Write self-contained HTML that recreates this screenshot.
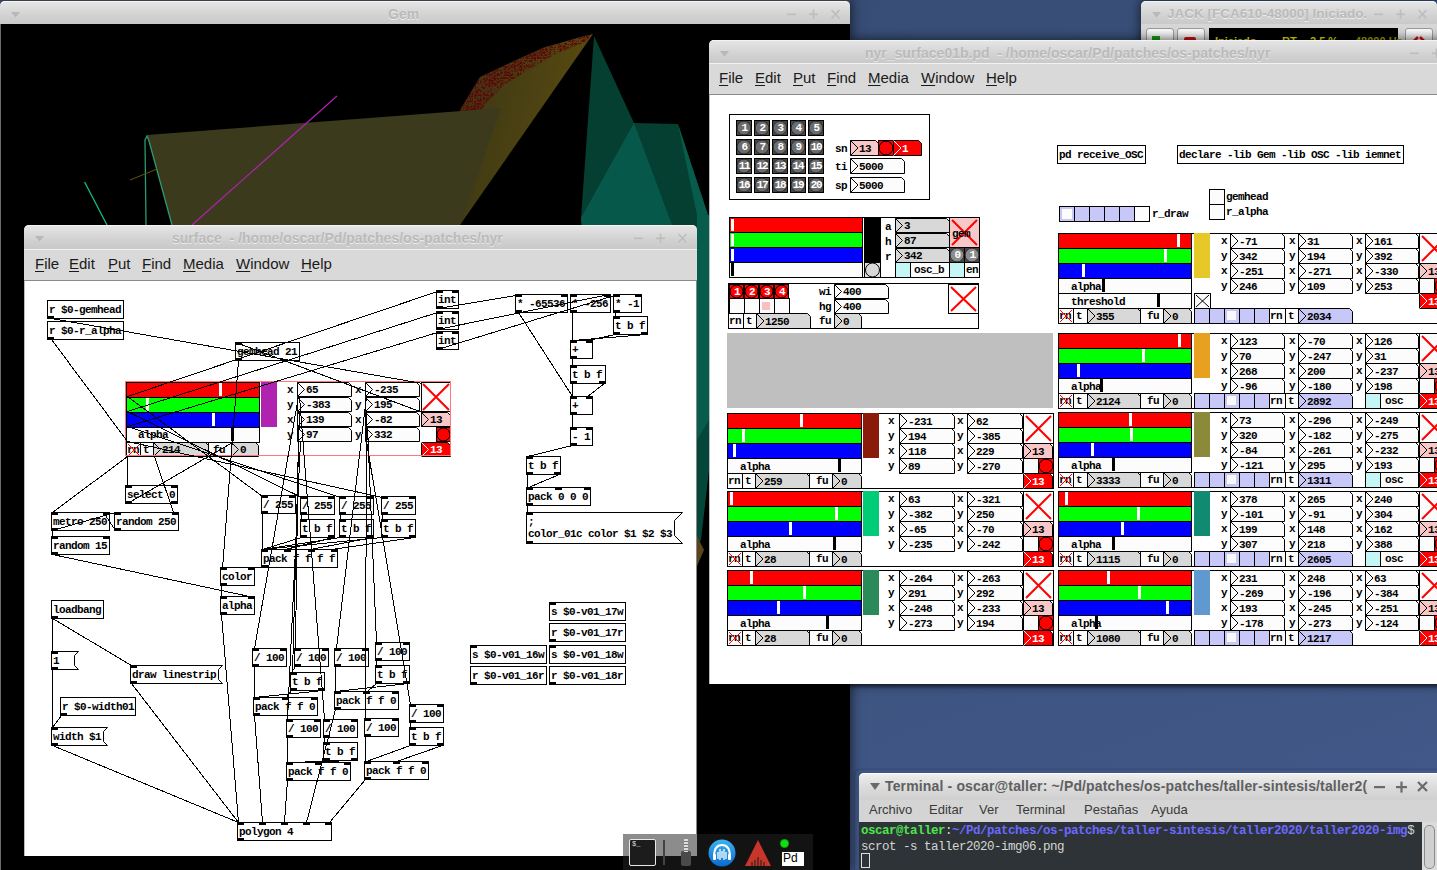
<!DOCTYPE html><html><head><meta charset="utf-8"><style>html,body{margin:0;padding:0;width:1437px;height:870px;overflow:hidden;position:relative;background:linear-gradient(160deg,#34496f 0%,#3a5079 40%,#42598a 100%);}div,svg{position:absolute}</style></head><body><div style="left:0;top:0;width:850px;height:870px;box-shadow:0 0 10px 2px rgba(0,0,0,.55)"></div><div style="left:0;top:0;width:850px;height:1px;background:#3a3f4a"></div><div style="position:absolute;left:0px;top:1px;width:850px;height:24px;border-radius:5px 5px 0 0;background:linear-gradient(#e6e6e6,#d2d2d2 60%,#c8c8c8);box-shadow:inset 0 1px 0 #f4f4f4;"></div><svg style="position:absolute;left:10px;top:11px" width="12" height="8"><polygon points="1,1 10,1 5.5,6.5" fill="#b8b8b8"/></svg><div style="position:absolute;left:388px;top:6px;white-space:pre;color:#bababa;font-family:'Liberation Sans',sans-serif;font-weight:bold;font-size:14px;line-height:16px;text-shadow:0 1px 0 #ececec;">Gem</div><svg style="position:absolute;left:786px;top:9px" width="56" height="12"><rect x="1" y="4.5" width="9" height="1.6" fill="#bdbdbd"/><rect x="23" y="4.5" width="9" height="1.6" fill="#bdbdbd"/><rect x="26.7" y="0.5" width="1.6" height="9.5" fill="#bdbdbd"/><path d="M45.5,1 L53.5,9.5 M53.5,1 L45.5,9.5" stroke="#bdbdbd" stroke-width="1.6"/></svg><div style="position:absolute;left:0px;top:24px;width:850px;height:846px;background:#000;"></div><div style="left:0;top:24px;width:1px;height:846px;background:#6a6a6a"></div><svg style="left:0;top:24px" width="850" height="846" viewBox="0 24 850 846">
<defs><linearGradient id="yl" x1="0" y1="0" x2="1" y2="0.3"><stop offset="0" stop-color="#3a3515"/><stop offset="0.6" stop-color="#4c4212"/><stop offset="1" stop-color="#5a4c10"/></linearGradient></defs>
<polygon points="460,110 480,77 514,61 544,47.6 579,37.6 593,34 460,225" fill="url(#yl)"/>
<filter id="spk" x="0" y="0" width="1" height="1" color-interpolation-filters="sRGB"><feTurbulence type="turbulence" baseFrequency="0.35" numOctaves="2" seed="7" result="n"/><feColorMatrix in="n" type="matrix" values="0 0 0 0 0.36  0 0 0 0 0.03  0 0 0 0 0.03  3.5 0 0 0 -0.35" result="c"/><feComposite in="c" in2="SourceGraphic" operator="in"/></filter>
<polygon points="460,110 480,77 514,61 544,47.6 579,37.6 593,34 585,42 560,52 535,66 505,84 485,104 470,130" fill="#fff" filter="url(#spk)"/>

<polygon points="147,135 501,108 460,225 172,225" fill="#3b3a1d"/>
<polygon points="594,36 634,123 678,124 708,215 697,215 697,240 586,240 581,218" fill="#053f32"/>
<polygon points="634,123 581,218 586,300 700,300" fill="#06594a"/>
<polygon points="678,124 708,215 709,215 709,450 697,450 697,215" fill="#075c4b"/>
<polygon points="697,440 709,420 709,470 701,540 697,545" fill="#05463a"/>
<polygon points="697,536 704,550 697,566" fill="#5a4418"/>
<line x1="84.6" y1="182" x2="107" y2="225" stroke="#14c07c" stroke-width="1.3"/>
<path d="M146,225 L145,140 L147,136 L149,141 L172,225" stroke="#2a9a72" stroke-width="1.3" fill="none"/>
<line x1="337" y1="96" x2="192" y2="225" stroke="#b022b0" stroke-width="1.2"/>
<line x1="130" y1="180" x2="157" y2="169" stroke="#6a5010" stroke-width="1"/>
</svg><div style="left:1141px;top:1px;width:300px;height:60px;border-radius:5px 5px 0 0;box-shadow:0 0 10px 2px rgba(0,0,0,.5)"></div><div style="position:absolute;left:1141px;top:1px;width:296px;height:24px;border-radius:5px 5px 0 0;background:linear-gradient(#e6e6e6,#d2d2d2 60%,#c8c8c8);box-shadow:inset 0 1px 0 #f4f4f4;"></div><svg style="position:absolute;left:1151px;top:11px" width="12" height="8"><polygon points="1,1 10,1 5.5,6.5" fill="#b8b8b8"/></svg><div style="position:absolute;left:1167px;top:6px;white-space:pre;color:#bababa;font-family:'Liberation Sans',sans-serif;font-weight:bold;font-size:13.5px;line-height:16px;text-shadow:0 1px 0 #ececec;">JACK [FCA610-48000] Iniciado.</div><svg style="position:absolute;left:1373px;top:9px" width="56" height="12"><rect x="1" y="4.5" width="9" height="1.6" fill="#bdbdbd"/><rect x="23" y="4.5" width="9" height="1.6" fill="#bdbdbd"/><rect x="26.7" y="0.5" width="1.6" height="9.5" fill="#bdbdbd"/><path d="M45.5,1 L53.5,9.5 M53.5,1 L45.5,9.5" stroke="#bdbdbd" stroke-width="1.6"/></svg><div style="position:absolute;left:1141px;top:24px;width:296px;height:16px;background:#d6d6d6;"></div><div style="left:1146px;top:28px;width:26px;height:14px;border:1px solid #9a9a9a;border-radius:3px;background:linear-gradient(#fafafa,#e4e4e4)"></div><div style="left:1177px;top:28px;width:26px;height:14px;border:1px solid #9a9a9a;border-radius:3px;background:linear-gradient(#fafafa,#e4e4e4)"></div><div style="left:1152px;top:36px;width:8px;height:6px;background:#1a9a1a"></div><div style="left:1184px;top:37px;width:12px;height:5px;background:#d01010;border-radius:2px"></div><div style="position:absolute;left:1209px;top:28px;width:189px;height:12px;background:#000;"></div><div style="position:absolute;left:1215px;top:35px;white-space:pre;color:#e0e000;font-family:'Liberation Sans',sans-serif;font-size:11px;font-weight:bold;line-height:12px">Iniciado</div><div style="position:absolute;left:1282px;top:35px;white-space:pre;color:#e0e000;font-family:'Liberation Sans',sans-serif;font-size:11px;font-weight:bold;line-height:12px">RT</div><div style="position:absolute;left:1310px;top:35px;white-space:pre;color:#e0e000;font-family:'Liberation Sans',sans-serif;font-size:11px;font-weight:bold;line-height:12px">2.5 %</div><div style="position:absolute;left:1355px;top:35px;white-space:pre;color:#a0a000;font-family:'Liberation Sans',sans-serif;font-size:11px;font-weight:bold;line-height:12px">48000 Hz</div><div style="left:1405px;top:28px;width:26px;height:14px;border:1px solid #9a9a9a;border-radius:3px;background:linear-gradient(#fafafa,#e4e4e4)"></div><svg style="left:1411px;top:36px" width="16" height="6"><path d="M2,6 L7,1 M9,1 L14,6" stroke="#d01010" stroke-width="2.5"/></svg><div style="position:absolute;left:24px;top:225px;width:673px;height:24px;border-radius:5px 5px 0 0;background:linear-gradient(#e6e6e6,#d2d2d2 60%,#c8c8c8);box-shadow:inset 0 1px 0 #f4f4f4;"></div><svg style="position:absolute;left:34px;top:235px" width="12" height="8"><polygon points="1,1 10,1 5.5,6.5" fill="#b8b8b8"/></svg><div style="position:absolute;left:172px;top:230px;white-space:pre;color:#bababa;font-family:'Liberation Sans',sans-serif;font-weight:bold;font-size:14px;line-height:16px;text-shadow:0 1px 0 #ececec;">surface  - /home/oscar/Pd/patches/os-patches/nyr</div><svg style="position:absolute;left:633px;top:233px" width="56" height="12"><rect x="1" y="4.5" width="9" height="1.6" fill="#bdbdbd"/><rect x="23" y="4.5" width="9" height="1.6" fill="#bdbdbd"/><rect x="26.7" y="0.5" width="1.6" height="9.5" fill="#bdbdbd"/><path d="M45.5,1 L53.5,9.5 M53.5,1 L45.5,9.5" stroke="#bdbdbd" stroke-width="1.6"/></svg><div style="position:absolute;left:24px;top:249px;width:673px;height:32px;background:#d9d9d9;border-top:1px solid #f2f2f2;border-bottom:1px solid #8a8a8a;box-sizing:border-box"></div><div style="position:absolute;left:35px;top:255px;white-space:pre;color:#1a1a1a;font-family:'Liberation Sans',sans-serif;font-size:15px;line-height:18px;"><span style="text-decoration:underline;text-underline-offset:2px">F</span>ile</div><div style="position:absolute;left:69px;top:255px;white-space:pre;color:#1a1a1a;font-family:'Liberation Sans',sans-serif;font-size:15px;line-height:18px;"><span style="text-decoration:underline;text-underline-offset:2px">E</span>dit</div><div style="position:absolute;left:108px;top:255px;white-space:pre;color:#1a1a1a;font-family:'Liberation Sans',sans-serif;font-size:15px;line-height:18px;"><span style="text-decoration:underline;text-underline-offset:2px">P</span>ut</div><div style="position:absolute;left:142px;top:255px;white-space:pre;color:#1a1a1a;font-family:'Liberation Sans',sans-serif;font-size:15px;line-height:18px;"><span style="text-decoration:underline;text-underline-offset:2px">F</span>ind</div><div style="position:absolute;left:183px;top:255px;white-space:pre;color:#1a1a1a;font-family:'Liberation Sans',sans-serif;font-size:15px;line-height:18px;"><span style="text-decoration:underline;text-underline-offset:2px">M</span>edia</div><div style="position:absolute;left:236px;top:255px;white-space:pre;color:#1a1a1a;font-family:'Liberation Sans',sans-serif;font-size:15px;line-height:18px;"><span style="text-decoration:underline;text-underline-offset:2px">W</span>indow</div><div style="position:absolute;left:301px;top:255px;white-space:pre;color:#1a1a1a;font-family:'Liberation Sans',sans-serif;font-size:15px;line-height:18px;"><span style="text-decoration:underline;text-underline-offset:2px">H</span>elp</div><div style="position:absolute;left:24px;top:281px;width:673px;height:575px;background:#fff;border-left:1px solid #bbb;border-right:1px solid #888;box-sizing:border-box"></div><div style="left:850px;top:40px;width:600px;height:644px;border-radius:5px 5px 0 0;box-shadow:0 0 10px 2px rgba(0,0,0,.5)"></div><div style="left:709px;top:684px;width:728px;height:5px;background:linear-gradient(rgba(0,0,0,.45),rgba(0,0,0,0))"></div><div style="position:absolute;left:709px;top:40px;width:764px;height:24px;border-radius:5px 5px 0 0;background:linear-gradient(#e6e6e6,#d2d2d2 60%,#c8c8c8);box-shadow:inset 0 1px 0 #f4f4f4;"></div><svg style="position:absolute;left:719px;top:50px" width="12" height="8"><polygon points="1,1 10,1 5.5,6.5" fill="#b8b8b8"/></svg><div style="position:absolute;left:865px;top:45px;white-space:pre;color:#bababa;font-family:'Liberation Sans',sans-serif;font-weight:bold;font-size:14px;line-height:16px;text-shadow:0 1px 0 #ececec;">nyr_surface01b.pd  - /home/oscar/Pd/patches/os-patches/nyr</div><svg style="position:absolute;left:1409px;top:48px" width="56" height="12"><rect x="1" y="4.5" width="9" height="1.6" fill="#bdbdbd"/><rect x="23" y="4.5" width="9" height="1.6" fill="#bdbdbd"/><rect x="26.7" y="0.5" width="1.6" height="9.5" fill="#bdbdbd"/><path d="M45.5,1 L53.5,9.5 M53.5,1 L45.5,9.5" stroke="#bdbdbd" stroke-width="1.6"/></svg><div style="position:absolute;left:709px;top:63px;width:728px;height:32px;background:#d9d9d9;border-top:1px solid #f2f2f2;border-bottom:1px solid #8a8a8a;box-sizing:border-box"></div><div style="position:absolute;left:719px;top:69px;white-space:pre;color:#1a1a1a;font-family:'Liberation Sans',sans-serif;font-size:15px;line-height:18px;"><span style="text-decoration:underline;text-underline-offset:2px">F</span>ile</div><div style="position:absolute;left:755px;top:69px;white-space:pre;color:#1a1a1a;font-family:'Liberation Sans',sans-serif;font-size:15px;line-height:18px;"><span style="text-decoration:underline;text-underline-offset:2px">E</span>dit</div><div style="position:absolute;left:793px;top:69px;white-space:pre;color:#1a1a1a;font-family:'Liberation Sans',sans-serif;font-size:15px;line-height:18px;"><span style="text-decoration:underline;text-underline-offset:2px">P</span>ut</div><div style="position:absolute;left:827px;top:69px;white-space:pre;color:#1a1a1a;font-family:'Liberation Sans',sans-serif;font-size:15px;line-height:18px;"><span style="text-decoration:underline;text-underline-offset:2px">F</span>ind</div><div style="position:absolute;left:868px;top:69px;white-space:pre;color:#1a1a1a;font-family:'Liberation Sans',sans-serif;font-size:15px;line-height:18px;"><span style="text-decoration:underline;text-underline-offset:2px">M</span>edia</div><div style="position:absolute;left:921px;top:69px;white-space:pre;color:#1a1a1a;font-family:'Liberation Sans',sans-serif;font-size:15px;line-height:18px;"><span style="text-decoration:underline;text-underline-offset:2px">W</span>indow</div><div style="position:absolute;left:986px;top:69px;white-space:pre;color:#1a1a1a;font-family:'Liberation Sans',sans-serif;font-size:15px;line-height:18px;"><span style="text-decoration:underline;text-underline-offset:2px">H</span>elp</div><div style="position:absolute;left:709px;top:95px;width:728px;height:589px;background:#fff;border-left:1px solid #bbb;box-sizing:border-box"></div><div style="left:47px;top:300px;width:77px;height:19px;border:1px solid #000;box-sizing:border-box"></div><div style="left:47px;top:316px;width:7px;height:3px;background:#000"></div><div style="left:49px;top:302px;height:16px;line-height:16px;white-space:pre;color:#000;font-family:'Liberation Mono',monospace;font-weight:bold;font-size:11px;letter-spacing:-0.6px;">r $0-gemhead</div><div style="left:47px;top:321px;width:77px;height:19px;border:1px solid #000;box-sizing:border-box"></div><div style="left:47px;top:337px;width:7px;height:3px;background:#000"></div><div style="left:49px;top:323px;height:16px;line-height:16px;white-space:pre;color:#000;font-family:'Liberation Mono',monospace;font-weight:bold;font-size:11px;letter-spacing:-0.6px;">r $0-r_alpha</div><div style="left:235px;top:342px;width:65px;height:19px;border:1px solid #000;box-sizing:border-box"></div><div style="left:235px;top:342px;width:7px;height:3px;background:#000"></div><div style="left:235px;top:358px;width:7px;height:3px;background:#000"></div><div style="left:237px;top:344px;height:16px;line-height:16px;white-space:pre;color:#000;font-family:'Liberation Mono',monospace;font-weight:bold;font-size:11px;letter-spacing:-0.6px;">gemhead 21</div><div style="left:436px;top:290px;width:23px;height:19px;border:1px solid #000;box-sizing:border-box"></div><div style="left:436px;top:290px;width:7px;height:3px;background:#000"></div><div style="left:452px;top:290px;width:7px;height:3px;background:#000"></div><div style="left:436px;top:306px;width:7px;height:3px;background:#000"></div><div style="left:438px;top:292px;height:16px;line-height:16px;white-space:pre;color:#000;font-family:'Liberation Mono',monospace;font-weight:bold;font-size:11px;letter-spacing:-0.6px;">int</div><div style="left:436px;top:311px;width:23px;height:19px;border:1px solid #000;box-sizing:border-box"></div><div style="left:436px;top:311px;width:7px;height:3px;background:#000"></div><div style="left:452px;top:311px;width:7px;height:3px;background:#000"></div><div style="left:436px;top:327px;width:7px;height:3px;background:#000"></div><div style="left:438px;top:313px;height:16px;line-height:16px;white-space:pre;color:#000;font-family:'Liberation Mono',monospace;font-weight:bold;font-size:11px;letter-spacing:-0.6px;">int</div><div style="left:436px;top:331px;width:23px;height:19px;border:1px solid #000;box-sizing:border-box"></div><div style="left:436px;top:331px;width:7px;height:3px;background:#000"></div><div style="left:452px;top:331px;width:7px;height:3px;background:#000"></div><div style="left:436px;top:347px;width:7px;height:3px;background:#000"></div><div style="left:438px;top:333px;height:16px;line-height:16px;white-space:pre;color:#000;font-family:'Liberation Mono',monospace;font-weight:bold;font-size:11px;letter-spacing:-0.6px;">int</div><div style="left:515px;top:294px;width:53px;height:19px;border:1px solid #000;box-sizing:border-box"></div><div style="left:515px;top:294px;width:7px;height:3px;background:#000"></div><div style="left:561px;top:294px;width:7px;height:3px;background:#000"></div><div style="left:515px;top:310px;width:7px;height:3px;background:#000"></div><div style="left:517px;top:296px;height:16px;line-height:16px;white-space:pre;color:#000;font-family:'Liberation Mono',monospace;font-weight:bold;font-size:11px;letter-spacing:-0.6px;">* -65536</div><div style="left:570px;top:294px;width:41px;height:19px;border:1px solid #000;box-sizing:border-box"></div><div style="left:570px;top:294px;width:7px;height:3px;background:#000"></div><div style="left:604px;top:294px;width:7px;height:3px;background:#000"></div><div style="left:570px;top:310px;width:7px;height:3px;background:#000"></div><div style="left:572px;top:296px;height:16px;line-height:16px;white-space:pre;color:#000;font-family:'Liberation Mono',monospace;font-weight:bold;font-size:11px;letter-spacing:-0.6px;">* -256</div><div style="left:613px;top:294px;width:29px;height:19px;border:1px solid #000;box-sizing:border-box"></div><div style="left:613px;top:294px;width:7px;height:3px;background:#000"></div><div style="left:635px;top:294px;width:7px;height:3px;background:#000"></div><div style="left:613px;top:310px;width:7px;height:3px;background:#000"></div><div style="left:615px;top:296px;height:16px;line-height:16px;white-space:pre;color:#000;font-family:'Liberation Mono',monospace;font-weight:bold;font-size:11px;letter-spacing:-0.6px;">* -1</div><div style="left:613px;top:316px;width:35px;height:19px;border:1px solid #000;box-sizing:border-box"></div><div style="left:613px;top:316px;width:7px;height:3px;background:#000"></div><div style="left:613px;top:332px;width:7px;height:3px;background:#000"></div><div style="left:641px;top:332px;width:7px;height:3px;background:#000"></div><div style="left:615px;top:318px;height:16px;line-height:16px;white-space:pre;color:#000;font-family:'Liberation Mono',monospace;font-weight:bold;font-size:11px;letter-spacing:-0.6px;">t b f</div><div style="left:570px;top:340px;width:23px;height:19px;border:1px solid #000;box-sizing:border-box"></div><div style="left:570px;top:340px;width:7px;height:3px;background:#000"></div><div style="left:586px;top:340px;width:7px;height:3px;background:#000"></div><div style="left:570px;top:356px;width:7px;height:3px;background:#000"></div><div style="left:572px;top:342px;height:16px;line-height:16px;white-space:pre;color:#000;font-family:'Liberation Mono',monospace;font-weight:bold;font-size:11px;letter-spacing:-0.6px;">+</div><div style="left:570px;top:365px;width:36px;height:19px;border:1px solid #000;box-sizing:border-box"></div><div style="left:570px;top:365px;width:7px;height:3px;background:#000"></div><div style="left:570px;top:381px;width:7px;height:3px;background:#000"></div><div style="left:599px;top:381px;width:7px;height:3px;background:#000"></div><div style="left:572px;top:367px;height:16px;line-height:16px;white-space:pre;color:#000;font-family:'Liberation Mono',monospace;font-weight:bold;font-size:11px;letter-spacing:-0.6px;">t b f</div><div style="left:570px;top:396px;width:23px;height:19px;border:1px solid #000;box-sizing:border-box"></div><div style="left:570px;top:396px;width:7px;height:3px;background:#000"></div><div style="left:586px;top:396px;width:7px;height:3px;background:#000"></div><div style="left:570px;top:412px;width:7px;height:3px;background:#000"></div><div style="left:572px;top:398px;height:16px;line-height:16px;white-space:pre;color:#000;font-family:'Liberation Mono',monospace;font-weight:bold;font-size:11px;letter-spacing:-0.6px;">+</div><div style="left:570px;top:427px;width:23px;height:19px;border:1px solid #000;box-sizing:border-box"></div><div style="left:570px;top:427px;width:7px;height:3px;background:#000"></div><div style="left:586px;top:427px;width:7px;height:3px;background:#000"></div><div style="left:570px;top:443px;width:7px;height:3px;background:#000"></div><div style="left:572px;top:429px;height:16px;line-height:16px;white-space:pre;color:#000;font-family:'Liberation Mono',monospace;font-weight:bold;font-size:11px;letter-spacing:-0.6px;">- 1</div><div style="left:526px;top:456px;width:35px;height:19px;border:1px solid #000;box-sizing:border-box"></div><div style="left:526px;top:456px;width:7px;height:3px;background:#000"></div><div style="left:526px;top:472px;width:7px;height:3px;background:#000"></div><div style="left:554px;top:472px;width:7px;height:3px;background:#000"></div><div style="left:528px;top:458px;height:16px;line-height:16px;white-space:pre;color:#000;font-family:'Liberation Mono',monospace;font-weight:bold;font-size:11px;letter-spacing:-0.6px;">t b f</div><div style="left:526px;top:487px;width:65px;height:19px;border:1px solid #000;box-sizing:border-box"></div><div style="left:526px;top:487px;width:7px;height:3px;background:#000"></div><div style="left:555px;top:487px;width:7px;height:3px;background:#000"></div><div style="left:584px;top:487px;width:7px;height:3px;background:#000"></div><div style="left:526px;top:503px;width:7px;height:3px;background:#000"></div><div style="left:528px;top:489px;height:16px;line-height:16px;white-space:pre;color:#000;font-family:'Liberation Mono',monospace;font-weight:bold;font-size:11px;letter-spacing:-0.6px;">pack 0 0 0</div><svg style="left:526px;top:512px" width="158" height="33"><polygon points="0.5,0.5 156.5,0.5 148.5,8.5 148.5,23.5 156.5,31.5 0.5,31.5" fill="none" stroke="#000" stroke-width="1"/></svg><div style="left:526px;top:512px;width:7px;height:3px;background:#000"></div><div style="left:526px;top:541px;width:7px;height:3px;background:#000"></div><div style="left:528px;top:514px;height:16px;line-height:16px;white-space:pre;color:#000;font-family:'Liberation Mono',monospace;font-weight:bold;font-size:11px;letter-spacing:-0.6px;">;</div><div style="left:528px;top:526px;height:16px;line-height:16px;white-space:pre;color:#000;font-family:'Liberation Mono',monospace;font-weight:bold;font-size:11px;letter-spacing:-0.6px;">color_01c color $1 $2 $3</div><div style="left:126px;top:382px;width:134px;height:16px;background:#f00;border:1px solid #000;box-sizing:border-box"></div><div style="left:126px;top:397px;width:134px;height:16px;background:#0f0;border:1px solid #000;box-sizing:border-box"></div><div style="left:126px;top:412px;width:134px;height:16px;background:#00f;border:1px solid #000;box-sizing:border-box"></div><div style="left:126px;top:427px;width:134px;height:16px;background:#fcfcfc;border:1px solid #000;box-sizing:border-box"></div><div style="position:absolute;left:219px;top:383px;width:3px;height:13px;background:#fff;"></div><div style="position:absolute;left:146px;top:398px;width:3px;height:13px;background:#fff;"></div><div style="position:absolute;left:212px;top:413px;width:3px;height:13px;background:#fff;"></div><div style="position:absolute;left:231px;top:428px;width:3px;height:13px;background:#000;"></div><div style="left:138px;top:428px;height:15px;line-height:15px;white-space:pre;color:#000;font-family:'Liberation Mono',monospace;font-weight:bold;font-size:11px;letter-spacing:-0.6px;">alpha</div><div style="left:126px;top:442px;width:15px;height:15px;background:#fcfcfc;border:1px solid #000;box-sizing:border-box"></div><div style="left:127px;top:443px;height:15px;line-height:15px;white-space:pre;color:#000;font-family:'Liberation Mono',monospace;font-weight:bold;font-size:11px;letter-spacing:-0.6px;">rn</div><svg style="left:127px;top:443px" width="14" height="14"><path d="M1,1 L13,13 M13,1 L1,13" stroke="#f00" stroke-width="1"/></svg><div style="left:140px;top:442px;width:14px;height:15px;background:#fcfcfc;border:1px solid #000;box-sizing:border-box"></div><div style="left:143px;top:443px;height:15px;line-height:15px;white-space:pre;color:#000;font-family:'Liberation Mono',monospace;font-weight:bold;font-size:11px;letter-spacing:-0.6px;">t</div><svg style="left:153px;top:442px" width="56" height="15"><polygon points="0.5,0.5 52.5,0.5 55.5,3.5 55.5,14.5 0.5,14.5" fill="#d8d8d8" stroke="#000" stroke-width="1"/><polyline points="0.5,0.5 7.5,7.5 0.5,14.5" fill="none" stroke="#000" stroke-width="1"/></svg><div style="left:162px;top:443px;height:14px;line-height:15px;white-space:pre;color:#000;font-family:'Liberation Mono',monospace;font-weight:bold;font-size:11px;letter-spacing:-0.6px;">214</div><div style="left:208px;top:442px;width:24px;height:15px;background:#fcfcfc;border:1px solid #000;box-sizing:border-box"></div><div style="left:213px;top:443px;height:15px;line-height:15px;white-space:pre;color:#000;font-family:'Liberation Mono',monospace;font-weight:bold;font-size:11px;letter-spacing:-0.6px;">fu</div><svg style="left:231px;top:442px" width="28" height="15"><polygon points="0.5,0.5 24.5,0.5 27.5,3.5 27.5,14.5 0.5,14.5" fill="#d8d8d8" stroke="#000" stroke-width="1"/><polyline points="0.5,0.5 7.5,7.5 0.5,14.5" fill="none" stroke="#000" stroke-width="1"/></svg><div style="left:240px;top:443px;height:14px;line-height:15px;white-space:pre;color:#000;font-family:'Liberation Mono',monospace;font-weight:bold;font-size:11px;letter-spacing:-0.6px;">0</div><div style="position:absolute;left:261px;top:382px;width:16px;height:45px;background:#b022b0;"></div><div style="left:287px;top:383px;height:15px;line-height:15px;white-space:pre;color:#000;font-family:'Liberation Mono',monospace;font-weight:bold;font-size:11px;letter-spacing:-0.6px;">x</div><svg style="left:297px;top:382px" width="55" height="15"><polygon points="0.5,0.5 51.5,0.5 54.5,3.5 54.5,14.5 0.5,14.5" fill="#fcfcfc" stroke="#000" stroke-width="1"/><polyline points="0.5,0.5 7.5,7.5 0.5,14.5" fill="none" stroke="#000" stroke-width="1"/></svg><div style="left:306px;top:383px;height:14px;line-height:15px;white-space:pre;color:#000;font-family:'Liberation Mono',monospace;font-weight:bold;font-size:11px;letter-spacing:-0.6px;">65</div><div style="left:287px;top:398px;height:15px;line-height:15px;white-space:pre;color:#000;font-family:'Liberation Mono',monospace;font-weight:bold;font-size:11px;letter-spacing:-0.6px;">y</div><svg style="left:297px;top:397px" width="55" height="15"><polygon points="0.5,0.5 51.5,0.5 54.5,3.5 54.5,14.5 0.5,14.5" fill="#fcfcfc" stroke="#000" stroke-width="1"/><polyline points="0.5,0.5 7.5,7.5 0.5,14.5" fill="none" stroke="#000" stroke-width="1"/></svg><div style="left:306px;top:398px;height:14px;line-height:15px;white-space:pre;color:#000;font-family:'Liberation Mono',monospace;font-weight:bold;font-size:11px;letter-spacing:-0.6px;">-383</div><div style="left:287px;top:413px;height:15px;line-height:15px;white-space:pre;color:#000;font-family:'Liberation Mono',monospace;font-weight:bold;font-size:11px;letter-spacing:-0.6px;">x</div><svg style="left:297px;top:412px" width="55" height="15"><polygon points="0.5,0.5 51.5,0.5 54.5,3.5 54.5,14.5 0.5,14.5" fill="#fcfcfc" stroke="#000" stroke-width="1"/><polyline points="0.5,0.5 7.5,7.5 0.5,14.5" fill="none" stroke="#000" stroke-width="1"/></svg><div style="left:306px;top:413px;height:14px;line-height:15px;white-space:pre;color:#000;font-family:'Liberation Mono',monospace;font-weight:bold;font-size:11px;letter-spacing:-0.6px;">139</div><div style="left:287px;top:428px;height:15px;line-height:15px;white-space:pre;color:#000;font-family:'Liberation Mono',monospace;font-weight:bold;font-size:11px;letter-spacing:-0.6px;">y</div><svg style="left:297px;top:427px" width="55" height="15"><polygon points="0.5,0.5 51.5,0.5 54.5,3.5 54.5,14.5 0.5,14.5" fill="#fcfcfc" stroke="#000" stroke-width="1"/><polyline points="0.5,0.5 7.5,7.5 0.5,14.5" fill="none" stroke="#000" stroke-width="1"/></svg><div style="left:306px;top:428px;height:14px;line-height:15px;white-space:pre;color:#000;font-family:'Liberation Mono',monospace;font-weight:bold;font-size:11px;letter-spacing:-0.6px;">97</div><div style="left:355px;top:383px;height:15px;line-height:15px;white-space:pre;color:#000;font-family:'Liberation Mono',monospace;font-weight:bold;font-size:11px;letter-spacing:-0.6px;">x</div><svg style="left:365px;top:382px" width="55" height="15"><polygon points="0.5,0.5 51.5,0.5 54.5,3.5 54.5,14.5 0.5,14.5" fill="#fcfcfc" stroke="#000" stroke-width="1"/><polyline points="0.5,0.5 7.5,7.5 0.5,14.5" fill="none" stroke="#000" stroke-width="1"/></svg><div style="left:374px;top:383px;height:14px;line-height:15px;white-space:pre;color:#000;font-family:'Liberation Mono',monospace;font-weight:bold;font-size:11px;letter-spacing:-0.6px;">-235</div><div style="left:355px;top:398px;height:15px;line-height:15px;white-space:pre;color:#000;font-family:'Liberation Mono',monospace;font-weight:bold;font-size:11px;letter-spacing:-0.6px;">y</div><svg style="left:365px;top:397px" width="55" height="15"><polygon points="0.5,0.5 51.5,0.5 54.5,3.5 54.5,14.5 0.5,14.5" fill="#fcfcfc" stroke="#000" stroke-width="1"/><polyline points="0.5,0.5 7.5,7.5 0.5,14.5" fill="none" stroke="#000" stroke-width="1"/></svg><div style="left:374px;top:398px;height:14px;line-height:15px;white-space:pre;color:#000;font-family:'Liberation Mono',monospace;font-weight:bold;font-size:11px;letter-spacing:-0.6px;">195</div><div style="left:355px;top:413px;height:15px;line-height:15px;white-space:pre;color:#000;font-family:'Liberation Mono',monospace;font-weight:bold;font-size:11px;letter-spacing:-0.6px;">x</div><svg style="left:365px;top:412px" width="55" height="15"><polygon points="0.5,0.5 51.5,0.5 54.5,3.5 54.5,14.5 0.5,14.5" fill="#fcfcfc" stroke="#000" stroke-width="1"/><polyline points="0.5,0.5 7.5,7.5 0.5,14.5" fill="none" stroke="#000" stroke-width="1"/></svg><div style="left:374px;top:413px;height:14px;line-height:15px;white-space:pre;color:#000;font-family:'Liberation Mono',monospace;font-weight:bold;font-size:11px;letter-spacing:-0.6px;">-82</div><div style="left:355px;top:428px;height:15px;line-height:15px;white-space:pre;color:#000;font-family:'Liberation Mono',monospace;font-weight:bold;font-size:11px;letter-spacing:-0.6px;">y</div><svg style="left:365px;top:427px" width="55" height="15"><polygon points="0.5,0.5 51.5,0.5 54.5,3.5 54.5,14.5 0.5,14.5" fill="#fcfcfc" stroke="#000" stroke-width="1"/><polyline points="0.5,0.5 7.5,7.5 0.5,14.5" fill="none" stroke="#000" stroke-width="1"/></svg><div style="left:374px;top:428px;height:14px;line-height:15px;white-space:pre;color:#000;font-family:'Liberation Mono',monospace;font-weight:bold;font-size:11px;letter-spacing:-0.6px;">332</div><div style="left:421px;top:382px;width:30px;height:30px;background:#fcfcfc;border:1px solid #000;box-sizing:border-box"></div><svg style="left:421px;top:382px" width="30" height="30"><path d="M2,2 L28,28 M28,2 L2,28" stroke="#f00" stroke-width="2"/></svg><svg style="left:421px;top:412px" width="30" height="15"><polygon points="0.5,0.5 26.5,0.5 29.5,3.5 29.5,14.5 0.5,14.5" fill="#f8c8c8" stroke="#000" stroke-width="1"/><polyline points="0.5,0.5 7.5,7.5 0.5,14.5" fill="none" stroke="#000" stroke-width="1"/></svg><div style="left:430px;top:413px;height:14px;line-height:15px;white-space:pre;color:#000;font-family:'Liberation Mono',monospace;font-weight:bold;font-size:11px;letter-spacing:-0.6px;">13</div><div style="left:436px;top:427px;width:15px;height:15px;background:#f00;border:1px solid #000;box-sizing:border-box"></div><svg style="left:436px;top:427px" width="15" height="15"><circle cx="7.5" cy="7.5" r="6.5" fill="#f00" stroke="#000" stroke-width="1"/></svg><svg style="left:421px;top:442px" width="30" height="15"><polygon points="0.5,0.5 26.5,0.5 29.5,3.5 29.5,14.5 0.5,14.5" fill="#f00" stroke="#000" stroke-width="1"/><polyline points="0.5,0.5 7.5,7.5 0.5,14.5" fill="none" stroke="#fff" stroke-width="1"/></svg><div style="left:430px;top:443px;height:14px;line-height:15px;white-space:pre;color:#fff;font-family:'Liberation Mono',monospace;font-weight:bold;font-size:11px;letter-spacing:-0.6px;">13</div><div style="left:125px;top:381px;width:326px;height:75px;border:1px solid #ff7878;box-sizing:border-box"></div><div style="left:125px;top:485px;width:53px;height:19px;border:1px solid #000;box-sizing:border-box"></div><div style="left:125px;top:485px;width:7px;height:3px;background:#000"></div><div style="left:171px;top:485px;width:7px;height:3px;background:#000"></div><div style="left:125px;top:501px;width:7px;height:3px;background:#000"></div><div style="left:171px;top:501px;width:7px;height:3px;background:#000"></div><div style="left:127px;top:487px;height:16px;line-height:16px;white-space:pre;color:#000;font-family:'Liberation Mono',monospace;font-weight:bold;font-size:11px;letter-spacing:-0.6px;">select 0</div><div style="left:51px;top:512px;width:59px;height:19px;border:1px solid #000;box-sizing:border-box"></div><div style="left:51px;top:512px;width:7px;height:3px;background:#000"></div><div style="left:103px;top:512px;width:7px;height:3px;background:#000"></div><div style="left:51px;top:528px;width:7px;height:3px;background:#000"></div><div style="left:53px;top:514px;height:16px;line-height:16px;white-space:pre;color:#000;font-family:'Liberation Mono',monospace;font-weight:bold;font-size:11px;letter-spacing:-0.6px;">metro 250</div><div style="left:114px;top:512px;width:65px;height:19px;border:1px solid #000;box-sizing:border-box"></div><div style="left:114px;top:512px;width:7px;height:3px;background:#000"></div><div style="left:172px;top:512px;width:7px;height:3px;background:#000"></div><div style="left:114px;top:528px;width:7px;height:3px;background:#000"></div><div style="left:116px;top:514px;height:16px;line-height:16px;white-space:pre;color:#000;font-family:'Liberation Mono',monospace;font-weight:bold;font-size:11px;letter-spacing:-0.6px;">random 250</div><div style="left:51px;top:536px;width:59px;height:19px;border:1px solid #000;box-sizing:border-box"></div><div style="left:51px;top:536px;width:7px;height:3px;background:#000"></div><div style="left:103px;top:536px;width:7px;height:3px;background:#000"></div><div style="left:51px;top:552px;width:7px;height:3px;background:#000"></div><div style="left:53px;top:538px;height:16px;line-height:16px;white-space:pre;color:#000;font-family:'Liberation Mono',monospace;font-weight:bold;font-size:11px;letter-spacing:-0.6px;">random 15</div><div style="left:51px;top:600px;width:53px;height:19px;border:1px solid #000;box-sizing:border-box"></div><div style="left:51px;top:616px;width:7px;height:3px;background:#000"></div><div style="left:53px;top:602px;height:16px;line-height:16px;white-space:pre;color:#000;font-family:'Liberation Mono',monospace;font-weight:bold;font-size:11px;letter-spacing:-0.6px;">loadbang</div><div style="left:220px;top:567px;width:35px;height:19px;border:1px solid #000;box-sizing:border-box"></div><div style="left:220px;top:567px;width:7px;height:3px;background:#000"></div><div style="left:248px;top:567px;width:7px;height:3px;background:#000"></div><div style="left:220px;top:583px;width:7px;height:3px;background:#000"></div><div style="left:222px;top:569px;height:16px;line-height:16px;white-space:pre;color:#000;font-family:'Liberation Mono',monospace;font-weight:bold;font-size:11px;letter-spacing:-0.6px;">color</div><div style="left:220px;top:596px;width:35px;height:19px;border:1px solid #000;box-sizing:border-box"></div><div style="left:220px;top:596px;width:7px;height:3px;background:#000"></div><div style="left:248px;top:596px;width:7px;height:3px;background:#000"></div><div style="left:220px;top:612px;width:7px;height:3px;background:#000"></div><div style="left:222px;top:598px;height:16px;line-height:16px;white-space:pre;color:#000;font-family:'Liberation Mono',monospace;font-weight:bold;font-size:11px;letter-spacing:-0.6px;">alpha</div><div style="left:261px;top:495px;width:35px;height:19px;border:1px solid #000;box-sizing:border-box"></div><div style="left:261px;top:495px;width:7px;height:3px;background:#000"></div><div style="left:289px;top:495px;width:7px;height:3px;background:#000"></div><div style="left:261px;top:511px;width:7px;height:3px;background:#000"></div><div style="left:263px;top:497px;height:16px;line-height:16px;white-space:pre;color:#000;font-family:'Liberation Mono',monospace;font-weight:bold;font-size:11px;letter-spacing:-0.6px;">/ 255</div><div style="left:300px;top:496px;width:35px;height:19px;border:1px solid #000;box-sizing:border-box"></div><div style="left:300px;top:496px;width:7px;height:3px;background:#000"></div><div style="left:328px;top:496px;width:7px;height:3px;background:#000"></div><div style="left:300px;top:512px;width:7px;height:3px;background:#000"></div><div style="left:302px;top:498px;height:16px;line-height:16px;white-space:pre;color:#000;font-family:'Liberation Mono',monospace;font-weight:bold;font-size:11px;letter-spacing:-0.6px;">/ 255</div><div style="left:300px;top:519px;width:35px;height:19px;border:1px solid #000;box-sizing:border-box"></div><div style="left:300px;top:519px;width:7px;height:3px;background:#000"></div><div style="left:300px;top:535px;width:7px;height:3px;background:#000"></div><div style="left:328px;top:535px;width:7px;height:3px;background:#000"></div><div style="left:302px;top:521px;height:16px;line-height:16px;white-space:pre;color:#000;font-family:'Liberation Mono',monospace;font-weight:bold;font-size:11px;letter-spacing:-0.6px;">t b f</div><div style="left:339px;top:496px;width:35px;height:19px;border:1px solid #000;box-sizing:border-box"></div><div style="left:339px;top:496px;width:7px;height:3px;background:#000"></div><div style="left:367px;top:496px;width:7px;height:3px;background:#000"></div><div style="left:339px;top:512px;width:7px;height:3px;background:#000"></div><div style="left:341px;top:498px;height:16px;line-height:16px;white-space:pre;color:#000;font-family:'Liberation Mono',monospace;font-weight:bold;font-size:11px;letter-spacing:-0.6px;">/ 255</div><div style="left:339px;top:519px;width:35px;height:19px;border:1px solid #000;box-sizing:border-box"></div><div style="left:339px;top:519px;width:7px;height:3px;background:#000"></div><div style="left:339px;top:535px;width:7px;height:3px;background:#000"></div><div style="left:367px;top:535px;width:7px;height:3px;background:#000"></div><div style="left:341px;top:521px;height:16px;line-height:16px;white-space:pre;color:#000;font-family:'Liberation Mono',monospace;font-weight:bold;font-size:11px;letter-spacing:-0.6px;">t b f</div><div style="left:381px;top:496px;width:35px;height:19px;border:1px solid #000;box-sizing:border-box"></div><div style="left:381px;top:496px;width:7px;height:3px;background:#000"></div><div style="left:409px;top:496px;width:7px;height:3px;background:#000"></div><div style="left:381px;top:512px;width:7px;height:3px;background:#000"></div><div style="left:383px;top:498px;height:16px;line-height:16px;white-space:pre;color:#000;font-family:'Liberation Mono',monospace;font-weight:bold;font-size:11px;letter-spacing:-0.6px;">/ 255</div><div style="left:381px;top:519px;width:35px;height:19px;border:1px solid #000;box-sizing:border-box"></div><div style="left:381px;top:519px;width:7px;height:3px;background:#000"></div><div style="left:381px;top:535px;width:7px;height:3px;background:#000"></div><div style="left:409px;top:535px;width:7px;height:3px;background:#000"></div><div style="left:383px;top:521px;height:16px;line-height:16px;white-space:pre;color:#000;font-family:'Liberation Mono',monospace;font-weight:bold;font-size:11px;letter-spacing:-0.6px;">t b f</div><div style="left:261px;top:549px;width:77px;height:19px;border:1px solid #000;box-sizing:border-box"></div><div style="left:261px;top:549px;width:7px;height:3px;background:#000"></div><div style="left:284px;top:549px;width:7px;height:3px;background:#000"></div><div style="left:308px;top:549px;width:7px;height:3px;background:#000"></div><div style="left:331px;top:549px;width:7px;height:3px;background:#000"></div><div style="left:261px;top:565px;width:7px;height:3px;background:#000"></div><div style="left:263px;top:551px;height:16px;line-height:16px;white-space:pre;color:#000;font-family:'Liberation Mono',monospace;font-weight:bold;font-size:11px;letter-spacing:-0.6px;">pack f f f f</div><svg style="left:51px;top:651px" width="29" height="20"><polygon points="0.5,0.5 27.5,0.5 23.5,4.5 23.5,14.5 27.5,18.5 0.5,18.5" fill="none" stroke="#000" stroke-width="1"/></svg><div style="left:51px;top:651px;width:7px;height:3px;background:#000"></div><div style="left:51px;top:667px;width:7px;height:3px;background:#000"></div><div style="left:53px;top:653px;height:16px;line-height:16px;white-space:pre;color:#000;font-family:'Liberation Mono',monospace;font-weight:bold;font-size:11px;letter-spacing:-0.6px;">1</div><svg style="left:130px;top:665px" width="94" height="20"><polygon points="0.5,0.5 92.5,0.5 88.5,4.5 88.5,14.5 92.5,18.5 0.5,18.5" fill="none" stroke="#000" stroke-width="1"/></svg><div style="left:130px;top:665px;width:7px;height:3px;background:#000"></div><div style="left:130px;top:681px;width:7px;height:3px;background:#000"></div><div style="left:132px;top:667px;height:16px;line-height:16px;white-space:pre;color:#000;font-family:'Liberation Mono',monospace;font-weight:bold;font-size:11px;letter-spacing:-0.6px;">draw linestrip</div><div style="left:60px;top:697px;width:76px;height:19px;border:1px solid #000;box-sizing:border-box"></div><div style="left:60px;top:713px;width:7px;height:3px;background:#000"></div><div style="left:62px;top:699px;height:16px;line-height:16px;white-space:pre;color:#000;font-family:'Liberation Mono',monospace;font-weight:bold;font-size:11px;letter-spacing:-0.6px;">r $0-width01</div><svg style="left:51px;top:727px" width="58" height="20"><polygon points="0.5,0.5 56.5,0.5 52.5,4.5 52.5,14.5 56.5,18.5 0.5,18.5" fill="none" stroke="#000" stroke-width="1"/></svg><div style="left:51px;top:727px;width:7px;height:3px;background:#000"></div><div style="left:51px;top:743px;width:7px;height:3px;background:#000"></div><div style="left:53px;top:729px;height:16px;line-height:16px;white-space:pre;color:#000;font-family:'Liberation Mono',monospace;font-weight:bold;font-size:11px;letter-spacing:-0.6px;">width $1</div><div style="left:237px;top:822px;width:95px;height:19px;border:1px solid #000;box-sizing:border-box"></div><div style="left:237px;top:822px;width:7px;height:3px;background:#000"></div><div style="left:259px;top:822px;width:7px;height:3px;background:#000"></div><div style="left:281px;top:822px;width:7px;height:3px;background:#000"></div><div style="left:303px;top:822px;width:7px;height:3px;background:#000"></div><div style="left:325px;top:822px;width:7px;height:3px;background:#000"></div><div style="left:237px;top:838px;width:7px;height:3px;background:#000"></div><div style="left:239px;top:824px;height:16px;line-height:16px;white-space:pre;color:#000;font-family:'Liberation Mono',monospace;font-weight:bold;font-size:11px;letter-spacing:-0.6px;">polygon 4</div><div style="left:252px;top:648px;width:35px;height:19px;border:1px solid #000;box-sizing:border-box"></div><div style="left:252px;top:648px;width:7px;height:3px;background:#000"></div><div style="left:280px;top:648px;width:7px;height:3px;background:#000"></div><div style="left:252px;top:664px;width:7px;height:3px;background:#000"></div><div style="left:254px;top:650px;height:16px;line-height:16px;white-space:pre;color:#000;font-family:'Liberation Mono',monospace;font-weight:bold;font-size:11px;letter-spacing:-0.6px;">/ 100</div><div style="left:294px;top:648px;width:35px;height:19px;border:1px solid #000;box-sizing:border-box"></div><div style="left:294px;top:648px;width:7px;height:3px;background:#000"></div><div style="left:322px;top:648px;width:7px;height:3px;background:#000"></div><div style="left:294px;top:664px;width:7px;height:3px;background:#000"></div><div style="left:296px;top:650px;height:16px;line-height:16px;white-space:pre;color:#000;font-family:'Liberation Mono',monospace;font-weight:bold;font-size:11px;letter-spacing:-0.6px;">/ 100</div><div style="left:334px;top:648px;width:35px;height:19px;border:1px solid #000;box-sizing:border-box"></div><div style="left:334px;top:648px;width:7px;height:3px;background:#000"></div><div style="left:362px;top:648px;width:7px;height:3px;background:#000"></div><div style="left:334px;top:664px;width:7px;height:3px;background:#000"></div><div style="left:336px;top:650px;height:16px;line-height:16px;white-space:pre;color:#000;font-family:'Liberation Mono',monospace;font-weight:bold;font-size:11px;letter-spacing:-0.6px;">/ 100</div><div style="left:375px;top:642px;width:35px;height:19px;border:1px solid #000;box-sizing:border-box"></div><div style="left:375px;top:642px;width:7px;height:3px;background:#000"></div><div style="left:403px;top:642px;width:7px;height:3px;background:#000"></div><div style="left:375px;top:658px;width:7px;height:3px;background:#000"></div><div style="left:377px;top:644px;height:16px;line-height:16px;white-space:pre;color:#000;font-family:'Liberation Mono',monospace;font-weight:bold;font-size:11px;letter-spacing:-0.6px;">/ 100</div><div style="left:375px;top:665px;width:35px;height:19px;border:1px solid #000;box-sizing:border-box"></div><div style="left:375px;top:665px;width:7px;height:3px;background:#000"></div><div style="left:375px;top:681px;width:7px;height:3px;background:#000"></div><div style="left:403px;top:681px;width:7px;height:3px;background:#000"></div><div style="left:377px;top:667px;height:16px;line-height:16px;white-space:pre;color:#000;font-family:'Liberation Mono',monospace;font-weight:bold;font-size:11px;letter-spacing:-0.6px;">t b f</div><div style="left:290px;top:672px;width:35px;height:19px;border:1px solid #000;box-sizing:border-box"></div><div style="left:290px;top:672px;width:7px;height:3px;background:#000"></div><div style="left:290px;top:688px;width:7px;height:3px;background:#000"></div><div style="left:318px;top:688px;width:7px;height:3px;background:#000"></div><div style="left:292px;top:674px;height:16px;line-height:16px;white-space:pre;color:#000;font-family:'Liberation Mono',monospace;font-weight:bold;font-size:11px;letter-spacing:-0.6px;">t b f</div><div style="left:253px;top:697px;width:65px;height:19px;border:1px solid #000;box-sizing:border-box"></div><div style="left:253px;top:697px;width:7px;height:3px;background:#000"></div><div style="left:282px;top:697px;width:7px;height:3px;background:#000"></div><div style="left:311px;top:697px;width:7px;height:3px;background:#000"></div><div style="left:253px;top:713px;width:7px;height:3px;background:#000"></div><div style="left:255px;top:699px;height:16px;line-height:16px;white-space:pre;color:#000;font-family:'Liberation Mono',monospace;font-weight:bold;font-size:11px;letter-spacing:-0.6px;">pack f f 0</div><div style="left:334px;top:691px;width:65px;height:19px;border:1px solid #000;box-sizing:border-box"></div><div style="left:334px;top:691px;width:7px;height:3px;background:#000"></div><div style="left:363px;top:691px;width:7px;height:3px;background:#000"></div><div style="left:392px;top:691px;width:7px;height:3px;background:#000"></div><div style="left:334px;top:707px;width:7px;height:3px;background:#000"></div><div style="left:336px;top:693px;height:16px;line-height:16px;white-space:pre;color:#000;font-family:'Liberation Mono',monospace;font-weight:bold;font-size:11px;letter-spacing:-0.6px;">pack f f 0</div><div style="left:409px;top:704px;width:35px;height:19px;border:1px solid #000;box-sizing:border-box"></div><div style="left:409px;top:704px;width:7px;height:3px;background:#000"></div><div style="left:437px;top:704px;width:7px;height:3px;background:#000"></div><div style="left:409px;top:720px;width:7px;height:3px;background:#000"></div><div style="left:411px;top:706px;height:16px;line-height:16px;white-space:pre;color:#000;font-family:'Liberation Mono',monospace;font-weight:bold;font-size:11px;letter-spacing:-0.6px;">/ 100</div><div style="left:409px;top:727px;width:35px;height:19px;border:1px solid #000;box-sizing:border-box"></div><div style="left:409px;top:727px;width:7px;height:3px;background:#000"></div><div style="left:409px;top:743px;width:7px;height:3px;background:#000"></div><div style="left:437px;top:743px;width:7px;height:3px;background:#000"></div><div style="left:411px;top:729px;height:16px;line-height:16px;white-space:pre;color:#000;font-family:'Liberation Mono',monospace;font-weight:bold;font-size:11px;letter-spacing:-0.6px;">t b f</div><div style="left:286px;top:719px;width:35px;height:19px;border:1px solid #000;box-sizing:border-box"></div><div style="left:286px;top:719px;width:7px;height:3px;background:#000"></div><div style="left:314px;top:719px;width:7px;height:3px;background:#000"></div><div style="left:286px;top:735px;width:7px;height:3px;background:#000"></div><div style="left:288px;top:721px;height:16px;line-height:16px;white-space:pre;color:#000;font-family:'Liberation Mono',monospace;font-weight:bold;font-size:11px;letter-spacing:-0.6px;">/ 100</div><div style="left:323px;top:719px;width:35px;height:19px;border:1px solid #000;box-sizing:border-box"></div><div style="left:323px;top:719px;width:7px;height:3px;background:#000"></div><div style="left:351px;top:719px;width:7px;height:3px;background:#000"></div><div style="left:323px;top:735px;width:7px;height:3px;background:#000"></div><div style="left:325px;top:721px;height:16px;line-height:16px;white-space:pre;color:#000;font-family:'Liberation Mono',monospace;font-weight:bold;font-size:11px;letter-spacing:-0.6px;">/ 100</div><div style="left:364px;top:718px;width:35px;height:19px;border:1px solid #000;box-sizing:border-box"></div><div style="left:364px;top:718px;width:7px;height:3px;background:#000"></div><div style="left:392px;top:718px;width:7px;height:3px;background:#000"></div><div style="left:364px;top:734px;width:7px;height:3px;background:#000"></div><div style="left:366px;top:720px;height:16px;line-height:16px;white-space:pre;color:#000;font-family:'Liberation Mono',monospace;font-weight:bold;font-size:11px;letter-spacing:-0.6px;">/ 100</div><div style="left:323px;top:742px;width:35px;height:19px;border:1px solid #000;box-sizing:border-box"></div><div style="left:323px;top:742px;width:7px;height:3px;background:#000"></div><div style="left:323px;top:758px;width:7px;height:3px;background:#000"></div><div style="left:351px;top:758px;width:7px;height:3px;background:#000"></div><div style="left:325px;top:744px;height:16px;line-height:16px;white-space:pre;color:#000;font-family:'Liberation Mono',monospace;font-weight:bold;font-size:11px;letter-spacing:-0.6px;">t b f</div><div style="left:286px;top:762px;width:65px;height:19px;border:1px solid #000;box-sizing:border-box"></div><div style="left:286px;top:762px;width:7px;height:3px;background:#000"></div><div style="left:315px;top:762px;width:7px;height:3px;background:#000"></div><div style="left:344px;top:762px;width:7px;height:3px;background:#000"></div><div style="left:286px;top:778px;width:7px;height:3px;background:#000"></div><div style="left:288px;top:764px;height:16px;line-height:16px;white-space:pre;color:#000;font-family:'Liberation Mono',monospace;font-weight:bold;font-size:11px;letter-spacing:-0.6px;">pack f f 0</div><div style="left:364px;top:761px;width:65px;height:19px;border:1px solid #000;box-sizing:border-box"></div><div style="left:364px;top:761px;width:7px;height:3px;background:#000"></div><div style="left:393px;top:761px;width:7px;height:3px;background:#000"></div><div style="left:422px;top:761px;width:7px;height:3px;background:#000"></div><div style="left:364px;top:777px;width:7px;height:3px;background:#000"></div><div style="left:366px;top:763px;height:16px;line-height:16px;white-space:pre;color:#000;font-family:'Liberation Mono',monospace;font-weight:bold;font-size:11px;letter-spacing:-0.6px;">pack f f 0</div><div style="left:549px;top:602px;width:77px;height:19px;border:1px solid #000;box-sizing:border-box"></div><div style="left:549px;top:602px;width:7px;height:3px;background:#000"></div><div style="left:551px;top:604px;height:16px;line-height:16px;white-space:pre;color:#000;font-family:'Liberation Mono',monospace;font-weight:bold;font-size:11px;letter-spacing:-0.6px;">s $0-v01_17w</div><div style="left:549px;top:623px;width:77px;height:19px;border:1px solid #000;box-sizing:border-box"></div><div style="left:549px;top:639px;width:7px;height:3px;background:#000"></div><div style="left:551px;top:625px;height:16px;line-height:16px;white-space:pre;color:#000;font-family:'Liberation Mono',monospace;font-weight:bold;font-size:11px;letter-spacing:-0.6px;">r $0-v01_17r</div><div style="left:470px;top:645px;width:77px;height:19px;border:1px solid #000;box-sizing:border-box"></div><div style="left:470px;top:645px;width:7px;height:3px;background:#000"></div><div style="left:472px;top:647px;height:16px;line-height:16px;white-space:pre;color:#000;font-family:'Liberation Mono',monospace;font-weight:bold;font-size:11px;letter-spacing:-0.6px;">s $0-v01_16w</div><div style="left:549px;top:645px;width:77px;height:19px;border:1px solid #000;box-sizing:border-box"></div><div style="left:549px;top:645px;width:7px;height:3px;background:#000"></div><div style="left:551px;top:647px;height:16px;line-height:16px;white-space:pre;color:#000;font-family:'Liberation Mono',monospace;font-weight:bold;font-size:11px;letter-spacing:-0.6px;">s $0-v01_18w</div><div style="left:470px;top:666px;width:77px;height:19px;border:1px solid #000;box-sizing:border-box"></div><div style="left:470px;top:682px;width:7px;height:3px;background:#000"></div><div style="left:472px;top:668px;height:16px;line-height:16px;white-space:pre;color:#000;font-family:'Liberation Mono',monospace;font-weight:bold;font-size:11px;letter-spacing:-0.6px;">r $0-v01_16r</div><div style="left:549px;top:666px;width:77px;height:19px;border:1px solid #000;box-sizing:border-box"></div><div style="left:549px;top:682px;width:7px;height:3px;background:#000"></div><div style="left:551px;top:668px;height:16px;line-height:16px;white-space:pre;color:#000;font-family:'Liberation Mono',monospace;font-weight:bold;font-size:11px;letter-spacing:-0.6px;">r $0-v01_18r</div><svg style="left:0;top:0" width="1437" height="870" shape-rendering="crispEdges"><line x1="51.5" y1="318.5" x2="422.5" y2="383.5" stroke="#000" stroke-width="1"/><line x1="422.5" y1="412.5" x2="238.5" y2="343.5" stroke="#000" stroke-width="1"/><line x1="51.5" y1="339.5" x2="127.5" y2="441.5" stroke="#000" stroke-width="1"/><line x1="238.5" y1="360.5" x2="222.5" y2="568.5" stroke="#000" stroke-width="1"/><line x1="127.5" y1="396.5" x2="437.5" y2="291.5" stroke="#000" stroke-width="1"/><line x1="127.5" y1="411.5" x2="437.5" y2="312.5" stroke="#000" stroke-width="1"/><line x1="127.5" y1="426.5" x2="437.5" y2="332.5" stroke="#000" stroke-width="1"/><line x1="437.5" y1="308.5" x2="516.5" y2="295.5" stroke="#000" stroke-width="1"/><line x1="437.5" y1="329.5" x2="604.5" y2="295.5" stroke="#000" stroke-width="1"/><line x1="437.5" y1="349.5" x2="614.5" y2="295.5" stroke="#000" stroke-width="1"/><line x1="518.5" y1="312.5" x2="572.5" y2="396.5" stroke="#000" stroke-width="1"/><line x1="572.5" y1="312.5" x2="572.5" y2="340.5" stroke="#000" stroke-width="1"/><line x1="615.5" y1="312.5" x2="615.5" y2="316.5" stroke="#000" stroke-width="1"/><line x1="615.5" y1="334.5" x2="587.5" y2="340.5" stroke="#000" stroke-width="1"/><line x1="646.5" y1="334.5" x2="572.5" y2="340.5" stroke="#000" stroke-width="1"/><line x1="572.5" y1="358.5" x2="572.5" y2="365.5" stroke="#000" stroke-width="1"/><line x1="572.5" y1="383.5" x2="572.5" y2="396.5" stroke="#000" stroke-width="1"/><line x1="604.5" y1="383.5" x2="587.5" y2="396.5" stroke="#000" stroke-width="1"/><line x1="572.5" y1="414.5" x2="572.5" y2="427.5" stroke="#000" stroke-width="1"/><line x1="572.5" y1="445.5" x2="527.5" y2="456.5" stroke="#000" stroke-width="1"/><line x1="527.5" y1="474.5" x2="527.5" y2="487.5" stroke="#000" stroke-width="1"/><line x1="559.5" y1="474.5" x2="528.5" y2="487.5" stroke="#000" stroke-width="1"/><line x1="527.5" y1="505.5" x2="527.5" y2="512.5" stroke="#000" stroke-width="1"/><line x1="127.5" y1="396.5" x2="262.5" y2="496.5" stroke="#000" stroke-width="1"/><line x1="127.5" y1="411.5" x2="301.5" y2="497.5" stroke="#000" stroke-width="1"/><line x1="127.5" y1="426.5" x2="340.5" y2="497.5" stroke="#000" stroke-width="1"/><line x1="127.5" y1="441.5" x2="382.5" y2="497.5" stroke="#000" stroke-width="1"/><line x1="127.5" y1="456.5" x2="52.5" y2="512.5" stroke="#000" stroke-width="1"/><line x1="127.5" y1="456.5" x2="127.5" y2="485.5" stroke="#000" stroke-width="1"/><line x1="154.5" y1="456.5" x2="173.5" y2="512.5" stroke="#000" stroke-width="1"/><line x1="127.5" y1="503.5" x2="232.5" y2="442.5" stroke="#000" stroke-width="1"/><line x1="52.5" y1="530.5" x2="115.5" y2="512.5" stroke="#000" stroke-width="1"/><line x1="103.5" y1="512.5" x2="115.5" y2="530.5" stroke="#000" stroke-width="1"/><line x1="52.5" y1="530.5" x2="52.5" y2="536.5" stroke="#000" stroke-width="1"/><line x1="52.5" y1="554.5" x2="249.5" y2="596.5" stroke="#000" stroke-width="1"/><line x1="52.5" y1="618.5" x2="52.5" y2="651.5" stroke="#000" stroke-width="1"/><line x1="52.5" y1="618.5" x2="131.5" y2="665.5" stroke="#000" stroke-width="1"/><line x1="52.5" y1="669.5" x2="52.5" y2="727.5" stroke="#000" stroke-width="1"/><line x1="61.5" y1="715.5" x2="52.5" y2="727.5" stroke="#000" stroke-width="1"/><line x1="52.5" y1="745.5" x2="238.5" y2="822.5" stroke="#000" stroke-width="1"/><line x1="131.5" y1="683.5" x2="238.5" y2="822.5" stroke="#000" stroke-width="1"/><line x1="221.5" y1="614.5" x2="238.5" y2="822.5" stroke="#000" stroke-width="1"/><line x1="221.5" y1="585.5" x2="221.5" y2="596.5" stroke="#000" stroke-width="1"/><line x1="262.5" y1="567.5" x2="249.5" y2="567.5" stroke="#000" stroke-width="1"/><line x1="262.5" y1="513.5" x2="262.5" y2="549.5" stroke="#000" stroke-width="1"/><line x1="301.5" y1="514.5" x2="301.5" y2="519.5" stroke="#000" stroke-width="1"/><line x1="340.5" y1="514.5" x2="340.5" y2="519.5" stroke="#000" stroke-width="1"/><line x1="382.5" y1="514.5" x2="382.5" y2="519.5" stroke="#000" stroke-width="1"/><line x1="301.5" y1="537.5" x2="262.5" y2="549.5" stroke="#000" stroke-width="1"/><line x1="333.5" y1="537.5" x2="285.5" y2="549.5" stroke="#000" stroke-width="1"/><line x1="340.5" y1="537.5" x2="262.5" y2="549.5" stroke="#000" stroke-width="1"/><line x1="372.5" y1="537.5" x2="310.5" y2="549.5" stroke="#000" stroke-width="1"/><line x1="382.5" y1="537.5" x2="262.5" y2="549.5" stroke="#000" stroke-width="1"/><line x1="414.5" y1="537.5" x2="331.5" y2="549.5" stroke="#000" stroke-width="1"/><line x1="298.5" y1="396.5" x2="254.5" y2="648.5" stroke="#000" stroke-width="1"/><line x1="298.5" y1="426.5" x2="295.5" y2="648.5" stroke="#000" stroke-width="1"/><line x1="299.5" y1="411.5" x2="292.5" y2="673.5" stroke="#000" stroke-width="1"/><line x1="300.5" y1="441.5" x2="287.5" y2="719.5" stroke="#000" stroke-width="1"/><line x1="366.5" y1="396.5" x2="336.5" y2="648.5" stroke="#000" stroke-width="1"/><line x1="366.5" y1="411.5" x2="365.5" y2="718.5" stroke="#000" stroke-width="1"/><line x1="367.5" y1="426.5" x2="376.5" y2="642.5" stroke="#000" stroke-width="1"/><line x1="366.5" y1="441.5" x2="410.5" y2="704.5" stroke="#000" stroke-width="1"/><line x1="299.5" y1="396.5" x2="324.5" y2="719.5" stroke="#000" stroke-width="1"/><line x1="254.5" y1="666.5" x2="254.5" y2="697.5" stroke="#000" stroke-width="1"/><line x1="295.5" y1="666.5" x2="291.5" y2="672.5" stroke="#000" stroke-width="1"/><line x1="291.5" y1="690.5" x2="286.5" y2="697.5" stroke="#000" stroke-width="1"/><line x1="323.5" y1="690.5" x2="254.5" y2="697.5" stroke="#000" stroke-width="1"/><line x1="254.5" y1="715.5" x2="262.5" y2="822.5" stroke="#000" stroke-width="1"/><line x1="335.5" y1="666.5" x2="335.5" y2="691.5" stroke="#000" stroke-width="1"/><line x1="376.5" y1="660.5" x2="376.5" y2="665.5" stroke="#000" stroke-width="1"/><line x1="376.5" y1="683.5" x2="367.5" y2="691.5" stroke="#000" stroke-width="1"/><line x1="408.5" y1="683.5" x2="335.5" y2="691.5" stroke="#000" stroke-width="1"/><line x1="335.5" y1="709.5" x2="306.5" y2="822.5" stroke="#000" stroke-width="1"/><line x1="287.5" y1="737.5" x2="287.5" y2="762.5" stroke="#000" stroke-width="1"/><line x1="324.5" y1="737.5" x2="324.5" y2="742.5" stroke="#000" stroke-width="1"/><line x1="324.5" y1="760.5" x2="318.5" y2="762.5" stroke="#000" stroke-width="1"/><line x1="356.5" y1="760.5" x2="287.5" y2="762.5" stroke="#000" stroke-width="1"/><line x1="365.5" y1="736.5" x2="365.5" y2="761.5" stroke="#000" stroke-width="1"/><line x1="410.5" y1="722.5" x2="410.5" y2="727.5" stroke="#000" stroke-width="1"/><line x1="410.5" y1="745.5" x2="366.5" y2="761.5" stroke="#000" stroke-width="1"/><line x1="442.5" y1="745.5" x2="396.5" y2="761.5" stroke="#000" stroke-width="1"/><line x1="287.5" y1="780.5" x2="284.5" y2="822.5" stroke="#000" stroke-width="1"/><line x1="365.5" y1="779.5" x2="329.5" y2="822.5" stroke="#000" stroke-width="1"/></svg><div style="left:729px;top:114px;width:201px;height:86px;background:#fff;border:1px solid #000;box-sizing:border-box"></div><svg style="left:736px;top:120px" width="16" height="16"><rect x="0.5" y="0.5" width="15" height="15" fill="#454545" stroke="#000"/><circle cx="8.0" cy="8.0" r="6.9" fill="#6c6c6c" stroke="#2a2a2a" stroke-width="1"/></svg><div style="left:736px;top:120px;width:16px;height:16px;line-height:17px;text-align:center;white-space:pre;color:#fff;font-family:'Liberation Mono',monospace;font-weight:bold;font-size:11px;letter-spacing:-0.6px;letter-spacing:-1.4px">1</div><svg style="left:754px;top:120px" width="16" height="16"><rect x="0.5" y="0.5" width="15" height="15" fill="#454545" stroke="#000"/><circle cx="8.0" cy="8.0" r="6.9" fill="#6c6c6c" stroke="#2a2a2a" stroke-width="1"/></svg><div style="left:754px;top:120px;width:16px;height:16px;line-height:17px;text-align:center;white-space:pre;color:#fff;font-family:'Liberation Mono',monospace;font-weight:bold;font-size:11px;letter-spacing:-0.6px;letter-spacing:-1.4px">2</div><svg style="left:772px;top:120px" width="16" height="16"><rect x="0.5" y="0.5" width="15" height="15" fill="#454545" stroke="#000"/><circle cx="8.0" cy="8.0" r="6.9" fill="#6c6c6c" stroke="#2a2a2a" stroke-width="1"/></svg><div style="left:772px;top:120px;width:16px;height:16px;line-height:17px;text-align:center;white-space:pre;color:#fff;font-family:'Liberation Mono',monospace;font-weight:bold;font-size:11px;letter-spacing:-0.6px;letter-spacing:-1.4px">3</div><svg style="left:790px;top:120px" width="16" height="16"><rect x="0.5" y="0.5" width="15" height="15" fill="#454545" stroke="#000"/><circle cx="8.0" cy="8.0" r="6.9" fill="#6c6c6c" stroke="#2a2a2a" stroke-width="1"/></svg><div style="left:790px;top:120px;width:16px;height:16px;line-height:17px;text-align:center;white-space:pre;color:#fff;font-family:'Liberation Mono',monospace;font-weight:bold;font-size:11px;letter-spacing:-0.6px;letter-spacing:-1.4px">4</div><svg style="left:808px;top:120px" width="16" height="16"><rect x="0.5" y="0.5" width="15" height="15" fill="#454545" stroke="#000"/><circle cx="8.0" cy="8.0" r="6.9" fill="#6c6c6c" stroke="#2a2a2a" stroke-width="1"/></svg><div style="left:808px;top:120px;width:16px;height:16px;line-height:17px;text-align:center;white-space:pre;color:#fff;font-family:'Liberation Mono',monospace;font-weight:bold;font-size:11px;letter-spacing:-0.6px;letter-spacing:-1.4px">5</div><svg style="left:736px;top:139px" width="16" height="16"><rect x="0.5" y="0.5" width="15" height="15" fill="#454545" stroke="#000"/><circle cx="8.0" cy="8.0" r="6.9" fill="#6c6c6c" stroke="#2a2a2a" stroke-width="1"/></svg><div style="left:736px;top:139px;width:16px;height:16px;line-height:17px;text-align:center;white-space:pre;color:#fff;font-family:'Liberation Mono',monospace;font-weight:bold;font-size:11px;letter-spacing:-0.6px;letter-spacing:-1.4px">6</div><svg style="left:754px;top:139px" width="16" height="16"><rect x="0.5" y="0.5" width="15" height="15" fill="#454545" stroke="#000"/><circle cx="8.0" cy="8.0" r="6.9" fill="#6c6c6c" stroke="#2a2a2a" stroke-width="1"/></svg><div style="left:754px;top:139px;width:16px;height:16px;line-height:17px;text-align:center;white-space:pre;color:#fff;font-family:'Liberation Mono',monospace;font-weight:bold;font-size:11px;letter-spacing:-0.6px;letter-spacing:-1.4px">7</div><svg style="left:772px;top:139px" width="16" height="16"><rect x="0.5" y="0.5" width="15" height="15" fill="#454545" stroke="#000"/><circle cx="8.0" cy="8.0" r="6.9" fill="#6c6c6c" stroke="#2a2a2a" stroke-width="1"/></svg><div style="left:772px;top:139px;width:16px;height:16px;line-height:17px;text-align:center;white-space:pre;color:#fff;font-family:'Liberation Mono',monospace;font-weight:bold;font-size:11px;letter-spacing:-0.6px;letter-spacing:-1.4px">8</div><svg style="left:790px;top:139px" width="16" height="16"><rect x="0.5" y="0.5" width="15" height="15" fill="#454545" stroke="#000"/><circle cx="8.0" cy="8.0" r="6.9" fill="#6c6c6c" stroke="#2a2a2a" stroke-width="1"/></svg><div style="left:790px;top:139px;width:16px;height:16px;line-height:17px;text-align:center;white-space:pre;color:#fff;font-family:'Liberation Mono',monospace;font-weight:bold;font-size:11px;letter-spacing:-0.6px;letter-spacing:-1.4px">9</div><svg style="left:808px;top:139px" width="16" height="16"><rect x="0.5" y="0.5" width="15" height="15" fill="#454545" stroke="#000"/><circle cx="8.0" cy="8.0" r="6.9" fill="#6c6c6c" stroke="#2a2a2a" stroke-width="1"/></svg><div style="left:808px;top:139px;width:16px;height:16px;line-height:17px;text-align:center;white-space:pre;color:#fff;font-family:'Liberation Mono',monospace;font-weight:bold;font-size:11px;letter-spacing:-0.6px;letter-spacing:-1.4px">10</div><svg style="left:736px;top:158px" width="16" height="16"><rect x="0.5" y="0.5" width="15" height="15" fill="#454545" stroke="#000"/><circle cx="8.0" cy="8.0" r="6.9" fill="#6c6c6c" stroke="#2a2a2a" stroke-width="1"/></svg><div style="left:736px;top:158px;width:16px;height:16px;line-height:17px;text-align:center;white-space:pre;color:#fff;font-family:'Liberation Mono',monospace;font-weight:bold;font-size:11px;letter-spacing:-0.6px;letter-spacing:-1.4px">11</div><svg style="left:754px;top:158px" width="16" height="16"><rect x="0.5" y="0.5" width="15" height="15" fill="#454545" stroke="#000"/><circle cx="8.0" cy="8.0" r="6.9" fill="#6c6c6c" stroke="#2a2a2a" stroke-width="1"/></svg><div style="left:754px;top:158px;width:16px;height:16px;line-height:17px;text-align:center;white-space:pre;color:#fff;font-family:'Liberation Mono',monospace;font-weight:bold;font-size:11px;letter-spacing:-0.6px;letter-spacing:-1.4px">12</div><svg style="left:772px;top:158px" width="16" height="16"><rect x="0.5" y="0.5" width="15" height="15" fill="#454545" stroke="#000"/><circle cx="8.0" cy="8.0" r="6.9" fill="#6c6c6c" stroke="#2a2a2a" stroke-width="1"/></svg><div style="left:772px;top:158px;width:16px;height:16px;line-height:17px;text-align:center;white-space:pre;color:#fff;font-family:'Liberation Mono',monospace;font-weight:bold;font-size:11px;letter-spacing:-0.6px;letter-spacing:-1.4px">13</div><svg style="left:790px;top:158px" width="16" height="16"><rect x="0.5" y="0.5" width="15" height="15" fill="#454545" stroke="#000"/><circle cx="8.0" cy="8.0" r="6.9" fill="#6c6c6c" stroke="#2a2a2a" stroke-width="1"/></svg><div style="left:790px;top:158px;width:16px;height:16px;line-height:17px;text-align:center;white-space:pre;color:#fff;font-family:'Liberation Mono',monospace;font-weight:bold;font-size:11px;letter-spacing:-0.6px;letter-spacing:-1.4px">14</div><svg style="left:808px;top:158px" width="16" height="16"><rect x="0.5" y="0.5" width="15" height="15" fill="#454545" stroke="#000"/><circle cx="8.0" cy="8.0" r="6.9" fill="#6c6c6c" stroke="#2a2a2a" stroke-width="1"/></svg><div style="left:808px;top:158px;width:16px;height:16px;line-height:17px;text-align:center;white-space:pre;color:#fff;font-family:'Liberation Mono',monospace;font-weight:bold;font-size:11px;letter-spacing:-0.6px;letter-spacing:-1.4px">15</div><svg style="left:736px;top:177px" width="16" height="16"><rect x="0.5" y="0.5" width="15" height="15" fill="#454545" stroke="#000"/><circle cx="8.0" cy="8.0" r="6.9" fill="#6c6c6c" stroke="#2a2a2a" stroke-width="1"/></svg><div style="left:736px;top:177px;width:16px;height:16px;line-height:17px;text-align:center;white-space:pre;color:#fff;font-family:'Liberation Mono',monospace;font-weight:bold;font-size:11px;letter-spacing:-0.6px;letter-spacing:-1.4px">16</div><svg style="left:754px;top:177px" width="16" height="16"><rect x="0.5" y="0.5" width="15" height="15" fill="#454545" stroke="#000"/><circle cx="8.0" cy="8.0" r="6.9" fill="#6c6c6c" stroke="#2a2a2a" stroke-width="1"/></svg><div style="left:754px;top:177px;width:16px;height:16px;line-height:17px;text-align:center;white-space:pre;color:#fff;font-family:'Liberation Mono',monospace;font-weight:bold;font-size:11px;letter-spacing:-0.6px;letter-spacing:-1.4px">17</div><svg style="left:772px;top:177px" width="16" height="16"><rect x="0.5" y="0.5" width="15" height="15" fill="#454545" stroke="#000"/><circle cx="8.0" cy="8.0" r="6.9" fill="#6c6c6c" stroke="#2a2a2a" stroke-width="1"/></svg><div style="left:772px;top:177px;width:16px;height:16px;line-height:17px;text-align:center;white-space:pre;color:#fff;font-family:'Liberation Mono',monospace;font-weight:bold;font-size:11px;letter-spacing:-0.6px;letter-spacing:-1.4px">18</div><svg style="left:790px;top:177px" width="16" height="16"><rect x="0.5" y="0.5" width="15" height="15" fill="#454545" stroke="#000"/><circle cx="8.0" cy="8.0" r="6.9" fill="#6c6c6c" stroke="#2a2a2a" stroke-width="1"/></svg><div style="left:790px;top:177px;width:16px;height:16px;line-height:17px;text-align:center;white-space:pre;color:#fff;font-family:'Liberation Mono',monospace;font-weight:bold;font-size:11px;letter-spacing:-0.6px;letter-spacing:-1.4px">19</div><svg style="left:808px;top:177px" width="16" height="16"><rect x="0.5" y="0.5" width="15" height="15" fill="#454545" stroke="#000"/><circle cx="8.0" cy="8.0" r="6.9" fill="#6c6c6c" stroke="#2a2a2a" stroke-width="1"/></svg><div style="left:808px;top:177px;width:16px;height:16px;line-height:17px;text-align:center;white-space:pre;color:#fff;font-family:'Liberation Mono',monospace;font-weight:bold;font-size:11px;letter-spacing:-0.6px;letter-spacing:-1.4px">20</div><div style="left:835px;top:142px;height:15px;line-height:15px;white-space:pre;color:#000;font-family:'Liberation Mono',monospace;font-weight:bold;font-size:11px;letter-spacing:-0.6px;">sn</div><div style="left:835px;top:160px;height:15px;line-height:15px;white-space:pre;color:#000;font-family:'Liberation Mono',monospace;font-weight:bold;font-size:11px;letter-spacing:-0.6px;">ti</div><div style="left:835px;top:179px;height:15px;line-height:15px;white-space:pre;color:#000;font-family:'Liberation Mono',monospace;font-weight:bold;font-size:11px;letter-spacing:-0.6px;">sp</div><svg style="left:850px;top:140px" width="29" height="16"><polygon points="0.5,0.5 25.5,0.5 28.5,3.5 28.5,15.5 0.5,15.5" fill="#f8c8c8" stroke="#000" stroke-width="1"/><polyline points="0.5,0.5 8.0,8.0 0.5,15.5" fill="none" stroke="#000" stroke-width="1"/></svg><div style="left:859px;top:141px;height:15px;line-height:16px;white-space:pre;color:#000;font-family:'Liberation Mono',monospace;font-weight:bold;font-size:11px;letter-spacing:-0.6px;">13</div><svg style="left:878px;top:140px" width="16" height="16"><rect x="0.5" y="0.5" width="15" height="15" fill="#f00" stroke="#000"/><circle cx="8.0" cy="8.0" r="6.9" fill="#f00" stroke="#000" stroke-width="1"/></svg><svg style="left:893px;top:140px" width="29" height="16"><polygon points="0.5,0.5 25.5,0.5 28.5,3.5 28.5,15.5 0.5,15.5" fill="#f00" stroke="#000" stroke-width="1"/><polyline points="0.5,0.5 8.0,8.0 0.5,15.5" fill="none" stroke="#fff" stroke-width="1"/></svg><div style="left:902px;top:141px;height:15px;line-height:16px;white-space:pre;color:#fff;font-family:'Liberation Mono',monospace;font-weight:bold;font-size:11px;letter-spacing:-0.6px;">1</div><svg style="left:850px;top:158px" width="55" height="16"><polygon points="0.5,0.5 51.5,0.5 54.5,3.5 54.5,15.5 0.5,15.5" fill="#fcfcfc" stroke="#000" stroke-width="1"/><polyline points="0.5,0.5 8.0,8.0 0.5,15.5" fill="none" stroke="#000" stroke-width="1"/></svg><div style="left:859px;top:159px;height:15px;line-height:16px;white-space:pre;color:#000;font-family:'Liberation Mono',monospace;font-weight:bold;font-size:11px;letter-spacing:-0.6px;">5000</div><svg style="left:850px;top:177px" width="55" height="16"><polygon points="0.5,0.5 51.5,0.5 54.5,3.5 54.5,15.5 0.5,15.5" fill="#fcfcfc" stroke="#000" stroke-width="1"/><polyline points="0.5,0.5 8.0,8.0 0.5,15.5" fill="none" stroke="#000" stroke-width="1"/></svg><div style="left:859px;top:178px;height:15px;line-height:16px;white-space:pre;color:#000;font-family:'Liberation Mono',monospace;font-weight:bold;font-size:11px;letter-spacing:-0.6px;">5000</div><div style="left:729px;top:217px;width:251px;height:61px;background:#fff;border:1px solid #000;box-sizing:border-box"></div><div style="left:729px;top:217px;width:134px;height:16px;background:#f00;border:1px solid #000;box-sizing:border-box"></div><div style="left:729px;top:232px;width:134px;height:16px;background:#0f0;border:1px solid #000;box-sizing:border-box"></div><div style="left:729px;top:247px;width:134px;height:16px;background:#00f;border:1px solid #000;box-sizing:border-box"></div><div style="left:729px;top:262px;width:134px;height:16px;background:#fcfcfc;border:1px solid #000;box-sizing:border-box"></div><div style="position:absolute;left:731px;top:219px;width:3px;height:12px;background:#fff;"></div><div style="position:absolute;left:731px;top:234px;width:3px;height:12px;background:#fff;"></div><div style="position:absolute;left:731px;top:249px;width:3px;height:12px;background:#fff;"></div><div style="position:absolute;left:731px;top:263px;width:3px;height:13px;background:#000;"></div><div style="left:864px;top:217px;width:17px;height:61px;background:#000;border:1px solid #000;box-sizing:border-box"></div><div style="position:absolute;left:865px;top:263px;width:15px;height:14px;background:#e0e0e0;"></div><svg style="left:864px;top:262px" width="17" height="16"><circle cx="8.5" cy="8" r="7" fill="#d8d8d8" stroke="#000"/></svg><div style="left:885px;top:220px;height:15px;line-height:15px;white-space:pre;color:#000;font-family:'Liberation Mono',monospace;font-weight:bold;font-size:11px;letter-spacing:-0.6px;">a</div><div style="left:885px;top:235px;height:15px;line-height:15px;white-space:pre;color:#000;font-family:'Liberation Mono',monospace;font-weight:bold;font-size:11px;letter-spacing:-0.6px;">h</div><div style="left:885px;top:250px;height:15px;line-height:15px;white-space:pre;color:#000;font-family:'Liberation Mono',monospace;font-weight:bold;font-size:11px;letter-spacing:-0.6px;">r</div><svg style="left:895px;top:218px" width="55" height="15"><polygon points="0.5,0.5 51.5,0.5 54.5,3.5 54.5,14.5 0.5,14.5" fill="#d8d8d8" stroke="#000" stroke-width="1"/><polyline points="0.5,0.5 7.5,7.5 0.5,14.5" fill="none" stroke="#000" stroke-width="1"/></svg><div style="left:904px;top:219px;height:14px;line-height:15px;white-space:pre;color:#000;font-family:'Liberation Mono',monospace;font-weight:bold;font-size:11px;letter-spacing:-0.6px;">3</div><svg style="left:895px;top:233px" width="55" height="15"><polygon points="0.5,0.5 51.5,0.5 54.5,3.5 54.5,14.5 0.5,14.5" fill="#d8d8d8" stroke="#000" stroke-width="1"/><polyline points="0.5,0.5 7.5,7.5 0.5,14.5" fill="none" stroke="#000" stroke-width="1"/></svg><div style="left:904px;top:234px;height:14px;line-height:15px;white-space:pre;color:#000;font-family:'Liberation Mono',monospace;font-weight:bold;font-size:11px;letter-spacing:-0.6px;">87</div><svg style="left:895px;top:248px" width="55" height="15"><polygon points="0.5,0.5 51.5,0.5 54.5,3.5 54.5,14.5 0.5,14.5" fill="#d8d8d8" stroke="#000" stroke-width="1"/><polyline points="0.5,0.5 7.5,7.5 0.5,14.5" fill="none" stroke="#000" stroke-width="1"/></svg><div style="left:904px;top:249px;height:14px;line-height:15px;white-space:pre;color:#000;font-family:'Liberation Mono',monospace;font-weight:bold;font-size:11px;letter-spacing:-0.6px;">342</div><div style="left:949px;top:217px;width:31px;height:31px;background:#f8c8c8;border:1px solid #000;box-sizing:border-box"></div><svg style="left:949px;top:217px" width="31" height="31"><path d="M3,3 L28,28 M28,3 L3,28" stroke="#f00" stroke-width="2"/></svg><div style="left:952px;top:227px;height:15px;line-height:15px;white-space:pre;color:#000;font-family:'Liberation Mono',monospace;font-weight:bold;font-size:11px;letter-spacing:-0.6px;">gem</div><svg style="left:949px;top:247px" width="16" height="16"><rect x="0.5" y="0.5" width="15" height="15" fill="#454545" stroke="#000"/><circle cx="8.0" cy="8.0" r="6.9" fill="#8c8c8c" stroke="#2a2a2a" stroke-width="1"/></svg><div style="left:949px;top:247px;width:16px;height:16px;line-height:17px;text-align:center;white-space:pre;color:#fff;font-family:'Liberation Mono',monospace;font-weight:bold;font-size:11px;letter-spacing:-0.6px;letter-spacing:-1.4px">0</div><svg style="left:964px;top:247px" width="16" height="16"><rect x="0.5" y="0.5" width="15" height="15" fill="#454545" stroke="#000"/><circle cx="8.0" cy="8.0" r="6.9" fill="#8c8c8c" stroke="#2a2a2a" stroke-width="1"/></svg><div style="left:964px;top:247px;width:16px;height:16px;line-height:17px;text-align:center;white-space:pre;color:#fff;font-family:'Liberation Mono',monospace;font-weight:bold;font-size:11px;letter-spacing:-0.6px;letter-spacing:-1.4px">1</div><div style="left:895px;top:262px;width:16px;height:16px;background:#c4f6f6;border:1px solid #000;box-sizing:border-box"></div><div style="left:910px;top:262px;width:40px;height:16px;background:#fcfcfc;border:1px solid #000;box-sizing:border-box"></div><div style="left:914px;top:263px;height:15px;line-height:15px;white-space:pre;color:#000;font-family:'Liberation Mono',monospace;font-weight:bold;font-size:11px;letter-spacing:-0.6px;">osc_b</div><div style="left:949px;top:262px;width:16px;height:16px;background:#c4f6f6;border:1px solid #000;box-sizing:border-box"></div><div style="left:964px;top:262px;width:16px;height:16px;background:#fcfcfc;border:1px solid #000;box-sizing:border-box"></div><div style="left:966px;top:263px;height:15px;line-height:15px;white-space:pre;color:#000;font-family:'Liberation Mono',monospace;font-weight:bold;font-size:11px;letter-spacing:-0.6px;">en</div><div style="left:728px;top:283px;width:251px;height:46px;background:#fff;border:1px solid #000;box-sizing:border-box"></div><svg style="left:729px;top:284px" width="15" height="15"><rect x="0.5" y="0.5" width="14" height="14" fill="#f00" stroke="#000"/><circle cx="7.5" cy="7.5" r="6.4" fill="#f00" stroke="#000" stroke-width="1"/></svg><div style="left:729px;top:284px;width:15px;height:15px;line-height:16px;text-align:center;white-space:pre;color:#fff;font-family:'Liberation Mono',monospace;font-weight:bold;font-size:11px;letter-spacing:-0.6px;letter-spacing:-1.4px">1</div><svg style="left:744px;top:284px" width="15" height="15"><rect x="0.5" y="0.5" width="14" height="14" fill="#f00" stroke="#000"/><circle cx="7.5" cy="7.5" r="6.4" fill="#f00" stroke="#000" stroke-width="1"/></svg><div style="left:744px;top:284px;width:15px;height:15px;line-height:16px;text-align:center;white-space:pre;color:#fff;font-family:'Liberation Mono',monospace;font-weight:bold;font-size:11px;letter-spacing:-0.6px;letter-spacing:-1.4px">2</div><svg style="left:759px;top:284px" width="15" height="15"><rect x="0.5" y="0.5" width="14" height="14" fill="#f00" stroke="#000"/><circle cx="7.5" cy="7.5" r="6.4" fill="#f00" stroke="#000" stroke-width="1"/></svg><div style="left:759px;top:284px;width:15px;height:15px;line-height:16px;text-align:center;white-space:pre;color:#fff;font-family:'Liberation Mono',monospace;font-weight:bold;font-size:11px;letter-spacing:-0.6px;letter-spacing:-1.4px">3</div><svg style="left:774px;top:284px" width="15" height="15"><rect x="0.5" y="0.5" width="14" height="14" fill="#f00" stroke="#000"/><circle cx="7.5" cy="7.5" r="6.4" fill="#f00" stroke="#000" stroke-width="1"/></svg><div style="left:774px;top:284px;width:15px;height:15px;line-height:16px;text-align:center;white-space:pre;color:#fff;font-family:'Liberation Mono',monospace;font-weight:bold;font-size:11px;letter-spacing:-0.6px;letter-spacing:-1.4px">4</div><div style="left:729px;top:298px;width:16px;height:16px;background:#fcfcfc;border:1px solid #000;box-sizing:border-box"></div><div style="left:744px;top:298px;width:16px;height:16px;background:#fcfcfc;border:1px solid #000;box-sizing:border-box"></div><div style="left:759px;top:298px;width:16px;height:16px;background:#fcfcfc;border:1px solid #000;box-sizing:border-box"></div><div style="left:774px;top:298px;width:16px;height:16px;background:#fcfcfc;border:1px solid #000;box-sizing:border-box"></div><div style="position:absolute;left:762px;top:302px;width:8px;height:8px;background:#f8c0c0;"></div><div style="left:728px;top:313px;width:16px;height:16px;background:#fcfcfc;border:1px solid #000;box-sizing:border-box"></div><div style="left:729px;top:314px;height:15px;line-height:15px;white-space:pre;color:#000;font-family:'Liberation Mono',monospace;font-weight:bold;font-size:11px;letter-spacing:-0.6px;">rn</div><div style="left:743px;top:313px;width:14px;height:16px;background:#fcfcfc;border:1px solid #000;box-sizing:border-box"></div><div style="left:746px;top:314px;height:15px;line-height:15px;white-space:pre;color:#000;font-family:'Liberation Mono',monospace;font-weight:bold;font-size:11px;letter-spacing:-0.6px;">t</div><svg style="left:756px;top:313px" width="55" height="16"><polygon points="0.5,0.5 51.5,0.5 54.5,3.5 54.5,15.5 0.5,15.5" fill="#d8d8d8" stroke="#000" stroke-width="1"/><polyline points="0.5,0.5 8.0,8.0 0.5,15.5" fill="none" stroke="#000" stroke-width="1"/></svg><div style="left:765px;top:314px;height:15px;line-height:16px;white-space:pre;color:#000;font-family:'Liberation Mono',monospace;font-weight:bold;font-size:11px;letter-spacing:-0.6px;">1250</div><div style="left:819px;top:285px;height:15px;line-height:15px;white-space:pre;color:#000;font-family:'Liberation Mono',monospace;font-weight:bold;font-size:11px;letter-spacing:-0.6px;">wi</div><div style="left:819px;top:300px;height:15px;line-height:15px;white-space:pre;color:#000;font-family:'Liberation Mono',monospace;font-weight:bold;font-size:11px;letter-spacing:-0.6px;">hg</div><div style="left:819px;top:314px;height:15px;line-height:15px;white-space:pre;color:#000;font-family:'Liberation Mono',monospace;font-weight:bold;font-size:11px;letter-spacing:-0.6px;">fu</div><svg style="left:834px;top:284px" width="55" height="15"><polygon points="0.5,0.5 51.5,0.5 54.5,3.5 54.5,14.5 0.5,14.5" fill="#fcfcfc" stroke="#000" stroke-width="1"/><polyline points="0.5,0.5 7.5,7.5 0.5,14.5" fill="none" stroke="#000" stroke-width="1"/></svg><div style="left:843px;top:285px;height:14px;line-height:15px;white-space:pre;color:#000;font-family:'Liberation Mono',monospace;font-weight:bold;font-size:11px;letter-spacing:-0.6px;">400</div><svg style="left:834px;top:299px" width="55" height="15"><polygon points="0.5,0.5 51.5,0.5 54.5,3.5 54.5,14.5 0.5,14.5" fill="#fcfcfc" stroke="#000" stroke-width="1"/><polyline points="0.5,0.5 7.5,7.5 0.5,14.5" fill="none" stroke="#000" stroke-width="1"/></svg><div style="left:843px;top:300px;height:14px;line-height:15px;white-space:pre;color:#000;font-family:'Liberation Mono',monospace;font-weight:bold;font-size:11px;letter-spacing:-0.6px;">400</div><svg style="left:834px;top:313px" width="28" height="16"><polygon points="0.5,0.5 24.5,0.5 27.5,3.5 27.5,15.5 0.5,15.5" fill="#d8d8d8" stroke="#000" stroke-width="1"/><polyline points="0.5,0.5 8.0,8.0 0.5,15.5" fill="none" stroke="#000" stroke-width="1"/></svg><div style="left:843px;top:314px;height:15px;line-height:16px;white-space:pre;color:#000;font-family:'Liberation Mono',monospace;font-weight:bold;font-size:11px;letter-spacing:-0.6px;">0</div><div style="left:948px;top:284px;width:31px;height:30px;background:#fcfcfc;border:1px solid #000;box-sizing:border-box"></div><svg style="left:948px;top:284px" width="31" height="30"><path d="M3,3 L28,27 M28,3 L3,27" stroke="#f00" stroke-width="2"/></svg><div style="position:absolute;left:727px;top:333px;width:326px;height:75px;background:#bfbfbf;"></div><div style="left:1057px;top:145px;width:89px;height:19px;border:1px solid #000;box-sizing:border-box"></div><div style="left:1059px;top:147px;height:16px;line-height:16px;white-space:pre;color:#000;font-family:'Liberation Mono',monospace;font-weight:bold;font-size:11px;letter-spacing:-0.6px;">pd receive_OSC</div><div style="left:1177px;top:145px;width:227px;height:19px;border:1px solid #000;box-sizing:border-box"></div><div style="left:1179px;top:147px;height:16px;line-height:16px;white-space:pre;color:#000;font-family:'Liberation Mono',monospace;font-weight:bold;font-size:11px;letter-spacing:-0.6px;">declare -lib Gem -lib OSC -lib iemnet</div><div style="left:1059px;top:206px;width:91px;height:16px;background:#fcfcfc;border:1px solid #000;box-sizing:border-box"></div><div style="left:1059px;top:206px;width:16px;height:16px;background:#c8c8f8;border:1px solid #000;box-sizing:border-box"></div><div style="left:1074px;top:206px;width:16px;height:16px;background:#c8c8f8;border:1px solid #000;box-sizing:border-box"></div><div style="left:1089px;top:206px;width:16px;height:16px;background:#c8c8f8;border:1px solid #000;box-sizing:border-box"></div><div style="left:1104px;top:206px;width:16px;height:16px;background:#c8c8f8;border:1px solid #000;box-sizing:border-box"></div><div style="left:1119px;top:206px;width:16px;height:16px;background:#c8c8f8;border:1px solid #000;box-sizing:border-box"></div><div style="left:1134px;top:206px;width:16px;height:16px;background:#fcfcfc;border:1px solid #000;box-sizing:border-box"></div><div style="position:absolute;left:1062px;top:209px;width:10px;height:10px;background:#fcfcfc;"></div><div style="left:1152px;top:207px;height:15px;line-height:15px;white-space:pre;color:#000;font-family:'Liberation Mono',monospace;font-weight:bold;font-size:11px;letter-spacing:-0.6px;">r_draw</div><div style="left:1209px;top:189px;width:16px;height:16px;background:#fcfcfc;border:1px solid #000;box-sizing:border-box"></div><div style="left:1226px;top:190px;height:15px;line-height:15px;white-space:pre;color:#000;font-family:'Liberation Mono',monospace;font-weight:bold;font-size:11px;letter-spacing:-0.6px;">gemhead</div><div style="left:1209px;top:204px;width:16px;height:16px;background:#fcfcfc;border:1px solid #000;box-sizing:border-box"></div><div style="left:1226px;top:205px;height:15px;line-height:15px;white-space:pre;color:#000;font-family:'Liberation Mono',monospace;font-weight:bold;font-size:11px;letter-spacing:-0.6px;">r_alpha</div><div style="left:727px;top:413px;width:327px;height:76px;background:#fff;border:1px solid #000;box-sizing:border-box"></div><div style="left:727px;top:413px;width:135px;height:16px;background:#f00;border:1px solid #000;box-sizing:border-box"></div><div style="left:727px;top:428px;width:135px;height:16px;background:#0f0;border:1px solid #000;box-sizing:border-box"></div><div style="left:727px;top:443px;width:135px;height:16px;background:#00f;border:1px solid #000;box-sizing:border-box"></div><div style="left:727px;top:458px;width:135px;height:16px;background:#fcfcfc;border:1px solid #000;box-sizing:border-box"></div><div style="position:absolute;left:800px;top:414px;width:3px;height:13px;background:#fff;"></div><div style="position:absolute;left:742px;top:429px;width:3px;height:13px;background:#fff;"></div><div style="position:absolute;left:733px;top:444px;width:3px;height:13px;background:#fff;"></div><div style="position:absolute;left:838px;top:459px;width:3px;height:13px;background:#000;"></div><div style="left:740px;top:460px;height:15px;line-height:15px;white-space:pre;color:#000;font-family:'Liberation Mono',monospace;font-weight:bold;font-size:11px;letter-spacing:-0.6px;">alpha</div><div style="left:727px;top:473px;width:16px;height:16px;background:#fcfcfc;border:1px solid #000;box-sizing:border-box"></div><div style="left:728px;top:474px;height:15px;line-height:15px;white-space:pre;color:#000;font-family:'Liberation Mono',monospace;font-weight:bold;font-size:11px;letter-spacing:-0.6px;">rn</div><div style="left:742px;top:473px;width:14px;height:16px;background:#fcfcfc;border:1px solid #000;box-sizing:border-box"></div><div style="left:745px;top:474px;height:15px;line-height:15px;white-space:pre;color:#000;font-family:'Liberation Mono',monospace;font-weight:bold;font-size:11px;letter-spacing:-0.6px;">t</div><svg style="left:755px;top:473px" width="55" height="16"><polygon points="0.5,0.5 51.5,0.5 54.5,3.5 54.5,15.5 0.5,15.5" fill="#d8d8d8" stroke="#000" stroke-width="1"/><polyline points="0.5,0.5 8.0,8.0 0.5,15.5" fill="none" stroke="#000" stroke-width="1"/></svg><div style="left:764px;top:474px;height:15px;line-height:16px;white-space:pre;color:#000;font-family:'Liberation Mono',monospace;font-weight:bold;font-size:11px;letter-spacing:-0.6px;">259</div><div style="left:809px;top:473px;width:24px;height:16px;background:#fcfcfc;border:1px solid #000;box-sizing:border-box"></div><div style="left:816px;top:474px;height:15px;line-height:15px;white-space:pre;color:#000;font-family:'Liberation Mono',monospace;font-weight:bold;font-size:11px;letter-spacing:-0.6px;">fu</div><svg style="left:832px;top:473px" width="30" height="16"><polygon points="0.5,0.5 26.5,0.5 29.5,3.5 29.5,15.5 0.5,15.5" fill="#d8d8d8" stroke="#000" stroke-width="1"/><polyline points="0.5,0.5 8.0,8.0 0.5,15.5" fill="none" stroke="#000" stroke-width="1"/></svg><div style="left:841px;top:474px;height:15px;line-height:16px;white-space:pre;color:#000;font-family:'Liberation Mono',monospace;font-weight:bold;font-size:11px;letter-spacing:-0.6px;">0</div><div style="position:absolute;left:863px;top:413px;width:16px;height:45px;background:#8a1a0a;"></div><div style="left:888px;top:414px;height:15px;line-height:15px;white-space:pre;color:#000;font-family:'Liberation Mono',monospace;font-weight:bold;font-size:11px;letter-spacing:-0.6px;">x</div><svg style="left:899px;top:413px" width="56" height="16"><polygon points="0.5,0.5 52.5,0.5 55.5,3.5 55.5,15.5 0.5,15.5" fill="#fcfcfc" stroke="#000" stroke-width="1"/><polyline points="0.5,0.5 8.0,8.0 0.5,15.5" fill="none" stroke="#000" stroke-width="1"/></svg><div style="left:908px;top:414px;height:15px;line-height:16px;white-space:pre;color:#000;font-family:'Liberation Mono',monospace;font-weight:bold;font-size:11px;letter-spacing:-0.6px;">-231</div><div style="left:888px;top:429px;height:15px;line-height:15px;white-space:pre;color:#000;font-family:'Liberation Mono',monospace;font-weight:bold;font-size:11px;letter-spacing:-0.6px;">y</div><svg style="left:899px;top:428px" width="56" height="16"><polygon points="0.5,0.5 52.5,0.5 55.5,3.5 55.5,15.5 0.5,15.5" fill="#fcfcfc" stroke="#000" stroke-width="1"/><polyline points="0.5,0.5 8.0,8.0 0.5,15.5" fill="none" stroke="#000" stroke-width="1"/></svg><div style="left:908px;top:429px;height:15px;line-height:16px;white-space:pre;color:#000;font-family:'Liberation Mono',monospace;font-weight:bold;font-size:11px;letter-spacing:-0.6px;">194</div><div style="left:888px;top:444px;height:15px;line-height:15px;white-space:pre;color:#000;font-family:'Liberation Mono',monospace;font-weight:bold;font-size:11px;letter-spacing:-0.6px;">x</div><svg style="left:899px;top:443px" width="56" height="16"><polygon points="0.5,0.5 52.5,0.5 55.5,3.5 55.5,15.5 0.5,15.5" fill="#fcfcfc" stroke="#000" stroke-width="1"/><polyline points="0.5,0.5 8.0,8.0 0.5,15.5" fill="none" stroke="#000" stroke-width="1"/></svg><div style="left:908px;top:444px;height:15px;line-height:16px;white-space:pre;color:#000;font-family:'Liberation Mono',monospace;font-weight:bold;font-size:11px;letter-spacing:-0.6px;">118</div><div style="left:888px;top:459px;height:15px;line-height:15px;white-space:pre;color:#000;font-family:'Liberation Mono',monospace;font-weight:bold;font-size:11px;letter-spacing:-0.6px;">y</div><svg style="left:899px;top:458px" width="56" height="16"><polygon points="0.5,0.5 52.5,0.5 55.5,3.5 55.5,15.5 0.5,15.5" fill="#fcfcfc" stroke="#000" stroke-width="1"/><polyline points="0.5,0.5 8.0,8.0 0.5,15.5" fill="none" stroke="#000" stroke-width="1"/></svg><div style="left:908px;top:459px;height:15px;line-height:16px;white-space:pre;color:#000;font-family:'Liberation Mono',monospace;font-weight:bold;font-size:11px;letter-spacing:-0.6px;">89</div><div style="left:957px;top:414px;height:15px;line-height:15px;white-space:pre;color:#000;font-family:'Liberation Mono',monospace;font-weight:bold;font-size:11px;letter-spacing:-0.6px;">x</div><svg style="left:967px;top:413px" width="56" height="16"><polygon points="0.5,0.5 52.5,0.5 55.5,3.5 55.5,15.5 0.5,15.5" fill="#fcfcfc" stroke="#000" stroke-width="1"/><polyline points="0.5,0.5 8.0,8.0 0.5,15.5" fill="none" stroke="#000" stroke-width="1"/></svg><div style="left:976px;top:414px;height:15px;line-height:16px;white-space:pre;color:#000;font-family:'Liberation Mono',monospace;font-weight:bold;font-size:11px;letter-spacing:-0.6px;">62</div><div style="left:957px;top:429px;height:15px;line-height:15px;white-space:pre;color:#000;font-family:'Liberation Mono',monospace;font-weight:bold;font-size:11px;letter-spacing:-0.6px;">y</div><svg style="left:967px;top:428px" width="56" height="16"><polygon points="0.5,0.5 52.5,0.5 55.5,3.5 55.5,15.5 0.5,15.5" fill="#fcfcfc" stroke="#000" stroke-width="1"/><polyline points="0.5,0.5 8.0,8.0 0.5,15.5" fill="none" stroke="#000" stroke-width="1"/></svg><div style="left:976px;top:429px;height:15px;line-height:16px;white-space:pre;color:#000;font-family:'Liberation Mono',monospace;font-weight:bold;font-size:11px;letter-spacing:-0.6px;">-385</div><div style="left:957px;top:444px;height:15px;line-height:15px;white-space:pre;color:#000;font-family:'Liberation Mono',monospace;font-weight:bold;font-size:11px;letter-spacing:-0.6px;">x</div><svg style="left:967px;top:443px" width="56" height="16"><polygon points="0.5,0.5 52.5,0.5 55.5,3.5 55.5,15.5 0.5,15.5" fill="#fcfcfc" stroke="#000" stroke-width="1"/><polyline points="0.5,0.5 8.0,8.0 0.5,15.5" fill="none" stroke="#000" stroke-width="1"/></svg><div style="left:976px;top:444px;height:15px;line-height:16px;white-space:pre;color:#000;font-family:'Liberation Mono',monospace;font-weight:bold;font-size:11px;letter-spacing:-0.6px;">229</div><div style="left:957px;top:459px;height:15px;line-height:15px;white-space:pre;color:#000;font-family:'Liberation Mono',monospace;font-weight:bold;font-size:11px;letter-spacing:-0.6px;">y</div><svg style="left:967px;top:458px" width="56" height="16"><polygon points="0.5,0.5 52.5,0.5 55.5,3.5 55.5,15.5 0.5,15.5" fill="#fcfcfc" stroke="#000" stroke-width="1"/><polyline points="0.5,0.5 8.0,8.0 0.5,15.5" fill="none" stroke="#000" stroke-width="1"/></svg><div style="left:976px;top:459px;height:15px;line-height:16px;white-space:pre;color:#000;font-family:'Liberation Mono',monospace;font-weight:bold;font-size:11px;letter-spacing:-0.6px;">-270</div><div style="left:1023px;top:413px;width:31px;height:31px;background:#fcfcfc;border:1px solid #000;box-sizing:border-box"></div><svg style="left:1023px;top:413px" width="31" height="31"><path d="M3,3 L28,28 M28,3 L3,28" stroke="#f00" stroke-width="2"/></svg><svg style="left:1023px;top:443px" width="30" height="16"><polygon points="0.5,0.5 26.5,0.5 29.5,3.5 29.5,15.5 0.5,15.5" fill="#f8c8c8" stroke="#000" stroke-width="1"/><polyline points="0.5,0.5 8.0,8.0 0.5,15.5" fill="none" stroke="#000" stroke-width="1"/></svg><div style="left:1032px;top:444px;height:15px;line-height:16px;white-space:pre;color:#000;font-family:'Liberation Mono',monospace;font-weight:bold;font-size:11px;letter-spacing:-0.6px;">13</div><div style="left:1023px;top:458px;width:16px;height:16px;background:#fcfcfc;border:1px solid #000;box-sizing:border-box"></div><svg style="left:1038px;top:458px" width="16" height="16"><rect x="0.5" y="0.5" width="15" height="15" fill="#f00" stroke="#000"/><circle cx="8.0" cy="8.0" r="6.9" fill="#f00" stroke="#000" stroke-width="1"/></svg><svg style="left:1023px;top:473px" width="30" height="16"><polygon points="0.5,0.5 26.5,0.5 29.5,3.5 29.5,15.5 0.5,15.5" fill="#f00" stroke="#000" stroke-width="1"/><polyline points="0.5,0.5 8.0,8.0 0.5,15.5" fill="none" stroke="#fff" stroke-width="1"/></svg><div style="left:1032px;top:474px;height:15px;line-height:16px;white-space:pre;color:#fff;font-family:'Liberation Mono',monospace;font-weight:bold;font-size:11px;letter-spacing:-0.6px;">13</div><div style="left:727px;top:491px;width:327px;height:76px;background:#fff;border:1px solid #000;box-sizing:border-box"></div><div style="left:727px;top:491px;width:135px;height:16px;background:#f00;border:1px solid #000;box-sizing:border-box"></div><div style="left:727px;top:506px;width:135px;height:16px;background:#0f0;border:1px solid #000;box-sizing:border-box"></div><div style="left:727px;top:521px;width:135px;height:16px;background:#00f;border:1px solid #000;box-sizing:border-box"></div><div style="left:727px;top:536px;width:135px;height:16px;background:#fcfcfc;border:1px solid #000;box-sizing:border-box"></div><div style="position:absolute;left:730px;top:492px;width:3px;height:13px;background:#fff;"></div><div style="position:absolute;left:835px;top:507px;width:3px;height:13px;background:#fff;"></div><div style="position:absolute;left:789px;top:522px;width:3px;height:13px;background:#fff;"></div><div style="position:absolute;left:833px;top:537px;width:3px;height:13px;background:#000;"></div><div style="left:740px;top:538px;height:15px;line-height:15px;white-space:pre;color:#000;font-family:'Liberation Mono',monospace;font-weight:bold;font-size:11px;letter-spacing:-0.6px;">alpha</div><div style="left:727px;top:551px;width:16px;height:16px;background:#fcfcfc;border:1px solid #000;box-sizing:border-box"></div><div style="left:728px;top:552px;height:15px;line-height:15px;white-space:pre;color:#000;font-family:'Liberation Mono',monospace;font-weight:bold;font-size:11px;letter-spacing:-0.6px;">rn</div><svg style="left:727px;top:551px" width="16" height="16"><path d="M2,2 L14,14 M14,2 L2,14" stroke="#f00" stroke-width="1"/></svg><div style="left:742px;top:551px;width:14px;height:16px;background:#fcfcfc;border:1px solid #000;box-sizing:border-box"></div><div style="left:745px;top:552px;height:15px;line-height:15px;white-space:pre;color:#000;font-family:'Liberation Mono',monospace;font-weight:bold;font-size:11px;letter-spacing:-0.6px;">t</div><svg style="left:755px;top:551px" width="55" height="16"><polygon points="0.5,0.5 51.5,0.5 54.5,3.5 54.5,15.5 0.5,15.5" fill="#d8d8d8" stroke="#000" stroke-width="1"/><polyline points="0.5,0.5 8.0,8.0 0.5,15.5" fill="none" stroke="#000" stroke-width="1"/></svg><div style="left:764px;top:552px;height:15px;line-height:16px;white-space:pre;color:#000;font-family:'Liberation Mono',monospace;font-weight:bold;font-size:11px;letter-spacing:-0.6px;">28</div><div style="left:809px;top:551px;width:24px;height:16px;background:#fcfcfc;border:1px solid #000;box-sizing:border-box"></div><div style="left:816px;top:552px;height:15px;line-height:15px;white-space:pre;color:#000;font-family:'Liberation Mono',monospace;font-weight:bold;font-size:11px;letter-spacing:-0.6px;">fu</div><svg style="left:832px;top:551px" width="30" height="16"><polygon points="0.5,0.5 26.5,0.5 29.5,3.5 29.5,15.5 0.5,15.5" fill="#d8d8d8" stroke="#000" stroke-width="1"/><polyline points="0.5,0.5 8.0,8.0 0.5,15.5" fill="none" stroke="#000" stroke-width="1"/></svg><div style="left:841px;top:552px;height:15px;line-height:16px;white-space:pre;color:#000;font-family:'Liberation Mono',monospace;font-weight:bold;font-size:11px;letter-spacing:-0.6px;">0</div><div style="position:absolute;left:863px;top:491px;width:16px;height:45px;background:#00cc78;"></div><div style="left:888px;top:492px;height:15px;line-height:15px;white-space:pre;color:#000;font-family:'Liberation Mono',monospace;font-weight:bold;font-size:11px;letter-spacing:-0.6px;">x</div><svg style="left:899px;top:491px" width="56" height="16"><polygon points="0.5,0.5 52.5,0.5 55.5,3.5 55.5,15.5 0.5,15.5" fill="#fcfcfc" stroke="#000" stroke-width="1"/><polyline points="0.5,0.5 8.0,8.0 0.5,15.5" fill="none" stroke="#000" stroke-width="1"/></svg><div style="left:908px;top:492px;height:15px;line-height:16px;white-space:pre;color:#000;font-family:'Liberation Mono',monospace;font-weight:bold;font-size:11px;letter-spacing:-0.6px;">63</div><div style="left:888px;top:507px;height:15px;line-height:15px;white-space:pre;color:#000;font-family:'Liberation Mono',monospace;font-weight:bold;font-size:11px;letter-spacing:-0.6px;">y</div><svg style="left:899px;top:506px" width="56" height="16"><polygon points="0.5,0.5 52.5,0.5 55.5,3.5 55.5,15.5 0.5,15.5" fill="#fcfcfc" stroke="#000" stroke-width="1"/><polyline points="0.5,0.5 8.0,8.0 0.5,15.5" fill="none" stroke="#000" stroke-width="1"/></svg><div style="left:908px;top:507px;height:15px;line-height:16px;white-space:pre;color:#000;font-family:'Liberation Mono',monospace;font-weight:bold;font-size:11px;letter-spacing:-0.6px;">-382</div><div style="left:888px;top:522px;height:15px;line-height:15px;white-space:pre;color:#000;font-family:'Liberation Mono',monospace;font-weight:bold;font-size:11px;letter-spacing:-0.6px;">x</div><svg style="left:899px;top:521px" width="56" height="16"><polygon points="0.5,0.5 52.5,0.5 55.5,3.5 55.5,15.5 0.5,15.5" fill="#fcfcfc" stroke="#000" stroke-width="1"/><polyline points="0.5,0.5 8.0,8.0 0.5,15.5" fill="none" stroke="#000" stroke-width="1"/></svg><div style="left:908px;top:522px;height:15px;line-height:16px;white-space:pre;color:#000;font-family:'Liberation Mono',monospace;font-weight:bold;font-size:11px;letter-spacing:-0.6px;">-65</div><div style="left:888px;top:537px;height:15px;line-height:15px;white-space:pre;color:#000;font-family:'Liberation Mono',monospace;font-weight:bold;font-size:11px;letter-spacing:-0.6px;">y</div><svg style="left:899px;top:536px" width="56" height="16"><polygon points="0.5,0.5 52.5,0.5 55.5,3.5 55.5,15.5 0.5,15.5" fill="#fcfcfc" stroke="#000" stroke-width="1"/><polyline points="0.5,0.5 8.0,8.0 0.5,15.5" fill="none" stroke="#000" stroke-width="1"/></svg><div style="left:908px;top:537px;height:15px;line-height:16px;white-space:pre;color:#000;font-family:'Liberation Mono',monospace;font-weight:bold;font-size:11px;letter-spacing:-0.6px;">-235</div><div style="left:957px;top:492px;height:15px;line-height:15px;white-space:pre;color:#000;font-family:'Liberation Mono',monospace;font-weight:bold;font-size:11px;letter-spacing:-0.6px;">x</div><svg style="left:967px;top:491px" width="56" height="16"><polygon points="0.5,0.5 52.5,0.5 55.5,3.5 55.5,15.5 0.5,15.5" fill="#fcfcfc" stroke="#000" stroke-width="1"/><polyline points="0.5,0.5 8.0,8.0 0.5,15.5" fill="none" stroke="#000" stroke-width="1"/></svg><div style="left:976px;top:492px;height:15px;line-height:16px;white-space:pre;color:#000;font-family:'Liberation Mono',monospace;font-weight:bold;font-size:11px;letter-spacing:-0.6px;">-321</div><div style="left:957px;top:507px;height:15px;line-height:15px;white-space:pre;color:#000;font-family:'Liberation Mono',monospace;font-weight:bold;font-size:11px;letter-spacing:-0.6px;">y</div><svg style="left:967px;top:506px" width="56" height="16"><polygon points="0.5,0.5 52.5,0.5 55.5,3.5 55.5,15.5 0.5,15.5" fill="#fcfcfc" stroke="#000" stroke-width="1"/><polyline points="0.5,0.5 8.0,8.0 0.5,15.5" fill="none" stroke="#000" stroke-width="1"/></svg><div style="left:976px;top:507px;height:15px;line-height:16px;white-space:pre;color:#000;font-family:'Liberation Mono',monospace;font-weight:bold;font-size:11px;letter-spacing:-0.6px;">250</div><div style="left:957px;top:522px;height:15px;line-height:15px;white-space:pre;color:#000;font-family:'Liberation Mono',monospace;font-weight:bold;font-size:11px;letter-spacing:-0.6px;">x</div><svg style="left:967px;top:521px" width="56" height="16"><polygon points="0.5,0.5 52.5,0.5 55.5,3.5 55.5,15.5 0.5,15.5" fill="#fcfcfc" stroke="#000" stroke-width="1"/><polyline points="0.5,0.5 8.0,8.0 0.5,15.5" fill="none" stroke="#000" stroke-width="1"/></svg><div style="left:976px;top:522px;height:15px;line-height:16px;white-space:pre;color:#000;font-family:'Liberation Mono',monospace;font-weight:bold;font-size:11px;letter-spacing:-0.6px;">-70</div><div style="left:957px;top:537px;height:15px;line-height:15px;white-space:pre;color:#000;font-family:'Liberation Mono',monospace;font-weight:bold;font-size:11px;letter-spacing:-0.6px;">y</div><svg style="left:967px;top:536px" width="56" height="16"><polygon points="0.5,0.5 52.5,0.5 55.5,3.5 55.5,15.5 0.5,15.5" fill="#fcfcfc" stroke="#000" stroke-width="1"/><polyline points="0.5,0.5 8.0,8.0 0.5,15.5" fill="none" stroke="#000" stroke-width="1"/></svg><div style="left:976px;top:537px;height:15px;line-height:16px;white-space:pre;color:#000;font-family:'Liberation Mono',monospace;font-weight:bold;font-size:11px;letter-spacing:-0.6px;">-242</div><div style="left:1023px;top:491px;width:31px;height:31px;background:#fcfcfc;border:1px solid #000;box-sizing:border-box"></div><svg style="left:1023px;top:491px" width="31" height="31"><path d="M3,3 L28,28 M28,3 L3,28" stroke="#f00" stroke-width="2"/></svg><svg style="left:1023px;top:521px" width="30" height="16"><polygon points="0.5,0.5 26.5,0.5 29.5,3.5 29.5,15.5 0.5,15.5" fill="#f8c8c8" stroke="#000" stroke-width="1"/><polyline points="0.5,0.5 8.0,8.0 0.5,15.5" fill="none" stroke="#000" stroke-width="1"/></svg><div style="left:1032px;top:522px;height:15px;line-height:16px;white-space:pre;color:#000;font-family:'Liberation Mono',monospace;font-weight:bold;font-size:11px;letter-spacing:-0.6px;">13</div><div style="left:1023px;top:536px;width:16px;height:16px;background:#fcfcfc;border:1px solid #000;box-sizing:border-box"></div><svg style="left:1038px;top:536px" width="16" height="16"><rect x="0.5" y="0.5" width="15" height="15" fill="#f00" stroke="#000"/><circle cx="8.0" cy="8.0" r="6.9" fill="#f00" stroke="#000" stroke-width="1"/></svg><svg style="left:1023px;top:551px" width="30" height="16"><polygon points="0.5,0.5 26.5,0.5 29.5,3.5 29.5,15.5 0.5,15.5" fill="#f00" stroke="#000" stroke-width="1"/><polyline points="0.5,0.5 8.0,8.0 0.5,15.5" fill="none" stroke="#fff" stroke-width="1"/></svg><div style="left:1032px;top:552px;height:15px;line-height:16px;white-space:pre;color:#fff;font-family:'Liberation Mono',monospace;font-weight:bold;font-size:11px;letter-spacing:-0.6px;">13</div><div style="left:727px;top:570px;width:327px;height:76px;background:#fff;border:1px solid #000;box-sizing:border-box"></div><div style="left:727px;top:570px;width:135px;height:16px;background:#f00;border:1px solid #000;box-sizing:border-box"></div><div style="left:727px;top:585px;width:135px;height:16px;background:#0f0;border:1px solid #000;box-sizing:border-box"></div><div style="left:727px;top:600px;width:135px;height:16px;background:#00f;border:1px solid #000;box-sizing:border-box"></div><div style="left:727px;top:615px;width:135px;height:16px;background:#fcfcfc;border:1px solid #000;box-sizing:border-box"></div><div style="position:absolute;left:750px;top:571px;width:3px;height:13px;background:#fff;"></div><div style="position:absolute;left:803px;top:586px;width:3px;height:13px;background:#fff;"></div><div style="position:absolute;left:777px;top:601px;width:3px;height:13px;background:#fff;"></div><div style="position:absolute;left:826px;top:616px;width:3px;height:13px;background:#000;"></div><div style="left:740px;top:617px;height:15px;line-height:15px;white-space:pre;color:#000;font-family:'Liberation Mono',monospace;font-weight:bold;font-size:11px;letter-spacing:-0.6px;">alpha</div><div style="left:727px;top:630px;width:16px;height:16px;background:#fcfcfc;border:1px solid #000;box-sizing:border-box"></div><div style="left:728px;top:631px;height:15px;line-height:15px;white-space:pre;color:#000;font-family:'Liberation Mono',monospace;font-weight:bold;font-size:11px;letter-spacing:-0.6px;">rn</div><svg style="left:727px;top:630px" width="16" height="16"><path d="M2,2 L14,14 M14,2 L2,14" stroke="#f00" stroke-width="1"/></svg><div style="left:742px;top:630px;width:14px;height:16px;background:#fcfcfc;border:1px solid #000;box-sizing:border-box"></div><div style="left:745px;top:631px;height:15px;line-height:15px;white-space:pre;color:#000;font-family:'Liberation Mono',monospace;font-weight:bold;font-size:11px;letter-spacing:-0.6px;">t</div><svg style="left:755px;top:630px" width="55" height="16"><polygon points="0.5,0.5 51.5,0.5 54.5,3.5 54.5,15.5 0.5,15.5" fill="#d8d8d8" stroke="#000" stroke-width="1"/><polyline points="0.5,0.5 8.0,8.0 0.5,15.5" fill="none" stroke="#000" stroke-width="1"/></svg><div style="left:764px;top:631px;height:15px;line-height:16px;white-space:pre;color:#000;font-family:'Liberation Mono',monospace;font-weight:bold;font-size:11px;letter-spacing:-0.6px;">28</div><div style="left:809px;top:630px;width:24px;height:16px;background:#fcfcfc;border:1px solid #000;box-sizing:border-box"></div><div style="left:816px;top:631px;height:15px;line-height:15px;white-space:pre;color:#000;font-family:'Liberation Mono',monospace;font-weight:bold;font-size:11px;letter-spacing:-0.6px;">fu</div><svg style="left:832px;top:630px" width="30" height="16"><polygon points="0.5,0.5 26.5,0.5 29.5,3.5 29.5,15.5 0.5,15.5" fill="#d8d8d8" stroke="#000" stroke-width="1"/><polyline points="0.5,0.5 8.0,8.0 0.5,15.5" fill="none" stroke="#000" stroke-width="1"/></svg><div style="left:841px;top:631px;height:15px;line-height:16px;white-space:pre;color:#000;font-family:'Liberation Mono',monospace;font-weight:bold;font-size:11px;letter-spacing:-0.6px;">0</div><div style="position:absolute;left:863px;top:570px;width:16px;height:45px;background:#2a8a5a;"></div><div style="left:888px;top:571px;height:15px;line-height:15px;white-space:pre;color:#000;font-family:'Liberation Mono',monospace;font-weight:bold;font-size:11px;letter-spacing:-0.6px;">x</div><svg style="left:899px;top:570px" width="56" height="16"><polygon points="0.5,0.5 52.5,0.5 55.5,3.5 55.5,15.5 0.5,15.5" fill="#fcfcfc" stroke="#000" stroke-width="1"/><polyline points="0.5,0.5 8.0,8.0 0.5,15.5" fill="none" stroke="#000" stroke-width="1"/></svg><div style="left:908px;top:571px;height:15px;line-height:16px;white-space:pre;color:#000;font-family:'Liberation Mono',monospace;font-weight:bold;font-size:11px;letter-spacing:-0.6px;">-264</div><div style="left:888px;top:586px;height:15px;line-height:15px;white-space:pre;color:#000;font-family:'Liberation Mono',monospace;font-weight:bold;font-size:11px;letter-spacing:-0.6px;">y</div><svg style="left:899px;top:585px" width="56" height="16"><polygon points="0.5,0.5 52.5,0.5 55.5,3.5 55.5,15.5 0.5,15.5" fill="#fcfcfc" stroke="#000" stroke-width="1"/><polyline points="0.5,0.5 8.0,8.0 0.5,15.5" fill="none" stroke="#000" stroke-width="1"/></svg><div style="left:908px;top:586px;height:15px;line-height:16px;white-space:pre;color:#000;font-family:'Liberation Mono',monospace;font-weight:bold;font-size:11px;letter-spacing:-0.6px;">291</div><div style="left:888px;top:601px;height:15px;line-height:15px;white-space:pre;color:#000;font-family:'Liberation Mono',monospace;font-weight:bold;font-size:11px;letter-spacing:-0.6px;">x</div><svg style="left:899px;top:600px" width="56" height="16"><polygon points="0.5,0.5 52.5,0.5 55.5,3.5 55.5,15.5 0.5,15.5" fill="#fcfcfc" stroke="#000" stroke-width="1"/><polyline points="0.5,0.5 8.0,8.0 0.5,15.5" fill="none" stroke="#000" stroke-width="1"/></svg><div style="left:908px;top:601px;height:15px;line-height:16px;white-space:pre;color:#000;font-family:'Liberation Mono',monospace;font-weight:bold;font-size:11px;letter-spacing:-0.6px;">-248</div><div style="left:888px;top:616px;height:15px;line-height:15px;white-space:pre;color:#000;font-family:'Liberation Mono',monospace;font-weight:bold;font-size:11px;letter-spacing:-0.6px;">y</div><svg style="left:899px;top:615px" width="56" height="16"><polygon points="0.5,0.5 52.5,0.5 55.5,3.5 55.5,15.5 0.5,15.5" fill="#fcfcfc" stroke="#000" stroke-width="1"/><polyline points="0.5,0.5 8.0,8.0 0.5,15.5" fill="none" stroke="#000" stroke-width="1"/></svg><div style="left:908px;top:616px;height:15px;line-height:16px;white-space:pre;color:#000;font-family:'Liberation Mono',monospace;font-weight:bold;font-size:11px;letter-spacing:-0.6px;">-273</div><div style="left:957px;top:571px;height:15px;line-height:15px;white-space:pre;color:#000;font-family:'Liberation Mono',monospace;font-weight:bold;font-size:11px;letter-spacing:-0.6px;">x</div><svg style="left:967px;top:570px" width="56" height="16"><polygon points="0.5,0.5 52.5,0.5 55.5,3.5 55.5,15.5 0.5,15.5" fill="#fcfcfc" stroke="#000" stroke-width="1"/><polyline points="0.5,0.5 8.0,8.0 0.5,15.5" fill="none" stroke="#000" stroke-width="1"/></svg><div style="left:976px;top:571px;height:15px;line-height:16px;white-space:pre;color:#000;font-family:'Liberation Mono',monospace;font-weight:bold;font-size:11px;letter-spacing:-0.6px;">-263</div><div style="left:957px;top:586px;height:15px;line-height:15px;white-space:pre;color:#000;font-family:'Liberation Mono',monospace;font-weight:bold;font-size:11px;letter-spacing:-0.6px;">y</div><svg style="left:967px;top:585px" width="56" height="16"><polygon points="0.5,0.5 52.5,0.5 55.5,3.5 55.5,15.5 0.5,15.5" fill="#fcfcfc" stroke="#000" stroke-width="1"/><polyline points="0.5,0.5 8.0,8.0 0.5,15.5" fill="none" stroke="#000" stroke-width="1"/></svg><div style="left:976px;top:586px;height:15px;line-height:16px;white-space:pre;color:#000;font-family:'Liberation Mono',monospace;font-weight:bold;font-size:11px;letter-spacing:-0.6px;">292</div><div style="left:957px;top:601px;height:15px;line-height:15px;white-space:pre;color:#000;font-family:'Liberation Mono',monospace;font-weight:bold;font-size:11px;letter-spacing:-0.6px;">x</div><svg style="left:967px;top:600px" width="56" height="16"><polygon points="0.5,0.5 52.5,0.5 55.5,3.5 55.5,15.5 0.5,15.5" fill="#fcfcfc" stroke="#000" stroke-width="1"/><polyline points="0.5,0.5 8.0,8.0 0.5,15.5" fill="none" stroke="#000" stroke-width="1"/></svg><div style="left:976px;top:601px;height:15px;line-height:16px;white-space:pre;color:#000;font-family:'Liberation Mono',monospace;font-weight:bold;font-size:11px;letter-spacing:-0.6px;">-233</div><div style="left:957px;top:616px;height:15px;line-height:15px;white-space:pre;color:#000;font-family:'Liberation Mono',monospace;font-weight:bold;font-size:11px;letter-spacing:-0.6px;">y</div><svg style="left:967px;top:615px" width="56" height="16"><polygon points="0.5,0.5 52.5,0.5 55.5,3.5 55.5,15.5 0.5,15.5" fill="#fcfcfc" stroke="#000" stroke-width="1"/><polyline points="0.5,0.5 8.0,8.0 0.5,15.5" fill="none" stroke="#000" stroke-width="1"/></svg><div style="left:976px;top:616px;height:15px;line-height:16px;white-space:pre;color:#000;font-family:'Liberation Mono',monospace;font-weight:bold;font-size:11px;letter-spacing:-0.6px;">194</div><div style="left:1023px;top:570px;width:31px;height:31px;background:#fcfcfc;border:1px solid #000;box-sizing:border-box"></div><svg style="left:1023px;top:570px" width="31" height="31"><path d="M3,3 L28,28 M28,3 L3,28" stroke="#f00" stroke-width="2"/></svg><svg style="left:1023px;top:600px" width="30" height="16"><polygon points="0.5,0.5 26.5,0.5 29.5,3.5 29.5,15.5 0.5,15.5" fill="#f8c8c8" stroke="#000" stroke-width="1"/><polyline points="0.5,0.5 8.0,8.0 0.5,15.5" fill="none" stroke="#000" stroke-width="1"/></svg><div style="left:1032px;top:601px;height:15px;line-height:16px;white-space:pre;color:#000;font-family:'Liberation Mono',monospace;font-weight:bold;font-size:11px;letter-spacing:-0.6px;">13</div><div style="left:1023px;top:615px;width:16px;height:16px;background:#fcfcfc;border:1px solid #000;box-sizing:border-box"></div><svg style="left:1038px;top:615px" width="16" height="16"><rect x="0.5" y="0.5" width="15" height="15" fill="#f00" stroke="#000"/><circle cx="8.0" cy="8.0" r="6.9" fill="#f00" stroke="#000" stroke-width="1"/></svg><svg style="left:1023px;top:630px" width="30" height="16"><polygon points="0.5,0.5 26.5,0.5 29.5,3.5 29.5,15.5 0.5,15.5" fill="#f00" stroke="#000" stroke-width="1"/><polyline points="0.5,0.5 8.0,8.0 0.5,15.5" fill="none" stroke="#fff" stroke-width="1"/></svg><div style="left:1032px;top:631px;height:15px;line-height:16px;white-space:pre;color:#fff;font-family:'Liberation Mono',monospace;font-weight:bold;font-size:11px;letter-spacing:-0.6px;">13</div><div style="left:1058px;top:233px;width:385px;height:91px;background:#fff;border:1px solid #000;box-sizing:border-box"></div><div style="left:1058px;top:233px;width:134px;height:16px;background:#f00;border:1px solid #000;box-sizing:border-box"></div><div style="left:1058px;top:248px;width:134px;height:16px;background:#0f0;border:1px solid #000;box-sizing:border-box"></div><div style="left:1058px;top:263px;width:134px;height:16px;background:#00f;border:1px solid #000;box-sizing:border-box"></div><div style="left:1058px;top:278px;width:134px;height:16px;background:#fcfcfc;border:1px solid #000;box-sizing:border-box"></div><div style="position:absolute;left:1177px;top:234px;width:3px;height:13px;background:#fff;"></div><div style="position:absolute;left:1164px;top:249px;width:3px;height:13px;background:#fff;"></div><div style="position:absolute;left:1082px;top:264px;width:3px;height:13px;background:#fff;"></div><div style="position:absolute;left:1102px;top:279px;width:3px;height:13px;background:#000;"></div><div style="left:1071px;top:280px;height:15px;line-height:15px;white-space:pre;color:#000;font-family:'Liberation Mono',monospace;font-weight:bold;font-size:11px;letter-spacing:-0.6px;">alpha</div><div style="left:1058px;top:293px;width:134px;height:16px;background:#fcfcfc;border:1px solid #000;box-sizing:border-box"></div><div style="position:absolute;left:1157px;top:294px;width:3px;height:13px;background:#000;"></div><div style="left:1071px;top:295px;height:15px;line-height:15px;white-space:pre;color:#000;font-family:'Liberation Mono',monospace;font-weight:bold;font-size:11px;letter-spacing:-0.6px;">threshold</div><div style="left:1058px;top:308px;width:16px;height:16px;background:#fcfcfc;border:1px solid #000;box-sizing:border-box"></div><div style="left:1059px;top:309px;height:15px;line-height:15px;white-space:pre;color:#000;font-family:'Liberation Mono',monospace;font-weight:bold;font-size:11px;letter-spacing:-0.6px;">rn</div><svg style="left:1058px;top:308px" width="16" height="16"><path d="M2,2 L14,14 M14,2 L2,14" stroke="#f00" stroke-width="1"/></svg><div style="left:1073px;top:308px;width:15px;height:16px;background:#fcfcfc;border:1px solid #000;box-sizing:border-box"></div><div style="left:1076px;top:309px;height:15px;line-height:15px;white-space:pre;color:#000;font-family:'Liberation Mono',monospace;font-weight:bold;font-size:11px;letter-spacing:-0.6px;">t</div><svg style="left:1087px;top:308px" width="54" height="16"><polygon points="0.5,0.5 50.5,0.5 53.5,3.5 53.5,15.5 0.5,15.5" fill="#d8d8d8" stroke="#000" stroke-width="1"/><polyline points="0.5,0.5 8.0,8.0 0.5,15.5" fill="none" stroke="#000" stroke-width="1"/></svg><div style="left:1096px;top:309px;height:15px;line-height:16px;white-space:pre;color:#000;font-family:'Liberation Mono',monospace;font-weight:bold;font-size:11px;letter-spacing:-0.6px;">355</div><div style="left:1140px;top:308px;width:24px;height:16px;background:#fcfcfc;border:1px solid #000;box-sizing:border-box"></div><div style="left:1147px;top:309px;height:15px;line-height:15px;white-space:pre;color:#000;font-family:'Liberation Mono',monospace;font-weight:bold;font-size:11px;letter-spacing:-0.6px;">fu</div><svg style="left:1163px;top:308px" width="29" height="16"><polygon points="0.5,0.5 25.5,0.5 28.5,3.5 28.5,15.5 0.5,15.5" fill="#d8d8d8" stroke="#000" stroke-width="1"/><polyline points="0.5,0.5 8.0,8.0 0.5,15.5" fill="none" stroke="#000" stroke-width="1"/></svg><div style="left:1172px;top:309px;height:15px;line-height:16px;white-space:pre;color:#000;font-family:'Liberation Mono',monospace;font-weight:bold;font-size:11px;letter-spacing:-0.6px;">0</div><div style="position:absolute;left:1194px;top:233px;width:16px;height:45px;background:#e6c828;"></div><div style="left:1221px;top:234px;height:15px;line-height:15px;white-space:pre;color:#000;font-family:'Liberation Mono',monospace;font-weight:bold;font-size:11px;letter-spacing:-0.6px;">x</div><svg style="left:1230px;top:233px" width="55" height="16"><polygon points="0.5,0.5 51.5,0.5 54.5,3.5 54.5,15.5 0.5,15.5" fill="#fcfcfc" stroke="#000" stroke-width="1"/><polyline points="0.5,0.5 8.0,8.0 0.5,15.5" fill="none" stroke="#000" stroke-width="1"/></svg><div style="left:1239px;top:234px;height:15px;line-height:16px;white-space:pre;color:#000;font-family:'Liberation Mono',monospace;font-weight:bold;font-size:11px;letter-spacing:-0.6px;">-71</div><div style="left:1221px;top:249px;height:15px;line-height:15px;white-space:pre;color:#000;font-family:'Liberation Mono',monospace;font-weight:bold;font-size:11px;letter-spacing:-0.6px;">y</div><svg style="left:1230px;top:248px" width="55" height="16"><polygon points="0.5,0.5 51.5,0.5 54.5,3.5 54.5,15.5 0.5,15.5" fill="#fcfcfc" stroke="#000" stroke-width="1"/><polyline points="0.5,0.5 8.0,8.0 0.5,15.5" fill="none" stroke="#000" stroke-width="1"/></svg><div style="left:1239px;top:249px;height:15px;line-height:16px;white-space:pre;color:#000;font-family:'Liberation Mono',monospace;font-weight:bold;font-size:11px;letter-spacing:-0.6px;">342</div><div style="left:1221px;top:264px;height:15px;line-height:15px;white-space:pre;color:#000;font-family:'Liberation Mono',monospace;font-weight:bold;font-size:11px;letter-spacing:-0.6px;">x</div><svg style="left:1230px;top:263px" width="55" height="16"><polygon points="0.5,0.5 51.5,0.5 54.5,3.5 54.5,15.5 0.5,15.5" fill="#fcfcfc" stroke="#000" stroke-width="1"/><polyline points="0.5,0.5 8.0,8.0 0.5,15.5" fill="none" stroke="#000" stroke-width="1"/></svg><div style="left:1239px;top:264px;height:15px;line-height:16px;white-space:pre;color:#000;font-family:'Liberation Mono',monospace;font-weight:bold;font-size:11px;letter-spacing:-0.6px;">-251</div><div style="left:1221px;top:279px;height:15px;line-height:15px;white-space:pre;color:#000;font-family:'Liberation Mono',monospace;font-weight:bold;font-size:11px;letter-spacing:-0.6px;">y</div><svg style="left:1230px;top:278px" width="55" height="16"><polygon points="0.5,0.5 51.5,0.5 54.5,3.5 54.5,15.5 0.5,15.5" fill="#fcfcfc" stroke="#000" stroke-width="1"/><polyline points="0.5,0.5 8.0,8.0 0.5,15.5" fill="none" stroke="#000" stroke-width="1"/></svg><div style="left:1239px;top:279px;height:15px;line-height:16px;white-space:pre;color:#000;font-family:'Liberation Mono',monospace;font-weight:bold;font-size:11px;letter-spacing:-0.6px;">246</div><div style="left:1289px;top:234px;height:15px;line-height:15px;white-space:pre;color:#000;font-family:'Liberation Mono',monospace;font-weight:bold;font-size:11px;letter-spacing:-0.6px;">x</div><svg style="left:1298px;top:233px" width="55" height="16"><polygon points="0.5,0.5 51.5,0.5 54.5,3.5 54.5,15.5 0.5,15.5" fill="#fcfcfc" stroke="#000" stroke-width="1"/><polyline points="0.5,0.5 8.0,8.0 0.5,15.5" fill="none" stroke="#000" stroke-width="1"/></svg><div style="left:1307px;top:234px;height:15px;line-height:16px;white-space:pre;color:#000;font-family:'Liberation Mono',monospace;font-weight:bold;font-size:11px;letter-spacing:-0.6px;">31</div><div style="left:1289px;top:249px;height:15px;line-height:15px;white-space:pre;color:#000;font-family:'Liberation Mono',monospace;font-weight:bold;font-size:11px;letter-spacing:-0.6px;">y</div><svg style="left:1298px;top:248px" width="55" height="16"><polygon points="0.5,0.5 51.5,0.5 54.5,3.5 54.5,15.5 0.5,15.5" fill="#fcfcfc" stroke="#000" stroke-width="1"/><polyline points="0.5,0.5 8.0,8.0 0.5,15.5" fill="none" stroke="#000" stroke-width="1"/></svg><div style="left:1307px;top:249px;height:15px;line-height:16px;white-space:pre;color:#000;font-family:'Liberation Mono',monospace;font-weight:bold;font-size:11px;letter-spacing:-0.6px;">194</div><div style="left:1289px;top:264px;height:15px;line-height:15px;white-space:pre;color:#000;font-family:'Liberation Mono',monospace;font-weight:bold;font-size:11px;letter-spacing:-0.6px;">x</div><svg style="left:1298px;top:263px" width="55" height="16"><polygon points="0.5,0.5 51.5,0.5 54.5,3.5 54.5,15.5 0.5,15.5" fill="#fcfcfc" stroke="#000" stroke-width="1"/><polyline points="0.5,0.5 8.0,8.0 0.5,15.5" fill="none" stroke="#000" stroke-width="1"/></svg><div style="left:1307px;top:264px;height:15px;line-height:16px;white-space:pre;color:#000;font-family:'Liberation Mono',monospace;font-weight:bold;font-size:11px;letter-spacing:-0.6px;">-271</div><div style="left:1289px;top:279px;height:15px;line-height:15px;white-space:pre;color:#000;font-family:'Liberation Mono',monospace;font-weight:bold;font-size:11px;letter-spacing:-0.6px;">y</div><svg style="left:1298px;top:278px" width="55" height="16"><polygon points="0.5,0.5 51.5,0.5 54.5,3.5 54.5,15.5 0.5,15.5" fill="#fcfcfc" stroke="#000" stroke-width="1"/><polyline points="0.5,0.5 8.0,8.0 0.5,15.5" fill="none" stroke="#000" stroke-width="1"/></svg><div style="left:1307px;top:279px;height:15px;line-height:16px;white-space:pre;color:#000;font-family:'Liberation Mono',monospace;font-weight:bold;font-size:11px;letter-spacing:-0.6px;">109</div><div style="left:1356px;top:234px;height:15px;line-height:15px;white-space:pre;color:#000;font-family:'Liberation Mono',monospace;font-weight:bold;font-size:11px;letter-spacing:-0.6px;">x</div><svg style="left:1365px;top:233px" width="54" height="16"><polygon points="0.5,0.5 50.5,0.5 53.5,3.5 53.5,15.5 0.5,15.5" fill="#fcfcfc" stroke="#000" stroke-width="1"/><polyline points="0.5,0.5 8.0,8.0 0.5,15.5" fill="none" stroke="#000" stroke-width="1"/></svg><div style="left:1374px;top:234px;height:15px;line-height:16px;white-space:pre;color:#000;font-family:'Liberation Mono',monospace;font-weight:bold;font-size:11px;letter-spacing:-0.6px;">161</div><div style="left:1356px;top:249px;height:15px;line-height:15px;white-space:pre;color:#000;font-family:'Liberation Mono',monospace;font-weight:bold;font-size:11px;letter-spacing:-0.6px;">y</div><svg style="left:1365px;top:248px" width="54" height="16"><polygon points="0.5,0.5 50.5,0.5 53.5,3.5 53.5,15.5 0.5,15.5" fill="#fcfcfc" stroke="#000" stroke-width="1"/><polyline points="0.5,0.5 8.0,8.0 0.5,15.5" fill="none" stroke="#000" stroke-width="1"/></svg><div style="left:1374px;top:249px;height:15px;line-height:16px;white-space:pre;color:#000;font-family:'Liberation Mono',monospace;font-weight:bold;font-size:11px;letter-spacing:-0.6px;">392</div><div style="left:1356px;top:264px;height:15px;line-height:15px;white-space:pre;color:#000;font-family:'Liberation Mono',monospace;font-weight:bold;font-size:11px;letter-spacing:-0.6px;">x</div><svg style="left:1365px;top:263px" width="54" height="16"><polygon points="0.5,0.5 50.5,0.5 53.5,3.5 53.5,15.5 0.5,15.5" fill="#fcfcfc" stroke="#000" stroke-width="1"/><polyline points="0.5,0.5 8.0,8.0 0.5,15.5" fill="none" stroke="#000" stroke-width="1"/></svg><div style="left:1374px;top:264px;height:15px;line-height:16px;white-space:pre;color:#000;font-family:'Liberation Mono',monospace;font-weight:bold;font-size:11px;letter-spacing:-0.6px;">-330</div><div style="left:1356px;top:279px;height:15px;line-height:15px;white-space:pre;color:#000;font-family:'Liberation Mono',monospace;font-weight:bold;font-size:11px;letter-spacing:-0.6px;">y</div><svg style="left:1365px;top:278px" width="54" height="16"><polygon points="0.5,0.5 50.5,0.5 53.5,3.5 53.5,15.5 0.5,15.5" fill="#fcfcfc" stroke="#000" stroke-width="1"/><polyline points="0.5,0.5 8.0,8.0 0.5,15.5" fill="none" stroke="#000" stroke-width="1"/></svg><div style="left:1374px;top:279px;height:15px;line-height:16px;white-space:pre;color:#000;font-family:'Liberation Mono',monospace;font-weight:bold;font-size:11px;letter-spacing:-0.6px;">253</div><div style="left:1419px;top:233px;width:31px;height:31px;background:#fcfcfc;border:1px solid #000;box-sizing:border-box"></div><svg style="left:1419px;top:233px" width="31" height="31"><path d="M3,3 L28,28 M28,3 L3,28" stroke="#f00" stroke-width="2"/></svg><svg style="left:1419px;top:263px" width="30" height="16"><polygon points="0.5,0.5 26.5,0.5 29.5,3.5 29.5,15.5 0.5,15.5" fill="#f8c8c8" stroke="#000" stroke-width="1"/><polyline points="0.5,0.5 8.0,8.0 0.5,15.5" fill="none" stroke="#000" stroke-width="1"/></svg><div style="left:1428px;top:264px;height:15px;line-height:16px;white-space:pre;color:#000;font-family:'Liberation Mono',monospace;font-weight:bold;font-size:11px;letter-spacing:-0.6px;">13</div><div style="left:1419px;top:278px;width:16px;height:16px;background:#fcfcfc;border:1px solid #000;box-sizing:border-box"></div><svg style="left:1434px;top:278px" width="16" height="16"><rect x="0.5" y="0.5" width="15" height="15" fill="#f00" stroke="#000"/><circle cx="8.0" cy="8.0" r="6.9" fill="#f00" stroke="#000" stroke-width="1"/></svg><svg style="left:1419px;top:293px" width="30" height="16"><polygon points="0.5,0.5 26.5,0.5 29.5,3.5 29.5,15.5 0.5,15.5" fill="#f00" stroke="#000" stroke-width="1"/><polyline points="0.5,0.5 8.0,8.0 0.5,15.5" fill="none" stroke="#fff" stroke-width="1"/></svg><div style="left:1428px;top:294px;height:15px;line-height:16px;white-space:pre;color:#fff;font-family:'Liberation Mono',monospace;font-weight:bold;font-size:11px;letter-spacing:-0.6px;">13</div><div style="left:1194px;top:308px;width:16px;height:16px;background:#c8c8f8;border:1px solid #000;box-sizing:border-box"></div><div style="left:1209px;top:308px;width:16px;height:16px;background:#c8c8f8;border:1px solid #000;box-sizing:border-box"></div><div style="left:1224px;top:308px;width:16px;height:16px;background:#c8c8f8;border:1px solid #000;box-sizing:border-box"></div><div style="left:1239px;top:308px;width:16px;height:16px;background:#c8c8f8;border:1px solid #000;box-sizing:border-box"></div><div style="left:1254px;top:308px;width:16px;height:16px;background:#c8c8f8;border:1px solid #000;box-sizing:border-box"></div><div style="position:absolute;left:1227px;top:311px;width:9px;height:9px;background:#f8f8f8;"></div><div style="left:1269px;top:308px;width:17px;height:16px;background:#fcfcfc;border:1px solid #000;box-sizing:border-box"></div><div style="left:1270px;top:309px;height:15px;line-height:15px;white-space:pre;color:#000;font-family:'Liberation Mono',monospace;font-weight:bold;font-size:11px;letter-spacing:-0.6px;">rn</div><div style="left:1285px;top:308px;width:14px;height:16px;background:#fcfcfc;border:1px solid #000;box-sizing:border-box"></div><div style="left:1288px;top:309px;height:15px;line-height:15px;white-space:pre;color:#000;font-family:'Liberation Mono',monospace;font-weight:bold;font-size:11px;letter-spacing:-0.6px;">t</div><svg style="left:1298px;top:308px" width="55" height="16"><polygon points="0.5,0.5 51.5,0.5 54.5,3.5 54.5,15.5 0.5,15.5" fill="#c8c8f8" stroke="#000" stroke-width="1"/><polyline points="0.5,0.5 8.0,8.0 0.5,15.5" fill="none" stroke="#000" stroke-width="1"/></svg><div style="left:1307px;top:309px;height:15px;line-height:16px;white-space:pre;color:#000;font-family:'Liberation Mono',monospace;font-weight:bold;font-size:11px;letter-spacing:-0.6px;">2034</div><div style="left:1194px;top:293px;width:17px;height:16px;background:#fcfcfc;border:1px solid #000;box-sizing:border-box"></div><svg style="left:1194px;top:293px" width="17" height="16"><path d="M2,2 L15,14 M15,2 L2,14" stroke="#000" stroke-width="1"/></svg><div style="left:1058px;top:333px;width:385px;height:76px;background:#fff;border:1px solid #000;box-sizing:border-box"></div><div style="left:1058px;top:333px;width:134px;height:16px;background:#f00;border:1px solid #000;box-sizing:border-box"></div><div style="left:1058px;top:348px;width:134px;height:16px;background:#0f0;border:1px solid #000;box-sizing:border-box"></div><div style="left:1058px;top:363px;width:134px;height:16px;background:#00f;border:1px solid #000;box-sizing:border-box"></div><div style="left:1058px;top:378px;width:134px;height:16px;background:#fcfcfc;border:1px solid #000;box-sizing:border-box"></div><div style="position:absolute;left:1178px;top:334px;width:3px;height:13px;background:#fff;"></div><div style="position:absolute;left:1142px;top:349px;width:3px;height:13px;background:#fff;"></div><div style="position:absolute;left:1077px;top:364px;width:3px;height:13px;background:#fff;"></div><div style="position:absolute;left:1100px;top:379px;width:3px;height:13px;background:#000;"></div><div style="left:1071px;top:380px;height:15px;line-height:15px;white-space:pre;color:#000;font-family:'Liberation Mono',monospace;font-weight:bold;font-size:11px;letter-spacing:-0.6px;">alpha</div><div style="left:1058px;top:393px;width:16px;height:16px;background:#fcfcfc;border:1px solid #000;box-sizing:border-box"></div><div style="left:1059px;top:394px;height:15px;line-height:15px;white-space:pre;color:#000;font-family:'Liberation Mono',monospace;font-weight:bold;font-size:11px;letter-spacing:-0.6px;">rn</div><svg style="left:1058px;top:393px" width="16" height="16"><path d="M2,2 L14,14 M14,2 L2,14" stroke="#f00" stroke-width="1"/></svg><div style="left:1073px;top:393px;width:15px;height:16px;background:#fcfcfc;border:1px solid #000;box-sizing:border-box"></div><div style="left:1076px;top:394px;height:15px;line-height:15px;white-space:pre;color:#000;font-family:'Liberation Mono',monospace;font-weight:bold;font-size:11px;letter-spacing:-0.6px;">t</div><svg style="left:1087px;top:393px" width="54" height="16"><polygon points="0.5,0.5 50.5,0.5 53.5,3.5 53.5,15.5 0.5,15.5" fill="#d8d8d8" stroke="#000" stroke-width="1"/><polyline points="0.5,0.5 8.0,8.0 0.5,15.5" fill="none" stroke="#000" stroke-width="1"/></svg><div style="left:1096px;top:394px;height:15px;line-height:16px;white-space:pre;color:#000;font-family:'Liberation Mono',monospace;font-weight:bold;font-size:11px;letter-spacing:-0.6px;">2124</div><div style="left:1140px;top:393px;width:24px;height:16px;background:#fcfcfc;border:1px solid #000;box-sizing:border-box"></div><div style="left:1147px;top:394px;height:15px;line-height:15px;white-space:pre;color:#000;font-family:'Liberation Mono',monospace;font-weight:bold;font-size:11px;letter-spacing:-0.6px;">fu</div><svg style="left:1163px;top:393px" width="29" height="16"><polygon points="0.5,0.5 25.5,0.5 28.5,3.5 28.5,15.5 0.5,15.5" fill="#d8d8d8" stroke="#000" stroke-width="1"/><polyline points="0.5,0.5 8.0,8.0 0.5,15.5" fill="none" stroke="#000" stroke-width="1"/></svg><div style="left:1172px;top:394px;height:15px;line-height:16px;white-space:pre;color:#000;font-family:'Liberation Mono',monospace;font-weight:bold;font-size:11px;letter-spacing:-0.6px;">0</div><div style="position:absolute;left:1194px;top:333px;width:16px;height:45px;background:#e8a020;"></div><div style="left:1221px;top:334px;height:15px;line-height:15px;white-space:pre;color:#000;font-family:'Liberation Mono',monospace;font-weight:bold;font-size:11px;letter-spacing:-0.6px;">x</div><svg style="left:1230px;top:333px" width="55" height="16"><polygon points="0.5,0.5 51.5,0.5 54.5,3.5 54.5,15.5 0.5,15.5" fill="#fcfcfc" stroke="#000" stroke-width="1"/><polyline points="0.5,0.5 8.0,8.0 0.5,15.5" fill="none" stroke="#000" stroke-width="1"/></svg><div style="left:1239px;top:334px;height:15px;line-height:16px;white-space:pre;color:#000;font-family:'Liberation Mono',monospace;font-weight:bold;font-size:11px;letter-spacing:-0.6px;">123</div><div style="left:1221px;top:349px;height:15px;line-height:15px;white-space:pre;color:#000;font-family:'Liberation Mono',monospace;font-weight:bold;font-size:11px;letter-spacing:-0.6px;">y</div><svg style="left:1230px;top:348px" width="55" height="16"><polygon points="0.5,0.5 51.5,0.5 54.5,3.5 54.5,15.5 0.5,15.5" fill="#fcfcfc" stroke="#000" stroke-width="1"/><polyline points="0.5,0.5 8.0,8.0 0.5,15.5" fill="none" stroke="#000" stroke-width="1"/></svg><div style="left:1239px;top:349px;height:15px;line-height:16px;white-space:pre;color:#000;font-family:'Liberation Mono',monospace;font-weight:bold;font-size:11px;letter-spacing:-0.6px;">70</div><div style="left:1221px;top:364px;height:15px;line-height:15px;white-space:pre;color:#000;font-family:'Liberation Mono',monospace;font-weight:bold;font-size:11px;letter-spacing:-0.6px;">x</div><svg style="left:1230px;top:363px" width="55" height="16"><polygon points="0.5,0.5 51.5,0.5 54.5,3.5 54.5,15.5 0.5,15.5" fill="#fcfcfc" stroke="#000" stroke-width="1"/><polyline points="0.5,0.5 8.0,8.0 0.5,15.5" fill="none" stroke="#000" stroke-width="1"/></svg><div style="left:1239px;top:364px;height:15px;line-height:16px;white-space:pre;color:#000;font-family:'Liberation Mono',monospace;font-weight:bold;font-size:11px;letter-spacing:-0.6px;">268</div><div style="left:1221px;top:379px;height:15px;line-height:15px;white-space:pre;color:#000;font-family:'Liberation Mono',monospace;font-weight:bold;font-size:11px;letter-spacing:-0.6px;">y</div><svg style="left:1230px;top:378px" width="55" height="16"><polygon points="0.5,0.5 51.5,0.5 54.5,3.5 54.5,15.5 0.5,15.5" fill="#fcfcfc" stroke="#000" stroke-width="1"/><polyline points="0.5,0.5 8.0,8.0 0.5,15.5" fill="none" stroke="#000" stroke-width="1"/></svg><div style="left:1239px;top:379px;height:15px;line-height:16px;white-space:pre;color:#000;font-family:'Liberation Mono',monospace;font-weight:bold;font-size:11px;letter-spacing:-0.6px;">-96</div><div style="left:1289px;top:334px;height:15px;line-height:15px;white-space:pre;color:#000;font-family:'Liberation Mono',monospace;font-weight:bold;font-size:11px;letter-spacing:-0.6px;">x</div><svg style="left:1298px;top:333px" width="55" height="16"><polygon points="0.5,0.5 51.5,0.5 54.5,3.5 54.5,15.5 0.5,15.5" fill="#fcfcfc" stroke="#000" stroke-width="1"/><polyline points="0.5,0.5 8.0,8.0 0.5,15.5" fill="none" stroke="#000" stroke-width="1"/></svg><div style="left:1307px;top:334px;height:15px;line-height:16px;white-space:pre;color:#000;font-family:'Liberation Mono',monospace;font-weight:bold;font-size:11px;letter-spacing:-0.6px;">-70</div><div style="left:1289px;top:349px;height:15px;line-height:15px;white-space:pre;color:#000;font-family:'Liberation Mono',monospace;font-weight:bold;font-size:11px;letter-spacing:-0.6px;">y</div><svg style="left:1298px;top:348px" width="55" height="16"><polygon points="0.5,0.5 51.5,0.5 54.5,3.5 54.5,15.5 0.5,15.5" fill="#fcfcfc" stroke="#000" stroke-width="1"/><polyline points="0.5,0.5 8.0,8.0 0.5,15.5" fill="none" stroke="#000" stroke-width="1"/></svg><div style="left:1307px;top:349px;height:15px;line-height:16px;white-space:pre;color:#000;font-family:'Liberation Mono',monospace;font-weight:bold;font-size:11px;letter-spacing:-0.6px;">-247</div><div style="left:1289px;top:364px;height:15px;line-height:15px;white-space:pre;color:#000;font-family:'Liberation Mono',monospace;font-weight:bold;font-size:11px;letter-spacing:-0.6px;">x</div><svg style="left:1298px;top:363px" width="55" height="16"><polygon points="0.5,0.5 51.5,0.5 54.5,3.5 54.5,15.5 0.5,15.5" fill="#fcfcfc" stroke="#000" stroke-width="1"/><polyline points="0.5,0.5 8.0,8.0 0.5,15.5" fill="none" stroke="#000" stroke-width="1"/></svg><div style="left:1307px;top:364px;height:15px;line-height:16px;white-space:pre;color:#000;font-family:'Liberation Mono',monospace;font-weight:bold;font-size:11px;letter-spacing:-0.6px;">200</div><div style="left:1289px;top:379px;height:15px;line-height:15px;white-space:pre;color:#000;font-family:'Liberation Mono',monospace;font-weight:bold;font-size:11px;letter-spacing:-0.6px;">y</div><svg style="left:1298px;top:378px" width="55" height="16"><polygon points="0.5,0.5 51.5,0.5 54.5,3.5 54.5,15.5 0.5,15.5" fill="#fcfcfc" stroke="#000" stroke-width="1"/><polyline points="0.5,0.5 8.0,8.0 0.5,15.5" fill="none" stroke="#000" stroke-width="1"/></svg><div style="left:1307px;top:379px;height:15px;line-height:16px;white-space:pre;color:#000;font-family:'Liberation Mono',monospace;font-weight:bold;font-size:11px;letter-spacing:-0.6px;">-180</div><div style="left:1356px;top:334px;height:15px;line-height:15px;white-space:pre;color:#000;font-family:'Liberation Mono',monospace;font-weight:bold;font-size:11px;letter-spacing:-0.6px;">x</div><svg style="left:1365px;top:333px" width="54" height="16"><polygon points="0.5,0.5 50.5,0.5 53.5,3.5 53.5,15.5 0.5,15.5" fill="#fcfcfc" stroke="#000" stroke-width="1"/><polyline points="0.5,0.5 8.0,8.0 0.5,15.5" fill="none" stroke="#000" stroke-width="1"/></svg><div style="left:1374px;top:334px;height:15px;line-height:16px;white-space:pre;color:#000;font-family:'Liberation Mono',monospace;font-weight:bold;font-size:11px;letter-spacing:-0.6px;">126</div><div style="left:1356px;top:349px;height:15px;line-height:15px;white-space:pre;color:#000;font-family:'Liberation Mono',monospace;font-weight:bold;font-size:11px;letter-spacing:-0.6px;">y</div><svg style="left:1365px;top:348px" width="54" height="16"><polygon points="0.5,0.5 50.5,0.5 53.5,3.5 53.5,15.5 0.5,15.5" fill="#fcfcfc" stroke="#000" stroke-width="1"/><polyline points="0.5,0.5 8.0,8.0 0.5,15.5" fill="none" stroke="#000" stroke-width="1"/></svg><div style="left:1374px;top:349px;height:15px;line-height:16px;white-space:pre;color:#000;font-family:'Liberation Mono',monospace;font-weight:bold;font-size:11px;letter-spacing:-0.6px;">31</div><div style="left:1356px;top:364px;height:15px;line-height:15px;white-space:pre;color:#000;font-family:'Liberation Mono',monospace;font-weight:bold;font-size:11px;letter-spacing:-0.6px;">x</div><svg style="left:1365px;top:363px" width="54" height="16"><polygon points="0.5,0.5 50.5,0.5 53.5,3.5 53.5,15.5 0.5,15.5" fill="#fcfcfc" stroke="#000" stroke-width="1"/><polyline points="0.5,0.5 8.0,8.0 0.5,15.5" fill="none" stroke="#000" stroke-width="1"/></svg><div style="left:1374px;top:364px;height:15px;line-height:16px;white-space:pre;color:#000;font-family:'Liberation Mono',monospace;font-weight:bold;font-size:11px;letter-spacing:-0.6px;">-237</div><div style="left:1356px;top:379px;height:15px;line-height:15px;white-space:pre;color:#000;font-family:'Liberation Mono',monospace;font-weight:bold;font-size:11px;letter-spacing:-0.6px;">y</div><svg style="left:1365px;top:378px" width="54" height="16"><polygon points="0.5,0.5 50.5,0.5 53.5,3.5 53.5,15.5 0.5,15.5" fill="#fcfcfc" stroke="#000" stroke-width="1"/><polyline points="0.5,0.5 8.0,8.0 0.5,15.5" fill="none" stroke="#000" stroke-width="1"/></svg><div style="left:1374px;top:379px;height:15px;line-height:16px;white-space:pre;color:#000;font-family:'Liberation Mono',monospace;font-weight:bold;font-size:11px;letter-spacing:-0.6px;">198</div><div style="left:1419px;top:333px;width:31px;height:31px;background:#fcfcfc;border:1px solid #000;box-sizing:border-box"></div><svg style="left:1419px;top:333px" width="31" height="31"><path d="M3,3 L28,28 M28,3 L3,28" stroke="#f00" stroke-width="2"/></svg><svg style="left:1419px;top:363px" width="30" height="16"><polygon points="0.5,0.5 26.5,0.5 29.5,3.5 29.5,15.5 0.5,15.5" fill="#f8c8c8" stroke="#000" stroke-width="1"/><polyline points="0.5,0.5 8.0,8.0 0.5,15.5" fill="none" stroke="#000" stroke-width="1"/></svg><div style="left:1428px;top:364px;height:15px;line-height:16px;white-space:pre;color:#000;font-family:'Liberation Mono',monospace;font-weight:bold;font-size:11px;letter-spacing:-0.6px;">13</div><div style="left:1419px;top:378px;width:16px;height:16px;background:#fcfcfc;border:1px solid #000;box-sizing:border-box"></div><svg style="left:1434px;top:378px" width="16" height="16"><rect x="0.5" y="0.5" width="15" height="15" fill="#f00" stroke="#000"/><circle cx="8.0" cy="8.0" r="6.9" fill="#f00" stroke="#000" stroke-width="1"/></svg><svg style="left:1419px;top:393px" width="30" height="16"><polygon points="0.5,0.5 26.5,0.5 29.5,3.5 29.5,15.5 0.5,15.5" fill="#f00" stroke="#000" stroke-width="1"/><polyline points="0.5,0.5 8.0,8.0 0.5,15.5" fill="none" stroke="#fff" stroke-width="1"/></svg><div style="left:1428px;top:394px;height:15px;line-height:16px;white-space:pre;color:#fff;font-family:'Liberation Mono',monospace;font-weight:bold;font-size:11px;letter-spacing:-0.6px;">13</div><div style="left:1194px;top:393px;width:16px;height:16px;background:#c8c8f8;border:1px solid #000;box-sizing:border-box"></div><div style="left:1209px;top:393px;width:16px;height:16px;background:#c8c8f8;border:1px solid #000;box-sizing:border-box"></div><div style="left:1224px;top:393px;width:16px;height:16px;background:#c8c8f8;border:1px solid #000;box-sizing:border-box"></div><div style="left:1239px;top:393px;width:16px;height:16px;background:#c8c8f8;border:1px solid #000;box-sizing:border-box"></div><div style="left:1254px;top:393px;width:16px;height:16px;background:#c8c8f8;border:1px solid #000;box-sizing:border-box"></div><div style="position:absolute;left:1227px;top:396px;width:9px;height:9px;background:#f8f8f8;"></div><div style="left:1269px;top:393px;width:17px;height:16px;background:#fcfcfc;border:1px solid #000;box-sizing:border-box"></div><div style="left:1270px;top:394px;height:15px;line-height:15px;white-space:pre;color:#000;font-family:'Liberation Mono',monospace;font-weight:bold;font-size:11px;letter-spacing:-0.6px;">rn</div><div style="left:1285px;top:393px;width:14px;height:16px;background:#fcfcfc;border:1px solid #000;box-sizing:border-box"></div><div style="left:1288px;top:394px;height:15px;line-height:15px;white-space:pre;color:#000;font-family:'Liberation Mono',monospace;font-weight:bold;font-size:11px;letter-spacing:-0.6px;">t</div><svg style="left:1298px;top:393px" width="55" height="16"><polygon points="0.5,0.5 51.5,0.5 54.5,3.5 54.5,15.5 0.5,15.5" fill="#c8c8f8" stroke="#000" stroke-width="1"/><polyline points="0.5,0.5 8.0,8.0 0.5,15.5" fill="none" stroke="#000" stroke-width="1"/></svg><div style="left:1307px;top:394px;height:15px;line-height:16px;white-space:pre;color:#000;font-family:'Liberation Mono',monospace;font-weight:bold;font-size:11px;letter-spacing:-0.6px;">2892</div><div style="left:1365px;top:393px;width:16px;height:16px;background:#c4f6f6;border:1px solid #000;box-sizing:border-box"></div><div style="left:1380px;top:393px;width:39px;height:16px;background:#fcfcfc;border:1px solid #000;box-sizing:border-box"></div><div style="left:1385px;top:394px;height:15px;line-height:15px;white-space:pre;color:#000;font-family:'Liberation Mono',monospace;font-weight:bold;font-size:11px;letter-spacing:-0.6px;">osc</div><div style="left:1058px;top:412px;width:385px;height:76px;background:#fff;border:1px solid #000;box-sizing:border-box"></div><div style="left:1058px;top:412px;width:134px;height:16px;background:#f00;border:1px solid #000;box-sizing:border-box"></div><div style="left:1058px;top:427px;width:134px;height:16px;background:#0f0;border:1px solid #000;box-sizing:border-box"></div><div style="left:1058px;top:442px;width:134px;height:16px;background:#00f;border:1px solid #000;box-sizing:border-box"></div><div style="left:1058px;top:457px;width:134px;height:16px;background:#fcfcfc;border:1px solid #000;box-sizing:border-box"></div><div style="position:absolute;left:1129px;top:413px;width:3px;height:13px;background:#fff;"></div><div style="position:absolute;left:1130px;top:428px;width:3px;height:13px;background:#fff;"></div><div style="position:absolute;left:1091px;top:443px;width:3px;height:13px;background:#fff;"></div><div style="position:absolute;left:1112px;top:458px;width:3px;height:13px;background:#000;"></div><div style="left:1071px;top:459px;height:15px;line-height:15px;white-space:pre;color:#000;font-family:'Liberation Mono',monospace;font-weight:bold;font-size:11px;letter-spacing:-0.6px;">alpha</div><div style="left:1058px;top:472px;width:16px;height:16px;background:#fcfcfc;border:1px solid #000;box-sizing:border-box"></div><div style="left:1059px;top:473px;height:15px;line-height:15px;white-space:pre;color:#000;font-family:'Liberation Mono',monospace;font-weight:bold;font-size:11px;letter-spacing:-0.6px;">rn</div><svg style="left:1058px;top:472px" width="16" height="16"><path d="M2,2 L14,14 M14,2 L2,14" stroke="#f00" stroke-width="1"/></svg><div style="left:1073px;top:472px;width:15px;height:16px;background:#fcfcfc;border:1px solid #000;box-sizing:border-box"></div><div style="left:1076px;top:473px;height:15px;line-height:15px;white-space:pre;color:#000;font-family:'Liberation Mono',monospace;font-weight:bold;font-size:11px;letter-spacing:-0.6px;">t</div><svg style="left:1087px;top:472px" width="54" height="16"><polygon points="0.5,0.5 50.5,0.5 53.5,3.5 53.5,15.5 0.5,15.5" fill="#d8d8d8" stroke="#000" stroke-width="1"/><polyline points="0.5,0.5 8.0,8.0 0.5,15.5" fill="none" stroke="#000" stroke-width="1"/></svg><div style="left:1096px;top:473px;height:15px;line-height:16px;white-space:pre;color:#000;font-family:'Liberation Mono',monospace;font-weight:bold;font-size:11px;letter-spacing:-0.6px;">3333</div><div style="left:1140px;top:472px;width:24px;height:16px;background:#fcfcfc;border:1px solid #000;box-sizing:border-box"></div><div style="left:1147px;top:473px;height:15px;line-height:15px;white-space:pre;color:#000;font-family:'Liberation Mono',monospace;font-weight:bold;font-size:11px;letter-spacing:-0.6px;">fu</div><svg style="left:1163px;top:472px" width="29" height="16"><polygon points="0.5,0.5 25.5,0.5 28.5,3.5 28.5,15.5 0.5,15.5" fill="#d8d8d8" stroke="#000" stroke-width="1"/><polyline points="0.5,0.5 8.0,8.0 0.5,15.5" fill="none" stroke="#000" stroke-width="1"/></svg><div style="left:1172px;top:473px;height:15px;line-height:16px;white-space:pre;color:#000;font-family:'Liberation Mono',monospace;font-weight:bold;font-size:11px;letter-spacing:-0.6px;">0</div><div style="position:absolute;left:1194px;top:412px;width:16px;height:45px;background:#8a8a3a;"></div><div style="left:1221px;top:413px;height:15px;line-height:15px;white-space:pre;color:#000;font-family:'Liberation Mono',monospace;font-weight:bold;font-size:11px;letter-spacing:-0.6px;">x</div><svg style="left:1230px;top:412px" width="55" height="16"><polygon points="0.5,0.5 51.5,0.5 54.5,3.5 54.5,15.5 0.5,15.5" fill="#fcfcfc" stroke="#000" stroke-width="1"/><polyline points="0.5,0.5 8.0,8.0 0.5,15.5" fill="none" stroke="#000" stroke-width="1"/></svg><div style="left:1239px;top:413px;height:15px;line-height:16px;white-space:pre;color:#000;font-family:'Liberation Mono',monospace;font-weight:bold;font-size:11px;letter-spacing:-0.6px;">73</div><div style="left:1221px;top:428px;height:15px;line-height:15px;white-space:pre;color:#000;font-family:'Liberation Mono',monospace;font-weight:bold;font-size:11px;letter-spacing:-0.6px;">y</div><svg style="left:1230px;top:427px" width="55" height="16"><polygon points="0.5,0.5 51.5,0.5 54.5,3.5 54.5,15.5 0.5,15.5" fill="#fcfcfc" stroke="#000" stroke-width="1"/><polyline points="0.5,0.5 8.0,8.0 0.5,15.5" fill="none" stroke="#000" stroke-width="1"/></svg><div style="left:1239px;top:428px;height:15px;line-height:16px;white-space:pre;color:#000;font-family:'Liberation Mono',monospace;font-weight:bold;font-size:11px;letter-spacing:-0.6px;">320</div><div style="left:1221px;top:443px;height:15px;line-height:15px;white-space:pre;color:#000;font-family:'Liberation Mono',monospace;font-weight:bold;font-size:11px;letter-spacing:-0.6px;">x</div><svg style="left:1230px;top:442px" width="55" height="16"><polygon points="0.5,0.5 51.5,0.5 54.5,3.5 54.5,15.5 0.5,15.5" fill="#fcfcfc" stroke="#000" stroke-width="1"/><polyline points="0.5,0.5 8.0,8.0 0.5,15.5" fill="none" stroke="#000" stroke-width="1"/></svg><div style="left:1239px;top:443px;height:15px;line-height:16px;white-space:pre;color:#000;font-family:'Liberation Mono',monospace;font-weight:bold;font-size:11px;letter-spacing:-0.6px;">-84</div><div style="left:1221px;top:458px;height:15px;line-height:15px;white-space:pre;color:#000;font-family:'Liberation Mono',monospace;font-weight:bold;font-size:11px;letter-spacing:-0.6px;">y</div><svg style="left:1230px;top:457px" width="55" height="16"><polygon points="0.5,0.5 51.5,0.5 54.5,3.5 54.5,15.5 0.5,15.5" fill="#fcfcfc" stroke="#000" stroke-width="1"/><polyline points="0.5,0.5 8.0,8.0 0.5,15.5" fill="none" stroke="#000" stroke-width="1"/></svg><div style="left:1239px;top:458px;height:15px;line-height:16px;white-space:pre;color:#000;font-family:'Liberation Mono',monospace;font-weight:bold;font-size:11px;letter-spacing:-0.6px;">-121</div><div style="left:1289px;top:413px;height:15px;line-height:15px;white-space:pre;color:#000;font-family:'Liberation Mono',monospace;font-weight:bold;font-size:11px;letter-spacing:-0.6px;">x</div><svg style="left:1298px;top:412px" width="55" height="16"><polygon points="0.5,0.5 51.5,0.5 54.5,3.5 54.5,15.5 0.5,15.5" fill="#fcfcfc" stroke="#000" stroke-width="1"/><polyline points="0.5,0.5 8.0,8.0 0.5,15.5" fill="none" stroke="#000" stroke-width="1"/></svg><div style="left:1307px;top:413px;height:15px;line-height:16px;white-space:pre;color:#000;font-family:'Liberation Mono',monospace;font-weight:bold;font-size:11px;letter-spacing:-0.6px;">-296</div><div style="left:1289px;top:428px;height:15px;line-height:15px;white-space:pre;color:#000;font-family:'Liberation Mono',monospace;font-weight:bold;font-size:11px;letter-spacing:-0.6px;">y</div><svg style="left:1298px;top:427px" width="55" height="16"><polygon points="0.5,0.5 51.5,0.5 54.5,3.5 54.5,15.5 0.5,15.5" fill="#fcfcfc" stroke="#000" stroke-width="1"/><polyline points="0.5,0.5 8.0,8.0 0.5,15.5" fill="none" stroke="#000" stroke-width="1"/></svg><div style="left:1307px;top:428px;height:15px;line-height:16px;white-space:pre;color:#000;font-family:'Liberation Mono',monospace;font-weight:bold;font-size:11px;letter-spacing:-0.6px;">-182</div><div style="left:1289px;top:443px;height:15px;line-height:15px;white-space:pre;color:#000;font-family:'Liberation Mono',monospace;font-weight:bold;font-size:11px;letter-spacing:-0.6px;">x</div><svg style="left:1298px;top:442px" width="55" height="16"><polygon points="0.5,0.5 51.5,0.5 54.5,3.5 54.5,15.5 0.5,15.5" fill="#fcfcfc" stroke="#000" stroke-width="1"/><polyline points="0.5,0.5 8.0,8.0 0.5,15.5" fill="none" stroke="#000" stroke-width="1"/></svg><div style="left:1307px;top:443px;height:15px;line-height:16px;white-space:pre;color:#000;font-family:'Liberation Mono',monospace;font-weight:bold;font-size:11px;letter-spacing:-0.6px;">-261</div><div style="left:1289px;top:458px;height:15px;line-height:15px;white-space:pre;color:#000;font-family:'Liberation Mono',monospace;font-weight:bold;font-size:11px;letter-spacing:-0.6px;">y</div><svg style="left:1298px;top:457px" width="55" height="16"><polygon points="0.5,0.5 51.5,0.5 54.5,3.5 54.5,15.5 0.5,15.5" fill="#fcfcfc" stroke="#000" stroke-width="1"/><polyline points="0.5,0.5 8.0,8.0 0.5,15.5" fill="none" stroke="#000" stroke-width="1"/></svg><div style="left:1307px;top:458px;height:15px;line-height:16px;white-space:pre;color:#000;font-family:'Liberation Mono',monospace;font-weight:bold;font-size:11px;letter-spacing:-0.6px;">295</div><div style="left:1356px;top:413px;height:15px;line-height:15px;white-space:pre;color:#000;font-family:'Liberation Mono',monospace;font-weight:bold;font-size:11px;letter-spacing:-0.6px;">x</div><svg style="left:1365px;top:412px" width="54" height="16"><polygon points="0.5,0.5 50.5,0.5 53.5,3.5 53.5,15.5 0.5,15.5" fill="#fcfcfc" stroke="#000" stroke-width="1"/><polyline points="0.5,0.5 8.0,8.0 0.5,15.5" fill="none" stroke="#000" stroke-width="1"/></svg><div style="left:1374px;top:413px;height:15px;line-height:16px;white-space:pre;color:#000;font-family:'Liberation Mono',monospace;font-weight:bold;font-size:11px;letter-spacing:-0.6px;">-249</div><div style="left:1356px;top:428px;height:15px;line-height:15px;white-space:pre;color:#000;font-family:'Liberation Mono',monospace;font-weight:bold;font-size:11px;letter-spacing:-0.6px;">y</div><svg style="left:1365px;top:427px" width="54" height="16"><polygon points="0.5,0.5 50.5,0.5 53.5,3.5 53.5,15.5 0.5,15.5" fill="#fcfcfc" stroke="#000" stroke-width="1"/><polyline points="0.5,0.5 8.0,8.0 0.5,15.5" fill="none" stroke="#000" stroke-width="1"/></svg><div style="left:1374px;top:428px;height:15px;line-height:16px;white-space:pre;color:#000;font-family:'Liberation Mono',monospace;font-weight:bold;font-size:11px;letter-spacing:-0.6px;">-275</div><div style="left:1356px;top:443px;height:15px;line-height:15px;white-space:pre;color:#000;font-family:'Liberation Mono',monospace;font-weight:bold;font-size:11px;letter-spacing:-0.6px;">x</div><svg style="left:1365px;top:442px" width="54" height="16"><polygon points="0.5,0.5 50.5,0.5 53.5,3.5 53.5,15.5 0.5,15.5" fill="#fcfcfc" stroke="#000" stroke-width="1"/><polyline points="0.5,0.5 8.0,8.0 0.5,15.5" fill="none" stroke="#000" stroke-width="1"/></svg><div style="left:1374px;top:443px;height:15px;line-height:16px;white-space:pre;color:#000;font-family:'Liberation Mono',monospace;font-weight:bold;font-size:11px;letter-spacing:-0.6px;">-232</div><div style="left:1356px;top:458px;height:15px;line-height:15px;white-space:pre;color:#000;font-family:'Liberation Mono',monospace;font-weight:bold;font-size:11px;letter-spacing:-0.6px;">y</div><svg style="left:1365px;top:457px" width="54" height="16"><polygon points="0.5,0.5 50.5,0.5 53.5,3.5 53.5,15.5 0.5,15.5" fill="#fcfcfc" stroke="#000" stroke-width="1"/><polyline points="0.5,0.5 8.0,8.0 0.5,15.5" fill="none" stroke="#000" stroke-width="1"/></svg><div style="left:1374px;top:458px;height:15px;line-height:16px;white-space:pre;color:#000;font-family:'Liberation Mono',monospace;font-weight:bold;font-size:11px;letter-spacing:-0.6px;">193</div><div style="left:1419px;top:412px;width:31px;height:31px;background:#fcfcfc;border:1px solid #000;box-sizing:border-box"></div><svg style="left:1419px;top:412px" width="31" height="31"><path d="M3,3 L28,28 M28,3 L3,28" stroke="#f00" stroke-width="2"/></svg><svg style="left:1419px;top:442px" width="30" height="16"><polygon points="0.5,0.5 26.5,0.5 29.5,3.5 29.5,15.5 0.5,15.5" fill="#f8c8c8" stroke="#000" stroke-width="1"/><polyline points="0.5,0.5 8.0,8.0 0.5,15.5" fill="none" stroke="#000" stroke-width="1"/></svg><div style="left:1428px;top:443px;height:15px;line-height:16px;white-space:pre;color:#000;font-family:'Liberation Mono',monospace;font-weight:bold;font-size:11px;letter-spacing:-0.6px;">13</div><div style="left:1419px;top:457px;width:16px;height:16px;background:#fcfcfc;border:1px solid #000;box-sizing:border-box"></div><svg style="left:1434px;top:457px" width="16" height="16"><rect x="0.5" y="0.5" width="15" height="15" fill="#f00" stroke="#000"/><circle cx="8.0" cy="8.0" r="6.9" fill="#f00" stroke="#000" stroke-width="1"/></svg><svg style="left:1419px;top:472px" width="30" height="16"><polygon points="0.5,0.5 26.5,0.5 29.5,3.5 29.5,15.5 0.5,15.5" fill="#f00" stroke="#000" stroke-width="1"/><polyline points="0.5,0.5 8.0,8.0 0.5,15.5" fill="none" stroke="#fff" stroke-width="1"/></svg><div style="left:1428px;top:473px;height:15px;line-height:16px;white-space:pre;color:#fff;font-family:'Liberation Mono',monospace;font-weight:bold;font-size:11px;letter-spacing:-0.6px;">13</div><div style="left:1194px;top:472px;width:16px;height:16px;background:#c8c8f8;border:1px solid #000;box-sizing:border-box"></div><div style="left:1209px;top:472px;width:16px;height:16px;background:#c8c8f8;border:1px solid #000;box-sizing:border-box"></div><div style="left:1224px;top:472px;width:16px;height:16px;background:#c8c8f8;border:1px solid #000;box-sizing:border-box"></div><div style="left:1239px;top:472px;width:16px;height:16px;background:#c8c8f8;border:1px solid #000;box-sizing:border-box"></div><div style="left:1254px;top:472px;width:16px;height:16px;background:#c8c8f8;border:1px solid #000;box-sizing:border-box"></div><div style="position:absolute;left:1227px;top:475px;width:9px;height:9px;background:#f8f8f8;"></div><div style="left:1269px;top:472px;width:17px;height:16px;background:#fcfcfc;border:1px solid #000;box-sizing:border-box"></div><div style="left:1270px;top:473px;height:15px;line-height:15px;white-space:pre;color:#000;font-family:'Liberation Mono',monospace;font-weight:bold;font-size:11px;letter-spacing:-0.6px;">rn</div><div style="left:1285px;top:472px;width:14px;height:16px;background:#fcfcfc;border:1px solid #000;box-sizing:border-box"></div><div style="left:1288px;top:473px;height:15px;line-height:15px;white-space:pre;color:#000;font-family:'Liberation Mono',monospace;font-weight:bold;font-size:11px;letter-spacing:-0.6px;">t</div><svg style="left:1298px;top:472px" width="55" height="16"><polygon points="0.5,0.5 51.5,0.5 54.5,3.5 54.5,15.5 0.5,15.5" fill="#c8c8f8" stroke="#000" stroke-width="1"/><polyline points="0.5,0.5 8.0,8.0 0.5,15.5" fill="none" stroke="#000" stroke-width="1"/></svg><div style="left:1307px;top:473px;height:15px;line-height:16px;white-space:pre;color:#000;font-family:'Liberation Mono',monospace;font-weight:bold;font-size:11px;letter-spacing:-0.6px;">1311</div><div style="left:1365px;top:472px;width:16px;height:16px;background:#c4f6f6;border:1px solid #000;box-sizing:border-box"></div><div style="left:1380px;top:472px;width:39px;height:16px;background:#fcfcfc;border:1px solid #000;box-sizing:border-box"></div><div style="left:1385px;top:473px;height:15px;line-height:15px;white-space:pre;color:#000;font-family:'Liberation Mono',monospace;font-weight:bold;font-size:11px;letter-spacing:-0.6px;">osc</div><div style="left:1058px;top:491px;width:385px;height:76px;background:#fff;border:1px solid #000;box-sizing:border-box"></div><div style="left:1058px;top:491px;width:134px;height:16px;background:#f00;border:1px solid #000;box-sizing:border-box"></div><div style="left:1058px;top:506px;width:134px;height:16px;background:#0f0;border:1px solid #000;box-sizing:border-box"></div><div style="left:1058px;top:521px;width:134px;height:16px;background:#00f;border:1px solid #000;box-sizing:border-box"></div><div style="left:1058px;top:536px;width:134px;height:16px;background:#fcfcfc;border:1px solid #000;box-sizing:border-box"></div><div style="position:absolute;left:1065px;top:492px;width:3px;height:13px;background:#fff;"></div><div style="position:absolute;left:1137px;top:507px;width:3px;height:13px;background:#fff;"></div><div style="position:absolute;left:1121px;top:522px;width:3px;height:13px;background:#fff;"></div><div style="position:absolute;left:1112px;top:537px;width:3px;height:13px;background:#000;"></div><div style="left:1071px;top:538px;height:15px;line-height:15px;white-space:pre;color:#000;font-family:'Liberation Mono',monospace;font-weight:bold;font-size:11px;letter-spacing:-0.6px;">alpha</div><div style="left:1058px;top:551px;width:16px;height:16px;background:#fcfcfc;border:1px solid #000;box-sizing:border-box"></div><div style="left:1059px;top:552px;height:15px;line-height:15px;white-space:pre;color:#000;font-family:'Liberation Mono',monospace;font-weight:bold;font-size:11px;letter-spacing:-0.6px;">rn</div><svg style="left:1058px;top:551px" width="16" height="16"><path d="M2,2 L14,14 M14,2 L2,14" stroke="#f00" stroke-width="1"/></svg><div style="left:1073px;top:551px;width:15px;height:16px;background:#fcfcfc;border:1px solid #000;box-sizing:border-box"></div><div style="left:1076px;top:552px;height:15px;line-height:15px;white-space:pre;color:#000;font-family:'Liberation Mono',monospace;font-weight:bold;font-size:11px;letter-spacing:-0.6px;">t</div><svg style="left:1087px;top:551px" width="54" height="16"><polygon points="0.5,0.5 50.5,0.5 53.5,3.5 53.5,15.5 0.5,15.5" fill="#d8d8d8" stroke="#000" stroke-width="1"/><polyline points="0.5,0.5 8.0,8.0 0.5,15.5" fill="none" stroke="#000" stroke-width="1"/></svg><div style="left:1096px;top:552px;height:15px;line-height:16px;white-space:pre;color:#000;font-family:'Liberation Mono',monospace;font-weight:bold;font-size:11px;letter-spacing:-0.6px;">1115</div><div style="left:1140px;top:551px;width:24px;height:16px;background:#fcfcfc;border:1px solid #000;box-sizing:border-box"></div><div style="left:1147px;top:552px;height:15px;line-height:15px;white-space:pre;color:#000;font-family:'Liberation Mono',monospace;font-weight:bold;font-size:11px;letter-spacing:-0.6px;">fu</div><svg style="left:1163px;top:551px" width="29" height="16"><polygon points="0.5,0.5 25.5,0.5 28.5,3.5 28.5,15.5 0.5,15.5" fill="#d8d8d8" stroke="#000" stroke-width="1"/><polyline points="0.5,0.5 8.0,8.0 0.5,15.5" fill="none" stroke="#000" stroke-width="1"/></svg><div style="left:1172px;top:552px;height:15px;line-height:16px;white-space:pre;color:#000;font-family:'Liberation Mono',monospace;font-weight:bold;font-size:11px;letter-spacing:-0.6px;">0</div><div style="position:absolute;left:1194px;top:491px;width:16px;height:45px;background:#108a70;"></div><div style="left:1221px;top:492px;height:15px;line-height:15px;white-space:pre;color:#000;font-family:'Liberation Mono',monospace;font-weight:bold;font-size:11px;letter-spacing:-0.6px;">x</div><svg style="left:1230px;top:491px" width="55" height="16"><polygon points="0.5,0.5 51.5,0.5 54.5,3.5 54.5,15.5 0.5,15.5" fill="#fcfcfc" stroke="#000" stroke-width="1"/><polyline points="0.5,0.5 8.0,8.0 0.5,15.5" fill="none" stroke="#000" stroke-width="1"/></svg><div style="left:1239px;top:492px;height:15px;line-height:16px;white-space:pre;color:#000;font-family:'Liberation Mono',monospace;font-weight:bold;font-size:11px;letter-spacing:-0.6px;">378</div><div style="left:1221px;top:507px;height:15px;line-height:15px;white-space:pre;color:#000;font-family:'Liberation Mono',monospace;font-weight:bold;font-size:11px;letter-spacing:-0.6px;">y</div><svg style="left:1230px;top:506px" width="55" height="16"><polygon points="0.5,0.5 51.5,0.5 54.5,3.5 54.5,15.5 0.5,15.5" fill="#fcfcfc" stroke="#000" stroke-width="1"/><polyline points="0.5,0.5 8.0,8.0 0.5,15.5" fill="none" stroke="#000" stroke-width="1"/></svg><div style="left:1239px;top:507px;height:15px;line-height:16px;white-space:pre;color:#000;font-family:'Liberation Mono',monospace;font-weight:bold;font-size:11px;letter-spacing:-0.6px;">-101</div><div style="left:1221px;top:522px;height:15px;line-height:15px;white-space:pre;color:#000;font-family:'Liberation Mono',monospace;font-weight:bold;font-size:11px;letter-spacing:-0.6px;">x</div><svg style="left:1230px;top:521px" width="55" height="16"><polygon points="0.5,0.5 51.5,0.5 54.5,3.5 54.5,15.5 0.5,15.5" fill="#fcfcfc" stroke="#000" stroke-width="1"/><polyline points="0.5,0.5 8.0,8.0 0.5,15.5" fill="none" stroke="#000" stroke-width="1"/></svg><div style="left:1239px;top:522px;height:15px;line-height:16px;white-space:pre;color:#000;font-family:'Liberation Mono',monospace;font-weight:bold;font-size:11px;letter-spacing:-0.6px;">199</div><div style="left:1221px;top:537px;height:15px;line-height:15px;white-space:pre;color:#000;font-family:'Liberation Mono',monospace;font-weight:bold;font-size:11px;letter-spacing:-0.6px;">y</div><svg style="left:1230px;top:536px" width="55" height="16"><polygon points="0.5,0.5 51.5,0.5 54.5,3.5 54.5,15.5 0.5,15.5" fill="#fcfcfc" stroke="#000" stroke-width="1"/><polyline points="0.5,0.5 8.0,8.0 0.5,15.5" fill="none" stroke="#000" stroke-width="1"/></svg><div style="left:1239px;top:537px;height:15px;line-height:16px;white-space:pre;color:#000;font-family:'Liberation Mono',monospace;font-weight:bold;font-size:11px;letter-spacing:-0.6px;">307</div><div style="left:1289px;top:492px;height:15px;line-height:15px;white-space:pre;color:#000;font-family:'Liberation Mono',monospace;font-weight:bold;font-size:11px;letter-spacing:-0.6px;">x</div><svg style="left:1298px;top:491px" width="55" height="16"><polygon points="0.5,0.5 51.5,0.5 54.5,3.5 54.5,15.5 0.5,15.5" fill="#fcfcfc" stroke="#000" stroke-width="1"/><polyline points="0.5,0.5 8.0,8.0 0.5,15.5" fill="none" stroke="#000" stroke-width="1"/></svg><div style="left:1307px;top:492px;height:15px;line-height:16px;white-space:pre;color:#000;font-family:'Liberation Mono',monospace;font-weight:bold;font-size:11px;letter-spacing:-0.6px;">265</div><div style="left:1289px;top:507px;height:15px;line-height:15px;white-space:pre;color:#000;font-family:'Liberation Mono',monospace;font-weight:bold;font-size:11px;letter-spacing:-0.6px;">y</div><svg style="left:1298px;top:506px" width="55" height="16"><polygon points="0.5,0.5 51.5,0.5 54.5,3.5 54.5,15.5 0.5,15.5" fill="#fcfcfc" stroke="#000" stroke-width="1"/><polyline points="0.5,0.5 8.0,8.0 0.5,15.5" fill="none" stroke="#000" stroke-width="1"/></svg><div style="left:1307px;top:507px;height:15px;line-height:16px;white-space:pre;color:#000;font-family:'Liberation Mono',monospace;font-weight:bold;font-size:11px;letter-spacing:-0.6px;">-91</div><div style="left:1289px;top:522px;height:15px;line-height:15px;white-space:pre;color:#000;font-family:'Liberation Mono',monospace;font-weight:bold;font-size:11px;letter-spacing:-0.6px;">x</div><svg style="left:1298px;top:521px" width="55" height="16"><polygon points="0.5,0.5 51.5,0.5 54.5,3.5 54.5,15.5 0.5,15.5" fill="#fcfcfc" stroke="#000" stroke-width="1"/><polyline points="0.5,0.5 8.0,8.0 0.5,15.5" fill="none" stroke="#000" stroke-width="1"/></svg><div style="left:1307px;top:522px;height:15px;line-height:16px;white-space:pre;color:#000;font-family:'Liberation Mono',monospace;font-weight:bold;font-size:11px;letter-spacing:-0.6px;">148</div><div style="left:1289px;top:537px;height:15px;line-height:15px;white-space:pre;color:#000;font-family:'Liberation Mono',monospace;font-weight:bold;font-size:11px;letter-spacing:-0.6px;">y</div><svg style="left:1298px;top:536px" width="55" height="16"><polygon points="0.5,0.5 51.5,0.5 54.5,3.5 54.5,15.5 0.5,15.5" fill="#fcfcfc" stroke="#000" stroke-width="1"/><polyline points="0.5,0.5 8.0,8.0 0.5,15.5" fill="none" stroke="#000" stroke-width="1"/></svg><div style="left:1307px;top:537px;height:15px;line-height:16px;white-space:pre;color:#000;font-family:'Liberation Mono',monospace;font-weight:bold;font-size:11px;letter-spacing:-0.6px;">218</div><div style="left:1356px;top:492px;height:15px;line-height:15px;white-space:pre;color:#000;font-family:'Liberation Mono',monospace;font-weight:bold;font-size:11px;letter-spacing:-0.6px;">x</div><svg style="left:1365px;top:491px" width="54" height="16"><polygon points="0.5,0.5 50.5,0.5 53.5,3.5 53.5,15.5 0.5,15.5" fill="#fcfcfc" stroke="#000" stroke-width="1"/><polyline points="0.5,0.5 8.0,8.0 0.5,15.5" fill="none" stroke="#000" stroke-width="1"/></svg><div style="left:1374px;top:492px;height:15px;line-height:16px;white-space:pre;color:#000;font-family:'Liberation Mono',monospace;font-weight:bold;font-size:11px;letter-spacing:-0.6px;">240</div><div style="left:1356px;top:507px;height:15px;line-height:15px;white-space:pre;color:#000;font-family:'Liberation Mono',monospace;font-weight:bold;font-size:11px;letter-spacing:-0.6px;">y</div><svg style="left:1365px;top:506px" width="54" height="16"><polygon points="0.5,0.5 50.5,0.5 53.5,3.5 53.5,15.5 0.5,15.5" fill="#fcfcfc" stroke="#000" stroke-width="1"/><polyline points="0.5,0.5 8.0,8.0 0.5,15.5" fill="none" stroke="#000" stroke-width="1"/></svg><div style="left:1374px;top:507px;height:15px;line-height:16px;white-space:pre;color:#000;font-family:'Liberation Mono',monospace;font-weight:bold;font-size:11px;letter-spacing:-0.6px;">304</div><div style="left:1356px;top:522px;height:15px;line-height:15px;white-space:pre;color:#000;font-family:'Liberation Mono',monospace;font-weight:bold;font-size:11px;letter-spacing:-0.6px;">x</div><svg style="left:1365px;top:521px" width="54" height="16"><polygon points="0.5,0.5 50.5,0.5 53.5,3.5 53.5,15.5 0.5,15.5" fill="#fcfcfc" stroke="#000" stroke-width="1"/><polyline points="0.5,0.5 8.0,8.0 0.5,15.5" fill="none" stroke="#000" stroke-width="1"/></svg><div style="left:1374px;top:522px;height:15px;line-height:16px;white-space:pre;color:#000;font-family:'Liberation Mono',monospace;font-weight:bold;font-size:11px;letter-spacing:-0.6px;">162</div><div style="left:1356px;top:537px;height:15px;line-height:15px;white-space:pre;color:#000;font-family:'Liberation Mono',monospace;font-weight:bold;font-size:11px;letter-spacing:-0.6px;">y</div><svg style="left:1365px;top:536px" width="54" height="16"><polygon points="0.5,0.5 50.5,0.5 53.5,3.5 53.5,15.5 0.5,15.5" fill="#fcfcfc" stroke="#000" stroke-width="1"/><polyline points="0.5,0.5 8.0,8.0 0.5,15.5" fill="none" stroke="#000" stroke-width="1"/></svg><div style="left:1374px;top:537px;height:15px;line-height:16px;white-space:pre;color:#000;font-family:'Liberation Mono',monospace;font-weight:bold;font-size:11px;letter-spacing:-0.6px;">388</div><div style="left:1419px;top:491px;width:31px;height:31px;background:#fcfcfc;border:1px solid #000;box-sizing:border-box"></div><svg style="left:1419px;top:491px" width="31" height="31"><path d="M3,3 L28,28 M28,3 L3,28" stroke="#f00" stroke-width="2"/></svg><svg style="left:1419px;top:521px" width="30" height="16"><polygon points="0.5,0.5 26.5,0.5 29.5,3.5 29.5,15.5 0.5,15.5" fill="#f8c8c8" stroke="#000" stroke-width="1"/><polyline points="0.5,0.5 8.0,8.0 0.5,15.5" fill="none" stroke="#000" stroke-width="1"/></svg><div style="left:1428px;top:522px;height:15px;line-height:16px;white-space:pre;color:#000;font-family:'Liberation Mono',monospace;font-weight:bold;font-size:11px;letter-spacing:-0.6px;">13</div><div style="left:1419px;top:536px;width:16px;height:16px;background:#fcfcfc;border:1px solid #000;box-sizing:border-box"></div><svg style="left:1434px;top:536px" width="16" height="16"><rect x="0.5" y="0.5" width="15" height="15" fill="#f00" stroke="#000"/><circle cx="8.0" cy="8.0" r="6.9" fill="#f00" stroke="#000" stroke-width="1"/></svg><svg style="left:1419px;top:551px" width="30" height="16"><polygon points="0.5,0.5 26.5,0.5 29.5,3.5 29.5,15.5 0.5,15.5" fill="#f00" stroke="#000" stroke-width="1"/><polyline points="0.5,0.5 8.0,8.0 0.5,15.5" fill="none" stroke="#fff" stroke-width="1"/></svg><div style="left:1428px;top:552px;height:15px;line-height:16px;white-space:pre;color:#fff;font-family:'Liberation Mono',monospace;font-weight:bold;font-size:11px;letter-spacing:-0.6px;">13</div><div style="left:1194px;top:551px;width:16px;height:16px;background:#c8c8f8;border:1px solid #000;box-sizing:border-box"></div><div style="left:1209px;top:551px;width:16px;height:16px;background:#c8c8f8;border:1px solid #000;box-sizing:border-box"></div><div style="left:1224px;top:551px;width:16px;height:16px;background:#c8c8f8;border:1px solid #000;box-sizing:border-box"></div><div style="left:1239px;top:551px;width:16px;height:16px;background:#c8c8f8;border:1px solid #000;box-sizing:border-box"></div><div style="left:1254px;top:551px;width:16px;height:16px;background:#c8c8f8;border:1px solid #000;box-sizing:border-box"></div><div style="position:absolute;left:1227px;top:554px;width:9px;height:9px;background:#f8f8f8;"></div><div style="left:1269px;top:551px;width:17px;height:16px;background:#fcfcfc;border:1px solid #000;box-sizing:border-box"></div><div style="left:1270px;top:552px;height:15px;line-height:15px;white-space:pre;color:#000;font-family:'Liberation Mono',monospace;font-weight:bold;font-size:11px;letter-spacing:-0.6px;">rn</div><div style="left:1285px;top:551px;width:14px;height:16px;background:#fcfcfc;border:1px solid #000;box-sizing:border-box"></div><div style="left:1288px;top:552px;height:15px;line-height:15px;white-space:pre;color:#000;font-family:'Liberation Mono',monospace;font-weight:bold;font-size:11px;letter-spacing:-0.6px;">t</div><svg style="left:1298px;top:551px" width="55" height="16"><polygon points="0.5,0.5 51.5,0.5 54.5,3.5 54.5,15.5 0.5,15.5" fill="#c8c8f8" stroke="#000" stroke-width="1"/><polyline points="0.5,0.5 8.0,8.0 0.5,15.5" fill="none" stroke="#000" stroke-width="1"/></svg><div style="left:1307px;top:552px;height:15px;line-height:16px;white-space:pre;color:#000;font-family:'Liberation Mono',monospace;font-weight:bold;font-size:11px;letter-spacing:-0.6px;">2605</div><div style="left:1365px;top:551px;width:16px;height:16px;background:#c4f6f6;border:1px solid #000;box-sizing:border-box"></div><div style="left:1380px;top:551px;width:39px;height:16px;background:#fcfcfc;border:1px solid #000;box-sizing:border-box"></div><div style="left:1385px;top:552px;height:15px;line-height:15px;white-space:pre;color:#000;font-family:'Liberation Mono',monospace;font-weight:bold;font-size:11px;letter-spacing:-0.6px;">osc</div><div style="left:1058px;top:570px;width:385px;height:76px;background:#fff;border:1px solid #000;box-sizing:border-box"></div><div style="left:1058px;top:570px;width:134px;height:16px;background:#f00;border:1px solid #000;box-sizing:border-box"></div><div style="left:1058px;top:585px;width:134px;height:16px;background:#0f0;border:1px solid #000;box-sizing:border-box"></div><div style="left:1058px;top:600px;width:134px;height:16px;background:#00f;border:1px solid #000;box-sizing:border-box"></div><div style="left:1058px;top:615px;width:134px;height:16px;background:#fcfcfc;border:1px solid #000;box-sizing:border-box"></div><div style="position:absolute;left:1107px;top:571px;width:3px;height:13px;background:#fff;"></div><div style="position:absolute;left:1138px;top:586px;width:3px;height:13px;background:#fff;"></div><div style="position:absolute;left:1166px;top:601px;width:3px;height:13px;background:#fff;"></div><div style="position:absolute;left:1095px;top:616px;width:3px;height:13px;background:#000;"></div><div style="left:1071px;top:617px;height:15px;line-height:15px;white-space:pre;color:#000;font-family:'Liberation Mono',monospace;font-weight:bold;font-size:11px;letter-spacing:-0.6px;">alpha</div><div style="left:1058px;top:630px;width:16px;height:16px;background:#fcfcfc;border:1px solid #000;box-sizing:border-box"></div><div style="left:1059px;top:631px;height:15px;line-height:15px;white-space:pre;color:#000;font-family:'Liberation Mono',monospace;font-weight:bold;font-size:11px;letter-spacing:-0.6px;">rn</div><svg style="left:1058px;top:630px" width="16" height="16"><path d="M2,2 L14,14 M14,2 L2,14" stroke="#f00" stroke-width="1"/></svg><div style="left:1073px;top:630px;width:15px;height:16px;background:#fcfcfc;border:1px solid #000;box-sizing:border-box"></div><div style="left:1076px;top:631px;height:15px;line-height:15px;white-space:pre;color:#000;font-family:'Liberation Mono',monospace;font-weight:bold;font-size:11px;letter-spacing:-0.6px;">t</div><svg style="left:1087px;top:630px" width="54" height="16"><polygon points="0.5,0.5 50.5,0.5 53.5,3.5 53.5,15.5 0.5,15.5" fill="#d8d8d8" stroke="#000" stroke-width="1"/><polyline points="0.5,0.5 8.0,8.0 0.5,15.5" fill="none" stroke="#000" stroke-width="1"/></svg><div style="left:1096px;top:631px;height:15px;line-height:16px;white-space:pre;color:#000;font-family:'Liberation Mono',monospace;font-weight:bold;font-size:11px;letter-spacing:-0.6px;">1080</div><div style="left:1140px;top:630px;width:24px;height:16px;background:#fcfcfc;border:1px solid #000;box-sizing:border-box"></div><div style="left:1147px;top:631px;height:15px;line-height:15px;white-space:pre;color:#000;font-family:'Liberation Mono',monospace;font-weight:bold;font-size:11px;letter-spacing:-0.6px;">fu</div><svg style="left:1163px;top:630px" width="29" height="16"><polygon points="0.5,0.5 25.5,0.5 28.5,3.5 28.5,15.5 0.5,15.5" fill="#d8d8d8" stroke="#000" stroke-width="1"/><polyline points="0.5,0.5 8.0,8.0 0.5,15.5" fill="none" stroke="#000" stroke-width="1"/></svg><div style="left:1172px;top:631px;height:15px;line-height:16px;white-space:pre;color:#000;font-family:'Liberation Mono',monospace;font-weight:bold;font-size:11px;letter-spacing:-0.6px;">0</div><div style="position:absolute;left:1194px;top:570px;width:16px;height:45px;background:#6098d0;"></div><div style="left:1221px;top:571px;height:15px;line-height:15px;white-space:pre;color:#000;font-family:'Liberation Mono',monospace;font-weight:bold;font-size:11px;letter-spacing:-0.6px;">x</div><svg style="left:1230px;top:570px" width="55" height="16"><polygon points="0.5,0.5 51.5,0.5 54.5,3.5 54.5,15.5 0.5,15.5" fill="#fcfcfc" stroke="#000" stroke-width="1"/><polyline points="0.5,0.5 8.0,8.0 0.5,15.5" fill="none" stroke="#000" stroke-width="1"/></svg><div style="left:1239px;top:571px;height:15px;line-height:16px;white-space:pre;color:#000;font-family:'Liberation Mono',monospace;font-weight:bold;font-size:11px;letter-spacing:-0.6px;">231</div><div style="left:1221px;top:586px;height:15px;line-height:15px;white-space:pre;color:#000;font-family:'Liberation Mono',monospace;font-weight:bold;font-size:11px;letter-spacing:-0.6px;">y</div><svg style="left:1230px;top:585px" width="55" height="16"><polygon points="0.5,0.5 51.5,0.5 54.5,3.5 54.5,15.5 0.5,15.5" fill="#fcfcfc" stroke="#000" stroke-width="1"/><polyline points="0.5,0.5 8.0,8.0 0.5,15.5" fill="none" stroke="#000" stroke-width="1"/></svg><div style="left:1239px;top:586px;height:15px;line-height:16px;white-space:pre;color:#000;font-family:'Liberation Mono',monospace;font-weight:bold;font-size:11px;letter-spacing:-0.6px;">-269</div><div style="left:1221px;top:601px;height:15px;line-height:15px;white-space:pre;color:#000;font-family:'Liberation Mono',monospace;font-weight:bold;font-size:11px;letter-spacing:-0.6px;">x</div><svg style="left:1230px;top:600px" width="55" height="16"><polygon points="0.5,0.5 51.5,0.5 54.5,3.5 54.5,15.5 0.5,15.5" fill="#fcfcfc" stroke="#000" stroke-width="1"/><polyline points="0.5,0.5 8.0,8.0 0.5,15.5" fill="none" stroke="#000" stroke-width="1"/></svg><div style="left:1239px;top:601px;height:15px;line-height:16px;white-space:pre;color:#000;font-family:'Liberation Mono',monospace;font-weight:bold;font-size:11px;letter-spacing:-0.6px;">193</div><div style="left:1221px;top:616px;height:15px;line-height:15px;white-space:pre;color:#000;font-family:'Liberation Mono',monospace;font-weight:bold;font-size:11px;letter-spacing:-0.6px;">y</div><svg style="left:1230px;top:615px" width="55" height="16"><polygon points="0.5,0.5 51.5,0.5 54.5,3.5 54.5,15.5 0.5,15.5" fill="#fcfcfc" stroke="#000" stroke-width="1"/><polyline points="0.5,0.5 8.0,8.0 0.5,15.5" fill="none" stroke="#000" stroke-width="1"/></svg><div style="left:1239px;top:616px;height:15px;line-height:16px;white-space:pre;color:#000;font-family:'Liberation Mono',monospace;font-weight:bold;font-size:11px;letter-spacing:-0.6px;">-178</div><div style="left:1289px;top:571px;height:15px;line-height:15px;white-space:pre;color:#000;font-family:'Liberation Mono',monospace;font-weight:bold;font-size:11px;letter-spacing:-0.6px;">x</div><svg style="left:1298px;top:570px" width="55" height="16"><polygon points="0.5,0.5 51.5,0.5 54.5,3.5 54.5,15.5 0.5,15.5" fill="#fcfcfc" stroke="#000" stroke-width="1"/><polyline points="0.5,0.5 8.0,8.0 0.5,15.5" fill="none" stroke="#000" stroke-width="1"/></svg><div style="left:1307px;top:571px;height:15px;line-height:16px;white-space:pre;color:#000;font-family:'Liberation Mono',monospace;font-weight:bold;font-size:11px;letter-spacing:-0.6px;">248</div><div style="left:1289px;top:586px;height:15px;line-height:15px;white-space:pre;color:#000;font-family:'Liberation Mono',monospace;font-weight:bold;font-size:11px;letter-spacing:-0.6px;">y</div><svg style="left:1298px;top:585px" width="55" height="16"><polygon points="0.5,0.5 51.5,0.5 54.5,3.5 54.5,15.5 0.5,15.5" fill="#fcfcfc" stroke="#000" stroke-width="1"/><polyline points="0.5,0.5 8.0,8.0 0.5,15.5" fill="none" stroke="#000" stroke-width="1"/></svg><div style="left:1307px;top:586px;height:15px;line-height:16px;white-space:pre;color:#000;font-family:'Liberation Mono',monospace;font-weight:bold;font-size:11px;letter-spacing:-0.6px;">-196</div><div style="left:1289px;top:601px;height:15px;line-height:15px;white-space:pre;color:#000;font-family:'Liberation Mono',monospace;font-weight:bold;font-size:11px;letter-spacing:-0.6px;">x</div><svg style="left:1298px;top:600px" width="55" height="16"><polygon points="0.5,0.5 51.5,0.5 54.5,3.5 54.5,15.5 0.5,15.5" fill="#fcfcfc" stroke="#000" stroke-width="1"/><polyline points="0.5,0.5 8.0,8.0 0.5,15.5" fill="none" stroke="#000" stroke-width="1"/></svg><div style="left:1307px;top:601px;height:15px;line-height:16px;white-space:pre;color:#000;font-family:'Liberation Mono',monospace;font-weight:bold;font-size:11px;letter-spacing:-0.6px;">-245</div><div style="left:1289px;top:616px;height:15px;line-height:15px;white-space:pre;color:#000;font-family:'Liberation Mono',monospace;font-weight:bold;font-size:11px;letter-spacing:-0.6px;">y</div><svg style="left:1298px;top:615px" width="55" height="16"><polygon points="0.5,0.5 51.5,0.5 54.5,3.5 54.5,15.5 0.5,15.5" fill="#fcfcfc" stroke="#000" stroke-width="1"/><polyline points="0.5,0.5 8.0,8.0 0.5,15.5" fill="none" stroke="#000" stroke-width="1"/></svg><div style="left:1307px;top:616px;height:15px;line-height:16px;white-space:pre;color:#000;font-family:'Liberation Mono',monospace;font-weight:bold;font-size:11px;letter-spacing:-0.6px;">-273</div><div style="left:1356px;top:571px;height:15px;line-height:15px;white-space:pre;color:#000;font-family:'Liberation Mono',monospace;font-weight:bold;font-size:11px;letter-spacing:-0.6px;">x</div><svg style="left:1365px;top:570px" width="54" height="16"><polygon points="0.5,0.5 50.5,0.5 53.5,3.5 53.5,15.5 0.5,15.5" fill="#fcfcfc" stroke="#000" stroke-width="1"/><polyline points="0.5,0.5 8.0,8.0 0.5,15.5" fill="none" stroke="#000" stroke-width="1"/></svg><div style="left:1374px;top:571px;height:15px;line-height:16px;white-space:pre;color:#000;font-family:'Liberation Mono',monospace;font-weight:bold;font-size:11px;letter-spacing:-0.6px;">63</div><div style="left:1356px;top:586px;height:15px;line-height:15px;white-space:pre;color:#000;font-family:'Liberation Mono',monospace;font-weight:bold;font-size:11px;letter-spacing:-0.6px;">y</div><svg style="left:1365px;top:585px" width="54" height="16"><polygon points="0.5,0.5 50.5,0.5 53.5,3.5 53.5,15.5 0.5,15.5" fill="#fcfcfc" stroke="#000" stroke-width="1"/><polyline points="0.5,0.5 8.0,8.0 0.5,15.5" fill="none" stroke="#000" stroke-width="1"/></svg><div style="left:1374px;top:586px;height:15px;line-height:16px;white-space:pre;color:#000;font-family:'Liberation Mono',monospace;font-weight:bold;font-size:11px;letter-spacing:-0.6px;">-384</div><div style="left:1356px;top:601px;height:15px;line-height:15px;white-space:pre;color:#000;font-family:'Liberation Mono',monospace;font-weight:bold;font-size:11px;letter-spacing:-0.6px;">x</div><svg style="left:1365px;top:600px" width="54" height="16"><polygon points="0.5,0.5 50.5,0.5 53.5,3.5 53.5,15.5 0.5,15.5" fill="#fcfcfc" stroke="#000" stroke-width="1"/><polyline points="0.5,0.5 8.0,8.0 0.5,15.5" fill="none" stroke="#000" stroke-width="1"/></svg><div style="left:1374px;top:601px;height:15px;line-height:16px;white-space:pre;color:#000;font-family:'Liberation Mono',monospace;font-weight:bold;font-size:11px;letter-spacing:-0.6px;">-251</div><div style="left:1356px;top:616px;height:15px;line-height:15px;white-space:pre;color:#000;font-family:'Liberation Mono',monospace;font-weight:bold;font-size:11px;letter-spacing:-0.6px;">y</div><svg style="left:1365px;top:615px" width="54" height="16"><polygon points="0.5,0.5 50.5,0.5 53.5,3.5 53.5,15.5 0.5,15.5" fill="#fcfcfc" stroke="#000" stroke-width="1"/><polyline points="0.5,0.5 8.0,8.0 0.5,15.5" fill="none" stroke="#000" stroke-width="1"/></svg><div style="left:1374px;top:616px;height:15px;line-height:16px;white-space:pre;color:#000;font-family:'Liberation Mono',monospace;font-weight:bold;font-size:11px;letter-spacing:-0.6px;">-124</div><div style="left:1419px;top:570px;width:31px;height:31px;background:#fcfcfc;border:1px solid #000;box-sizing:border-box"></div><svg style="left:1419px;top:570px" width="31" height="31"><path d="M3,3 L28,28 M28,3 L3,28" stroke="#f00" stroke-width="2"/></svg><svg style="left:1419px;top:600px" width="30" height="16"><polygon points="0.5,0.5 26.5,0.5 29.5,3.5 29.5,15.5 0.5,15.5" fill="#f8c8c8" stroke="#000" stroke-width="1"/><polyline points="0.5,0.5 8.0,8.0 0.5,15.5" fill="none" stroke="#000" stroke-width="1"/></svg><div style="left:1428px;top:601px;height:15px;line-height:16px;white-space:pre;color:#000;font-family:'Liberation Mono',monospace;font-weight:bold;font-size:11px;letter-spacing:-0.6px;">13</div><div style="left:1419px;top:615px;width:16px;height:16px;background:#fcfcfc;border:1px solid #000;box-sizing:border-box"></div><svg style="left:1434px;top:615px" width="16" height="16"><rect x="0.5" y="0.5" width="15" height="15" fill="#f00" stroke="#000"/><circle cx="8.0" cy="8.0" r="6.9" fill="#f00" stroke="#000" stroke-width="1"/></svg><svg style="left:1419px;top:630px" width="30" height="16"><polygon points="0.5,0.5 26.5,0.5 29.5,3.5 29.5,15.5 0.5,15.5" fill="#f00" stroke="#000" stroke-width="1"/><polyline points="0.5,0.5 8.0,8.0 0.5,15.5" fill="none" stroke="#fff" stroke-width="1"/></svg><div style="left:1428px;top:631px;height:15px;line-height:16px;white-space:pre;color:#fff;font-family:'Liberation Mono',monospace;font-weight:bold;font-size:11px;letter-spacing:-0.6px;">13</div><div style="left:1194px;top:630px;width:16px;height:16px;background:#c8c8f8;border:1px solid #000;box-sizing:border-box"></div><div style="left:1209px;top:630px;width:16px;height:16px;background:#c8c8f8;border:1px solid #000;box-sizing:border-box"></div><div style="left:1224px;top:630px;width:16px;height:16px;background:#c8c8f8;border:1px solid #000;box-sizing:border-box"></div><div style="left:1239px;top:630px;width:16px;height:16px;background:#c8c8f8;border:1px solid #000;box-sizing:border-box"></div><div style="left:1254px;top:630px;width:16px;height:16px;background:#c8c8f8;border:1px solid #000;box-sizing:border-box"></div><div style="position:absolute;left:1227px;top:633px;width:9px;height:9px;background:#f8f8f8;"></div><div style="left:1269px;top:630px;width:17px;height:16px;background:#fcfcfc;border:1px solid #000;box-sizing:border-box"></div><div style="left:1270px;top:631px;height:15px;line-height:15px;white-space:pre;color:#000;font-family:'Liberation Mono',monospace;font-weight:bold;font-size:11px;letter-spacing:-0.6px;">rn</div><div style="left:1285px;top:630px;width:14px;height:16px;background:#fcfcfc;border:1px solid #000;box-sizing:border-box"></div><div style="left:1288px;top:631px;height:15px;line-height:15px;white-space:pre;color:#000;font-family:'Liberation Mono',monospace;font-weight:bold;font-size:11px;letter-spacing:-0.6px;">t</div><svg style="left:1298px;top:630px" width="55" height="16"><polygon points="0.5,0.5 51.5,0.5 54.5,3.5 54.5,15.5 0.5,15.5" fill="#c8c8f8" stroke="#000" stroke-width="1"/><polyline points="0.5,0.5 8.0,8.0 0.5,15.5" fill="none" stroke="#000" stroke-width="1"/></svg><div style="left:1307px;top:631px;height:15px;line-height:16px;white-space:pre;color:#000;font-family:'Liberation Mono',monospace;font-weight:bold;font-size:11px;letter-spacing:-0.6px;">1217</div><div style="left:855px;top:770px;width:600px;height:110px;box-shadow:0 0 3px rgba(0,0,0,.35);border-radius:5px 5px 0 0"></div><div style="left:859px;top:773px;width:600px;height:27px;border-radius:5px 5px 0 0;background:linear-gradient(#f0f0f0,#dcdcdc 50%,#cfcfcf);box-shadow:inset 0 1px 0 #fff"></div><svg style="left:869px;top:782px" width="12" height="9"><polygon points="1,1 11,1 6,8" fill="#6a6a6a"/></svg><div style="position:absolute;left:885px;top:778px;white-space:pre;color:#606060;font-family:'Liberation Sans',sans-serif;font-weight:bold;font-size:14px;line-height:17px;letter-spacing:0.15px">Terminal - oscar@taller: ~/Pd/patches/os-patches/taller-sintesis/taller2(</div><svg style="left:1370px;top:779px" width="64" height="16"><rect x="4" y="7" width="11" height="2.2" fill="#6a6a6a"/><rect x="26" y="7" width="11" height="2.2" fill="#6a6a6a"/><rect x="30.4" y="2.6" width="2.2" height="11" fill="#6a6a6a"/><path d="M48 3 L57 12 M57 3 L48 12" stroke="#6a6a6a" stroke-width="2.2"/></svg><div style="position:absolute;left:859px;top:800px;width:578px;height:22px;background:#d4d4d4;"></div><div style="position:absolute;left:869px;top:802px;white-space:pre;color:#3a3a3a;font-family:'Liberation Sans',sans-serif;font-size:13px;line-height:16px">Archivo</div><div style="position:absolute;left:929px;top:802px;white-space:pre;color:#3a3a3a;font-family:'Liberation Sans',sans-serif;font-size:13px;line-height:16px">Editar</div><div style="position:absolute;left:979px;top:802px;white-space:pre;color:#3a3a3a;font-family:'Liberation Sans',sans-serif;font-size:13px;line-height:16px">Ver</div><div style="position:absolute;left:1016px;top:802px;white-space:pre;color:#3a3a3a;font-family:'Liberation Sans',sans-serif;font-size:13px;line-height:16px">Terminal</div><div style="position:absolute;left:1084px;top:802px;white-space:pre;color:#3a3a3a;font-family:'Liberation Sans',sans-serif;font-size:13px;line-height:16px">Pestañas</div><div style="position:absolute;left:1151px;top:802px;white-space:pre;color:#3a3a3a;font-family:'Liberation Sans',sans-serif;font-size:13px;line-height:16px">Ayuda</div><div style="position:absolute;left:859px;top:822px;width:563px;height:48px;background:#2e3338;"></div><div style="position:absolute;left:1422px;top:822px;width:15px;height:48px;background:#dcdcdc;"></div><div style="left:1424px;top:825px;width:9px;height:42px;border:1px solid #8a8a8a;border-radius:5px;background:#d0d0d0"></div><div style="left:861px;top:823px;white-space:pre;font-family:'Liberation Mono',monospace;font-size:12.5px;line-height:16px;letter-spacing:-0.5px;font-weight:bold;color:#4ee44e">oscar@taller<span style="color:#d3d7cf;font-weight:normal">:</span><span style="color:#6a6aff">~/Pd/patches/os-patches/taller-sintesis/taller2020/taller2020-img</span><span style="color:#d3d7cf;font-weight:normal">$</span></div><div style="left:861px;top:839px;white-space:pre;font-family:'Liberation Mono',monospace;font-size:12.5px;line-height:16px;letter-spacing:-0.5px;color:#d3d7cf">scrot -s taller2020-img06.png</div><div style="left:861px;top:853px;width:9px;height:15px;border:1px solid #e0e0e0;box-sizing:border-box"></div><div style="left:623px;top:834px;width:190px;height:36px;background:rgba(20,20,20,.93)"></div><div style="left:623px;top:834px;width:74px;height:22px;background:rgba(255,255,255,0)"></div><div style="left:623px;top:834px;width:74px;height:22px;background:#8c8c8c"></div><div style="left:629px;top:839px;width:27px;height:27px;border:1.5px solid #e8e8e8;border-radius:2px;background:#1c1c1c;box-sizing:border-box"></div><div style="position:absolute;left:632px;top:840px;white-space:pre;color:#ddd;font-family:'Liberation Mono';font-size:7px;line-height:8px">$_</div><div style="left:663px;top:840px;width:2px;height:25px;background:#444"></div><div style="left:681px;top:851px;width:10px;height:15px;background:#4a4a4a;border-radius:2px"></div><div style="left:684px;top:839px;width:4px;height:13px;background:repeating-linear-gradient(#ddd 0 2px,#777 2px 3px)"></div><svg style="left:708px;top:839px" width="28" height="28"><defs><linearGradient id="au" x1="0" y1="0" x2="0" y2="1"><stop offset="0" stop-color="#3ab4f0"/><stop offset="1" stop-color="#0a6ad0"/></linearGradient></defs>
<circle cx="14" cy="14" r="13.5" fill="url(#au)"/><path d="M6,18 Q6,6 14,6 Q22,6 22,18" stroke="#fff" stroke-width="2" fill="none"/>
<rect x="5" y="15" width="3" height="6" rx="1" fill="#fff"/><rect x="20" y="15" width="3" height="6" rx="1" fill="#fff"/>
<path d="M10,20 L10,13 M12,21 L12,10 M14,19 L14,12 M16,21 L16,10 M18,20 L18,13" stroke="#fff" stroke-width="1.3"/></svg><svg style="left:743px;top:839px" width="30" height="28"><polygon points="15,1 28,27 2,27" fill="#c8352a"/>
<path d="M9,27 L9,23 M12,27 L12,21 M15,27 L15,18 M18,27 L18,21 M21,27 L21,23" stroke="#1a1a1a" stroke-width="1"/></svg><div style="left:781px;top:840px;width:7px;height:7px;background:#10e010;border-radius:50%;box-shadow:0 0 0 1px #0a0"></div><div style="left:782px;top:852px;width:22px;height:14px;background:#fff"></div><div style="position:absolute;left:783px;top:851px;white-space:pre;color:#000;font-family:'Liberation Sans',sans-serif;font-size:12px;line-height:14px">Pd</div></body></html>
